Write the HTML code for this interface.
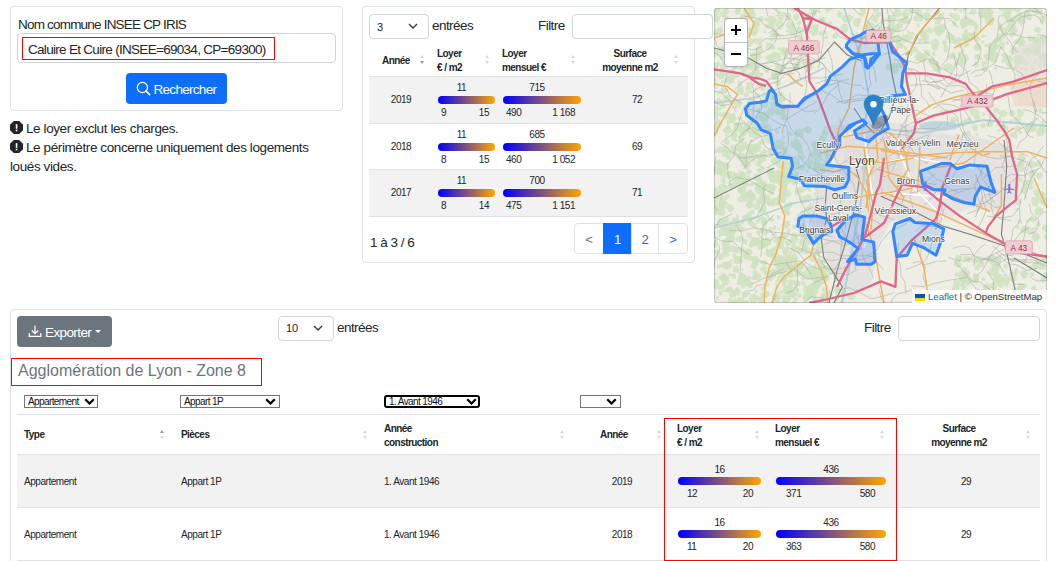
<!DOCTYPE html>
<html><head><meta charset="utf-8">
<style>
*{box-sizing:border-box;margin:0;padding:0}
html,body{width:1057px;height:561px;overflow:hidden;background:#fff}
body{position:relative;font-family:"Liberation Sans",sans-serif;color:#212529}
.a{position:absolute;white-space:nowrap}
.card{position:absolute;border:1px solid #dee2e6;border-radius:4px;background:#fff}
.inp{position:absolute;border:1px solid #ced4da;border-radius:4px;background:#fff}
.red{position:absolute;border:1px solid #ff0000}
.bar{position:absolute;height:8px;border-radius:4px;background:linear-gradient(to right,#0000ff,#ffa500)}
.sm{font-size:10px;color:#212529;letter-spacing:-0.45px}
.th{font-size:10px;font-weight:bold;color:#212529;line-height:13.5px;letter-spacing:-0.55px}
.sort{position:absolute;width:5px;height:12px}
.sort:before{content:"";position:absolute;left:0;top:1px;border-left:2.5px solid transparent;border-right:2.5px solid transparent;border-bottom:3px solid #d8d8d8}
.sort:after{content:"";position:absolute;left:0;top:7px;border-left:2.5px solid transparent;border-right:2.5px solid transparent;border-top:3px solid #d8d8d8}
.sort.up:before{border-bottom-color:#9a9a9a}
.sort.dn:after{border-top-color:#9a9a9a}
.stripe{position:absolute;background:#f2f2f2}
.hl{position:absolute;height:1px;background:#dee2e6}
.chev{position:absolute;width:7px;height:7px;border-right:1.5px solid #343a40;border-bottom:1.5px solid #343a40;transform:rotate(45deg)}
.pg{position:absolute;top:223px;height:31px;border:1px solid #dee2e6;background:#fff;color:#0d6efd;font-size:13px;text-align:center;line-height:31px}
.sel{position:absolute;border:1px solid #767676;background:#fff;font-size:10px;line-height:11px;padding-left:3px;color:#111;letter-spacing:-0.6px}
.bchev{position:absolute;width:6px;height:6px;border-right:2px solid #000;border-bottom:2px solid #000;transform:rotate(45deg)}
</style></head><body>

<!-- Card 1: search -->
<div class="card" style="left:10px;top:6px;width:333px;height:105px"></div>
<div class="a" style="left:18px;top:17px;font-size:13.5px;letter-spacing:-0.8px;line-height:16px">Nom commune INSEE CP IRIS</div>
<div class="inp" style="left:17px;top:33px;width:319px;height:30px"></div>
<div class="red" style="left:22px;top:37px;width:253px;height:23px"></div>
<div class="a" style="left:28px;top:42px;font-size:13.5px;letter-spacing:-0.7px;line-height:16px">Caluire Et Cuire (INSEE=69034, CP=69300)</div>
<div class="a" style="left:126px;top:73px;width:101px;height:31px;background:#0d6efd;border-radius:4px"></div>
<svg class="a" style="left:136px;top:81px" width="16" height="16" viewBox="0 0 16 16"><circle cx="6.4" cy="6.5" r="5.1" fill="none" stroke="#fff" stroke-width="1.25"/><path d="M10 10.1 L13.6 13.6" stroke="#fff" stroke-width="1.6" stroke-linecap="round"/></svg>
<div class="a" style="left:153.5px;top:82px;font-size:13.5px;letter-spacing:-0.7px;line-height:16px;color:#fff">Rechercher</div>

<!-- notes -->
<svg class="a" style="left:10px;top:121.2px" width="13" height="13" viewBox="0 0 13 13"><polygon points="3.8,0 9.2,0 13,3.8 13,9.2 9.2,13 3.8,13 0,9.2 0,3.8" fill="#212529"/><rect x="5.75" y="3.2" width="1.6" height="4.6" fill="#fff"/><rect x="5.75" y="8.7" width="1.6" height="1.6" fill="#fff"/></svg>
<div class="a" style="left:26px;top:121px;font-size:13.5px;letter-spacing:-0.4px;line-height:16px">Le loyer exclut les charges.</div>
<svg class="a" style="left:10px;top:140.1px" width="13" height="13" viewBox="0 0 13 13"><polygon points="3.8,0 9.2,0 13,3.8 13,9.2 9.2,13 3.8,13 0,9.2 0,3.8" fill="#212529"/><rect x="5.75" y="3.2" width="1.6" height="4.6" fill="#fff"/><rect x="5.75" y="8.7" width="1.6" height="1.6" fill="#fff"/></svg>
<div class="a" style="left:26px;top:140px;font-size:13.5px;letter-spacing:-0.4px;line-height:16px">Le périmètre concerne uniquement des logements</div>
<div class="a" style="left:10px;top:159px;font-size:13.5px;letter-spacing:-0.4px;line-height:16px">loués vides.</div>

<!-- Card 2: table -->
<div class="card" style="left:362px;top:6px;width:333px;height:257px"></div>
<div class="inp" style="left:369px;top:14px;width:60px;height:25px"></div>
<div class="a" style="left:377px;top:20px;font-size:11px;line-height:14px">3</div>
<svg class="a" style="left:408px;top:22.5px" width="10" height="6" viewBox="0 0 10 6"><path d="M1 1L5 5L9 1" fill="none" stroke="#343a40" stroke-width="1.4"/></svg>
<div class="a" style="left:432px;top:18px;font-size:13.5px;letter-spacing:-0.55px;line-height:16px">entrées</div>
<div class="a" style="left:538px;top:18px;font-size:13.5px;letter-spacing:-0.55px;line-height:16px">Filtre</div>
<div class="inp" style="left:572px;top:14px;width:141px;height:25px"></div>

<div class="stripe" style="left:369px;top:76px;width:319px;height:47px"></div>
<div class="stripe" style="left:369px;top:169px;width:319px;height:47px"></div>
<div class="hl" style="left:369px;top:76px;width:319px"></div>
<div class="hl" style="left:369px;top:123px;width:319px"></div>
<div class="hl" style="left:369px;top:169px;width:319px"></div>
<div class="hl" style="left:369px;top:216px;width:319px"></div>

<div class="a th" style="left:382px;top:54px">Année</div>
<div class="sort dn" style="left:420px;top:54px"></div>
<div class="a th" style="left:437px;top:47px">Loyer<br>€ / m2</div>
<div class="sort" style="left:485px;top:54px"></div>
<div class="a th" style="left:502px;top:47px">Loyer<br>mensuel €</div>
<div class="sort" style="left:571px;top:54px"></div>
<div class="a th" style="left:600px;top:47px;text-align:center;width:60px">Surface<br>moyenne m2</div>
<div class="sort" style="left:674px;top:54px"></div>

<!-- row template values -->
<div class="a sm" style="left:381px;width:40px;text-align:center;top:94px;line-height:12px">2019</div>
<div class="bar" style="left:438px;top:96px;width:57px"></div>
<div class="a sm" style="left:433px;width:57px;text-align:center;top:82px;line-height:12px">11</div>
<div class="a sm" style="left:441px;top:107px;line-height:12px">9</div>
<div class="a sm" style="left:438px;width:51px;text-align:right;top:107px;line-height:12px">15</div>
<div class="bar" style="left:503px;top:96px;width:78px"></div>
<div class="a sm" style="left:498px;width:78px;text-align:center;top:82px;line-height:12px">715</div>
<div class="a sm" style="left:506px;top:107px;line-height:12px">490</div>
<div class="a sm" style="left:503px;width:72px;text-align:right;top:107px;line-height:12px">1 168</div>
<div class="a sm" style="left:607px;width:60px;text-align:center;top:94px;line-height:12px">72</div>
<div class="a sm" style="left:381px;width:40px;text-align:center;top:141px;line-height:12px">2018</div>
<div class="bar" style="left:438px;top:143px;width:57px"></div>
<div class="a sm" style="left:433px;width:57px;text-align:center;top:129px;line-height:12px">11</div>
<div class="a sm" style="left:441px;top:154px;line-height:12px">8</div>
<div class="a sm" style="left:438px;width:51px;text-align:right;top:154px;line-height:12px">15</div>
<div class="bar" style="left:503px;top:143px;width:78px"></div>
<div class="a sm" style="left:498px;width:78px;text-align:center;top:129px;line-height:12px">685</div>
<div class="a sm" style="left:506px;top:154px;line-height:12px">460</div>
<div class="a sm" style="left:503px;width:72px;text-align:right;top:154px;line-height:12px">1 052</div>
<div class="a sm" style="left:607px;width:60px;text-align:center;top:141px;line-height:12px">69</div>
<div class="a sm" style="left:381px;width:40px;text-align:center;top:187px;line-height:12px">2017</div>
<div class="bar" style="left:438px;top:189px;width:57px"></div>
<div class="a sm" style="left:433px;width:57px;text-align:center;top:175px;line-height:12px">11</div>
<div class="a sm" style="left:441px;top:200px;line-height:12px">8</div>
<div class="a sm" style="left:438px;width:51px;text-align:right;top:200px;line-height:12px">14</div>
<div class="bar" style="left:503px;top:189px;width:78px"></div>
<div class="a sm" style="left:498px;width:78px;text-align:center;top:175px;line-height:12px">700</div>
<div class="a sm" style="left:506px;top:200px;line-height:12px">475</div>
<div class="a sm" style="left:503px;width:72px;text-align:right;top:200px;line-height:12px">1 151</div>
<div class="a sm" style="left:607px;width:60px;text-align:center;top:187px;line-height:12px">71</div>

<div class="a" style="left:370px;top:235px;font-size:13.5px;letter-spacing:-0.5px;line-height:16px">1 à 3 / 6</div>
<div class="pg" style="left:574px;width:30px;color:#6c757d;border-radius:4px 0 0 4px">&lt;</div>
<div class="pg" style="left:603px;width:29px;background:#0d6efd;border-color:#0d6efd;color:#fff">1</div>
<div class="pg" style="left:631px;width:28px">2</div>
<div class="pg" style="left:658px;width:30px;border-radius:0 4px 4px 0">&gt;</div>

<!-- MAP -->
<svg class="a" style="left:714px;top:8px" width="333" height="295" viewBox="0 0 333 295">
<rect width="333" height="295" fill="#eeeee4"/>
<polygon points="30.2,215.2 28.3,216.7 25.7,217.1 25.2,215.2 26.1,212.4 28.7,212.7" fill="#cfe3bf" opacity="0.85"/>
<polygon points="21.7,231.1 19.7,233.6 14.8,235.1 13.6,231.1 14.6,227.4 19.8,226.3" fill="#cfe3bf" opacity="0.85"/>
<polygon points="85.5,281.2 83.9,284.2 81.2,282.9 80.0,281.2 80.8,278.6 83.3,278.8" fill="#cfe3bf" opacity="0.85"/>
<polygon points="48.0,181.4 46.3,185.3 42.2,185.4 40.6,181.4 42.2,177.5 46.6,178.3" fill="#cfe3bf" opacity="0.85"/>
<polygon points="86.5,156.9 83.5,161.5 79.2,159.5 77.0,156.9 80.5,153.9 84.6,152.3" fill="#cfe3bf" opacity="0.85"/>
<polygon points="6.9,227.5 6.1,229.4 4.3,229.4 3.7,227.5 4.2,226.7 5.7,226.3" fill="#cfe3bf" opacity="0.85"/>
<polygon points="72.2,147.3 71.3,149.1 69.5,148.7 68.6,147.3 69.4,145.9 71.1,145.5" fill="#cfe3bf" opacity="0.85"/>
<polygon points="61.4,195.5 60.9,198.8 56.3,197.6 54.7,195.5 57.1,191.9 60.4,193.2" fill="#cfe3bf" opacity="0.85"/>
<polygon points="75.4,201.6 74.3,203.7 70.9,205.2 67.2,201.6 70.4,198.2 73.7,198.7" fill="#cfe3bf" opacity="0.85"/>
<polygon points="38.9,184.6 38.0,186.5 34.2,188.1 33.0,184.6 33.9,182.2 37.3,181.8" fill="#cfe3bf" opacity="0.85"/>
<polygon points="82.5,137.8 81.5,140.5 79.3,139.7 77.5,137.8 79.1,136.1 81.2,135.6" fill="#cfe3bf" opacity="0.85"/>
<polygon points="25.2,261.2 24.5,265.2 19.4,264.4 18.9,261.2 19.4,258.2 23.8,257.8" fill="#cfe3bf" opacity="0.85"/>
<polygon points="51.6,191.7 51.2,196.6 45.2,195.4 42.3,191.7 46.5,187.1 51.1,187.3" fill="#cfe3bf" opacity="0.85"/>
<polygon points="61.7,170.6 61.0,172.5 58.1,172.1 56.4,170.6 58.0,167.7 61.3,168.2" fill="#cfe3bf" opacity="0.85"/>
<polygon points="3.2,250.4 2.5,252.0 0.2,252.3 -0.3,250.4 0.2,248.7 2.7,248.9" fill="#cfe3bf" opacity="0.85"/>
<polygon points="25.8,213.6 25.4,218.0 20.1,215.8 18.2,213.6 21.3,210.6 24.4,209.9" fill="#cfe3bf" opacity="0.85"/>
<polygon points="51.2,202.8 50.1,205.3 47.3,207.4 43.6,202.8 46.6,199.8 50.4,199.7" fill="#cfe3bf" opacity="0.85"/>
<polygon points="76.4,222.7 75.3,225.0 72.9,224.7 72.6,222.7 73.2,220.2 76.0,220.6" fill="#cfe3bf" opacity="0.85"/>
<polygon points="94.7,229.0 93.8,231.3 90.5,231.4 89.8,229.0 90.5,227.3 93.5,226.7" fill="#cfe3bf" opacity="0.85"/>
<polygon points="104.6,283.9 102.3,286.1 100.2,286.7 98.2,283.9 99.5,281.3 102.7,281.5" fill="#cfe3bf" opacity="0.85"/>
<polygon points="12.9,222.9 12.3,223.7 11.4,224.5 10.8,222.9 11.0,222.0 12.8,221.4" fill="#cfe3bf" opacity="0.85"/>
<polygon points="100.2,286.7 98.2,289.6 94.2,288.7 92.2,286.7 95.0,284.1 97.9,283.1" fill="#cfe3bf" opacity="0.85"/>
<polygon points="30.3,151.5 28.9,153.2 26.8,153.2 25.7,151.5 26.7,148.8 28.9,149.2" fill="#cfe3bf" opacity="0.85"/>
<polygon points="22.9,240.9 20.4,244.7 15.9,243.4 15.7,240.9 15.9,237.4 20.4,236.9" fill="#cfe3bf" opacity="0.85"/>
<polygon points="23.6,166.8 22.2,168.8 20.0,168.3 19.0,166.8 20.1,164.9 22.3,165.4" fill="#cfe3bf" opacity="0.85"/>
<polygon points="4.7,203.9 3.8,206.7 1.7,207.1 0.0,203.9 1.3,201.0 4.3,201.5" fill="#cfe3bf" opacity="0.85"/>
<polygon points="59.3,246.1 58.2,249.7 53.6,249.1 50.4,246.1 52.5,241.5 57.1,243.3" fill="#cfe3bf" opacity="0.85"/>
<polygon points="34.5,152.8 31.3,156.9 28.1,155.8 25.3,152.8 28.4,148.7 31.3,149.8" fill="#cfe3bf" opacity="0.85"/>
<polygon points="68.0,238.2 67.5,239.2 66.0,239.9 65.4,238.2 66.2,237.2 67.5,237.3" fill="#cfe3bf" opacity="0.85"/>
<polygon points="104.3,279.0 103.1,280.8 101.3,280.7 100.1,279.0 101.3,277.2 103.2,277.3" fill="#cfe3bf" opacity="0.85"/>
<polygon points="64.4,139.8 63.4,142.6 60.5,142.8 58.3,139.8 59.7,136.9 62.8,136.3" fill="#cfe3bf" opacity="0.85"/>
<polygon points="20.4,178.0 18.4,181.2 14.6,180.5 13.7,178.0 14.0,174.6 18.5,175.1" fill="#cfe3bf" opacity="0.85"/>
<polygon points="33.4,187.1 32.3,191.6 28.6,190.4 26.6,187.1 28.0,183.8 33.3,184.4" fill="#cfe3bf" opacity="0.85"/>
<polygon points="33.3,137.4 31.8,138.6 30.3,139.3 28.9,137.4 30.1,136.3 31.9,136.2" fill="#cfe3bf" opacity="0.85"/>
<polygon points="62.4,219.5 61.4,221.7 59.3,221.9 58.8,219.5 59.6,217.5 62.1,217.4" fill="#cfe3bf" opacity="0.85"/>
<polygon points="37.7,270.5 35.4,273.7 32.7,273.1 31.3,270.5 33.3,267.8 35.4,267.9" fill="#cfe3bf" opacity="0.85"/>
<polygon points="78.7,197.7 75.5,201.2 72.5,199.7 71.3,197.7 73.1,194.8 76.5,195.2" fill="#cfe3bf" opacity="0.85"/>
<polygon points="102.5,241.6 101.3,243.4 99.0,243.0 97.8,241.6 98.9,240.0 101.2,240.0" fill="#cfe3bf" opacity="0.85"/>
<polygon points="13.9,127.5 13.4,129.1 11.7,128.8 10.7,127.5 11.7,125.7 13.3,126.4" fill="#cfe3bf" opacity="0.85"/>
<polygon points="105.8,245.9 104.8,247.8 102.6,247.7 100.2,245.9 102.1,244.2 104.5,244.2" fill="#cfe3bf" opacity="0.85"/>
<polygon points="47.5,149.4 47.2,150.3 45.9,150.7 45.0,149.4 45.9,148.2 47.1,148.6" fill="#cfe3bf" opacity="0.85"/>
<polygon points="112.7,158.3 112.0,159.6 110.4,159.3 109.0,158.3 110.0,156.8 112.2,157.0" fill="#cfe3bf" opacity="0.85"/>
<polygon points="33.3,166.5 30.2,170.6 26.0,170.3 26.1,166.5 27.3,163.8 30.1,164.1" fill="#cfe3bf" opacity="0.85"/>
<polygon points="78.1,277.6 76.5,279.9 73.9,278.7 73.5,277.6 73.9,276.3 76.1,275.3" fill="#cfe3bf" opacity="0.85"/>
<polygon points="16.1,188.2 14.2,190.8 11.7,191.0 10.6,188.2 12.0,186.2 14.2,185.6" fill="#cfe3bf" opacity="0.85"/>
<polygon points="57.6,167.2 56.4,168.7 54.3,168.4 53.0,167.2 54.3,165.1 56.4,165.9" fill="#cfe3bf" opacity="0.85"/>
<polygon points="31.8,267.6 29.0,271.6 25.2,270.3 24.1,267.6 25.6,263.5 28.5,264.4" fill="#cfe3bf" opacity="0.85"/>
<polygon points="15.6,134.2 14.0,137.6 10.8,136.1 9.8,134.2 11.2,130.9 14.4,130.4" fill="#cfe3bf" opacity="0.85"/>
<polygon points="72.0,258.0 70.6,261.5 68.4,259.8 65.2,258.0 67.4,256.1 71.1,255.8" fill="#cfe3bf" opacity="0.85"/>
<polygon points="99.6,227.7 97.0,231.0 93.7,229.9 91.0,227.7 93.2,225.3 97.2,224.7" fill="#cfe3bf" opacity="0.85"/>
<polygon points="86.3,133.5 85.1,136.1 82.5,136.0 80.9,133.5 82.6,130.5 84.9,131.4" fill="#cfe3bf" opacity="0.85"/>
<polygon points="12.3,158.1 10.9,160.5 8.6,160.4 7.7,158.1 8.4,155.9 11.0,156.4" fill="#cfe3bf" opacity="0.85"/>
<polygon points="95.2,191.2 92.1,194.4 87.3,196.0 84.9,191.2 86.3,188.5 91.7,187.8" fill="#cfe3bf" opacity="0.85"/>
<polygon points="54.3,180.3 51.1,183.2 47.9,182.7 46.8,180.3 47.5,175.8 52.4,176.0" fill="#cfe3bf" opacity="0.85"/>
<polygon points="45.2,148.2 44.1,150.1 41.3,150.0 40.5,148.2 41.3,146.4 43.8,145.6" fill="#cfe3bf" opacity="0.85"/>
<polygon points="4.4,143.0 2.2,145.2 -0.8,145.7 -3.2,143.0 -1.0,141.2 2.4,141.2" fill="#cfe3bf" opacity="0.85"/>
<polygon points="51.4,179.2 50.4,180.3 48.7,180.5 48.4,179.2 49.0,177.7 50.6,177.4" fill="#cfe3bf" opacity="0.85"/>
<polygon points="95.2,163.3 93.9,165.3 92.0,164.7 91.6,163.3 91.9,161.2 94.2,161.7" fill="#cfe3bf" opacity="0.85"/>
<polygon points="81.0,282.5 78.6,285.2 74.9,286.6 70.9,282.5 74.6,279.3 78.5,278.1" fill="#cfe3bf" opacity="0.85"/>
<polygon points="53.7,287.9 52.9,290.0 50.8,290.1 49.9,287.9 51.0,286.1 53.0,286.5" fill="#cfe3bf" opacity="0.85"/>
<polygon points="83.6,279.5 82.5,281.5 80.4,281.2 80.2,279.5 80.9,278.1 82.7,278.2" fill="#cfe3bf" opacity="0.85"/>
<polygon points="35.1,286.2 33.1,289.1 29.3,291.6 28.0,286.2 29.4,283.5 33.5,281.6" fill="#cfe3bf" opacity="0.85"/>
<polygon points="99.0,230.4 99.2,232.9 94.7,234.0 93.0,230.4 95.0,227.6 99.2,227.8" fill="#cfe3bf" opacity="0.85"/>
<polygon points="109.5,151.1 105.9,153.9 101.3,154.3 100.5,151.1 101.1,148.4 107.3,146.9" fill="#cfe3bf" opacity="0.85"/>
<polygon points="47.7,138.7 45.0,140.5 43.0,140.8 40.4,138.7 42.9,135.6 45.8,135.5" fill="#cfe3bf" opacity="0.85"/>
<polygon points="32.8,182.0 30.3,184.6 26.3,186.7 22.7,182.0 26.1,177.9 30.5,177.9" fill="#cfe3bf" opacity="0.85"/>
<polygon points="100.3,155.1 97.1,159.0 93.7,157.3 93.0,155.1 94.7,151.1 97.4,151.3" fill="#cfe3bf" opacity="0.85"/>
<polygon points="18.4,122.4 15.6,126.2 10.6,125.1 8.7,122.4 11.6,118.4 15.1,118.7" fill="#cfe3bf" opacity="0.85"/>
<polygon points="45.8,175.7 44.7,178.5 41.3,177.6 39.4,175.7 42.0,173.4 44.5,173.7" fill="#cfe3bf" opacity="0.85"/>
<polygon points="78.7,169.4 76.6,174.5 71.1,173.5 69.8,169.4 72.6,165.6 77.1,164.6" fill="#cfe3bf" opacity="0.85"/>
<polygon points="10.5,269.5 7.9,272.0 5.1,271.8 3.4,269.5 5.6,267.5 8.2,267.4" fill="#cfe3bf" opacity="0.85"/>
<polygon points="47.4,234.1 44.6,237.4 40.5,236.8 39.8,234.1 41.0,231.6 45.1,229.1" fill="#cfe3bf" opacity="0.85"/>
<polygon points="66.7,249.0 63.5,253.2 59.9,253.7 57.6,249.0 58.8,246.0 63.1,244.6" fill="#cfe3bf" opacity="0.85"/>
<polygon points="70.2,134.8 69.8,135.9 68.2,136.1 67.3,134.8 68.0,133.4 69.6,133.9" fill="#cfe3bf" opacity="0.85"/>
<polygon points="114.2,241.0 113.8,242.0 112.1,242.4 111.0,241.0 111.5,239.7 113.4,239.4" fill="#cfe3bf" opacity="0.85"/>
<polygon points="103.6,155.3 102.6,158.5 100.3,157.8 99.8,155.3 100.3,152.4 103.1,153.4" fill="#cfe3bf" opacity="0.85"/>
<polygon points="115.4,235.8 115.0,237.8 111.3,238.8 110.1,235.8 110.9,232.3 114.8,233.6" fill="#cfe3bf" opacity="0.85"/>
<polygon points="8.8,195.7 7.9,198.4 5.3,197.3 3.7,195.7 5.9,194.1 7.7,193.6" fill="#cfe3bf" opacity="0.85"/>
<polygon points="47.0,269.0 46.1,271.8 42.5,272.0 39.4,269.0 42.7,266.1 46.2,265.2" fill="#cfe3bf" opacity="0.85"/>
<polygon points="30.6,242.4 29.0,244.6 27.2,244.3 25.9,242.4 27.2,241.2 29.5,240.1" fill="#cfe3bf" opacity="0.85"/>
<polygon points="59.4,221.3 57.3,223.8 54.8,223.1 53.2,221.3 55.5,219.0 57.4,219.0" fill="#cfe3bf" opacity="0.85"/>
<polygon points="71.1,138.8 68.7,142.3 65.6,141.6 63.7,138.8 65.9,136.9 69.0,136.0" fill="#cfe3bf" opacity="0.85"/>
<polygon points="39.3,276.1 37.5,280.6 33.0,278.5 29.9,276.1 32.9,272.4 37.1,273.0" fill="#cfe3bf" opacity="0.85"/>
<polygon points="82.2,218.4 81.4,221.2 79.2,220.6 78.1,218.4 78.8,216.8 81.1,216.1" fill="#cfe3bf" opacity="0.85"/>
<polygon points="24.6,208.4 24.5,210.6 22.2,210.0 21.8,208.4 22.3,206.1 23.9,206.1" fill="#cfe3bf" opacity="0.85"/>
<polygon points="57.9,196.0 56.0,198.0 53.9,197.5 51.7,196.0 53.5,193.4 55.6,193.7" fill="#cfe3bf" opacity="0.85"/>
<polygon points="90.3,159.4 88.1,161.4 84.7,161.6 83.3,159.4 84.4,156.4 87.8,156.5" fill="#cfe3bf" opacity="0.85"/>
<polygon points="51.5,260.7 50.2,262.1 48.3,262.9 47.4,260.7 48.0,258.1 50.6,258.4" fill="#cfe3bf" opacity="0.85"/>
<polygon points="46.7,127.6 44.1,129.7 40.6,131.0 39.6,127.6 41.6,124.7 44.7,124.6" fill="#cfe3bf" opacity="0.85"/>
<polygon points="23.0,143.9 19.6,146.0 16.4,146.7 15.1,143.9 16.6,141.4 20.5,142.0" fill="#cfe3bf" opacity="0.85"/>
<polygon points="33.7,242.3 33.2,244.6 31.7,244.4 30.5,242.3 31.4,240.3 33.2,240.9" fill="#cfe3bf" opacity="0.85"/>
<polygon points="54.1,260.0 52.9,262.0 50.7,262.3 49.3,260.0 51.2,258.6 53.2,258.3" fill="#cfe3bf" opacity="0.85"/>
<polygon points="69.7,166.4 67.8,169.9 63.6,169.4 62.7,166.4 63.5,164.0 68.0,162.8" fill="#cfe3bf" opacity="0.85"/>
<polygon points="74.2,196.8 72.5,198.9 71.0,198.4 69.9,196.8 70.5,195.3 72.3,195.2" fill="#cfe3bf" opacity="0.85"/>
<polygon points="6.1,244.0 3.0,247.2 -1.6,247.2 -3.2,244.0 -1.8,241.4 3.4,241.5" fill="#cfe3bf" opacity="0.85"/>
<polygon points="112.9,153.5 111.9,155.0 109.9,154.5 108.9,153.5 109.7,152.6 111.4,151.9" fill="#cfe3bf" opacity="0.85"/>
<polygon points="110.5,193.8 108.4,197.3 105.3,196.6 102.1,193.8 104.7,191.1 108.2,190.2" fill="#cfe3bf" opacity="0.85"/>
<polygon points="87.9,287.4 86.5,289.6 83.9,290.3 83.1,287.4 84.5,285.5 87.0,285.3" fill="#cfe3bf" opacity="0.85"/>
<polygon points="104.1,218.8 103.1,221.5 100.5,221.4 99.5,218.8 100.6,217.1 103.0,216.4" fill="#cfe3bf" opacity="0.85"/>
<polygon points="87.6,138.2 85.7,141.4 82.1,141.3 79.3,138.2 81.1,135.5 86.2,134.0" fill="#cfe3bf" opacity="0.85"/>
<polygon points="84.3,291.4 82.7,293.2 80.7,292.8 79.6,291.4 81.1,290.2 82.7,289.4" fill="#cfe3bf" opacity="0.85"/>
<polygon points="52.4,175.2 49.5,178.6 47.3,177.5 44.6,175.2 47.5,172.0 49.7,173.2" fill="#cfe3bf" opacity="0.85"/>
<polygon points="111.7,160.1 109.6,164.1 105.5,163.7 103.4,160.1 105.1,155.1 110.5,155.4" fill="#cfe3bf" opacity="0.85"/>
<polygon points="9.7,163.8 9.5,166.2 7.0,165.1 6.1,163.8 6.8,162.3 9.0,161.4" fill="#cfe3bf" opacity="0.85"/>
<polygon points="25.8,281.5 24.6,283.4 22.0,283.8 20.4,281.5 22.2,279.2 23.9,278.7" fill="#cfe3bf" opacity="0.85"/>
<polygon points="41.3,149.7 40.8,151.7 38.4,151.5 37.0,149.7 38.3,147.1 40.8,148.1" fill="#cfe3bf" opacity="0.85"/>
<polygon points="22.3,268.3 21.5,270.7 18.2,270.7 17.6,268.3 18.1,265.7 21.0,265.8" fill="#cfe3bf" opacity="0.85"/>
<polygon points="85.6,152.6 84.1,157.5 80.3,155.4 77.4,152.6 79.3,147.4 85.5,149.9" fill="#cfe3bf" opacity="0.85"/>
<polygon points="47.4,138.7 46.0,143.4 41.4,143.1 39.5,138.7 41.1,136.3 45.0,134.5" fill="#cfe3bf" opacity="0.85"/>
<polygon points="33.5,235.9 32.8,237.2 31.3,237.0 30.5,235.9 31.4,234.3 33.1,235.1" fill="#cfe3bf" opacity="0.85"/>
<polygon points="25.7,213.9 23.7,218.9 19.8,218.0 16.8,213.9 19.3,209.0 25.0,210.5" fill="#cfe3bf" opacity="0.85"/>
<polygon points="31.2,148.9 29.2,153.3 25.0,152.2 21.7,148.9 25.1,146.2 29.9,144.4" fill="#cfe3bf" opacity="0.85"/>
<polygon points="72.7,190.8 70.0,194.4 65.9,194.4 62.2,190.8 66.1,186.3 70.8,186.5" fill="#cfe3bf" opacity="0.85"/>
<polygon points="60.8,211.5 58.8,213.8 55.0,213.3 53.9,211.5 55.2,209.5 58.2,209.6" fill="#cfe3bf" opacity="0.85"/>
<polygon points="65.7,220.9 65.5,222.1 63.8,221.9 63.0,220.9 63.8,220.1 65.2,219.7" fill="#cfe3bf" opacity="0.85"/>
<polygon points="7.2,258.2 6.4,260.4 3.6,260.4 2.9,258.2 3.8,256.3 6.4,256.3" fill="#cfe3bf" opacity="0.85"/>
<polygon points="2.2,126.6 1.8,128.0 -0.3,128.5 -0.5,126.6 0.0,124.3 1.5,125.2" fill="#cfe3bf" opacity="0.85"/>
<polygon points="33.0,270.9 30.6,275.0 27.3,275.6 23.5,270.9 26.3,267.0 31.4,267.9" fill="#cfe3bf" opacity="0.85"/>
<polygon points="37.6,141.6 36.3,143.2 33.8,143.6 32.8,141.6 34.5,140.1 36.1,139.9" fill="#cfe3bf" opacity="0.85"/>
<polygon points="82.2,273.9 78.8,277.2 74.8,278.0 73.6,273.9 75.0,271.2 79.6,271.7" fill="#cfe3bf" opacity="0.85"/>
<polygon points="76.8,205.0 76.0,207.3 73.5,207.3 71.9,205.0 73.3,202.7 76.0,202.8" fill="#cfe3bf" opacity="0.85"/>
<polygon points="47.9,156.1 47.0,160.0 43.5,158.8 40.4,156.1 43.4,152.9 46.8,152.7" fill="#cfe3bf" opacity="0.85"/>
<polygon points="65.4,170.0 61.4,173.1 56.7,175.0 54.2,170.0 56.7,165.9 61.6,165.7" fill="#cfe3bf" opacity="0.85"/>
<polygon points="56.9,233.5 53.7,238.1 49.4,237.1 46.7,233.5 49.2,229.8 53.7,230.6" fill="#cfe3bf" opacity="0.85"/>
<polygon points="73.8,141.9 73.2,144.6 69.3,144.5 68.0,141.9 69.2,138.7 73.1,140.0" fill="#cfe3bf" opacity="0.85"/>
<polygon points="97.5,122.1 95.8,125.8 92.4,124.6 90.2,122.1 92.1,119.5 95.4,118.3" fill="#cfe3bf" opacity="0.85"/>
<polygon points="11.0,164.3 10.7,168.0 6.4,168.4 3.2,164.3 6.0,161.3 10.0,159.6" fill="#cfe3bf" opacity="0.85"/>
<polygon points="113.4,120.3 112.6,121.7 110.5,121.7 109.0,120.3 110.4,118.1 112.6,118.1" fill="#cfe3bf" opacity="0.85"/>
<polygon points="49.5,158.9 48.4,160.6 47.1,160.2 46.6,158.9 46.7,157.5 48.3,157.8" fill="#cfe3bf" opacity="0.85"/>
<polygon points="77.1,168.6 76.5,173.3 72.1,171.2 70.8,168.6 72.7,165.9 76.7,163.8" fill="#cfe3bf" opacity="0.85"/>
<polygon points="102.6,266.6 100.2,269.2 97.4,268.5 95.8,266.6 97.3,262.7 100.2,263.2" fill="#cfe3bf" opacity="0.85"/>
<polygon points="108.5,159.6 104.2,164.2 99.8,164.2 98.6,159.6 101.1,156.5 104.7,155.1" fill="#cfe3bf" opacity="0.85"/>
<polygon points="12.3,282.5 11.2,284.1 9.2,283.7 8.5,282.5 9.3,281.5 11.2,281.0" fill="#cfe3bf" opacity="0.85"/>
<polygon points="8.8,284.7 7.9,286.5 5.7,287.6 4.4,284.7 5.6,282.2 8.3,283.0" fill="#cfe3bf" opacity="0.85"/>
<polygon points="20.4,215.7 19.1,217.6 16.8,217.1 16.2,215.7 17.1,213.7 19.4,214.0" fill="#cfe3bf" opacity="0.85"/>
<polygon points="115.2,227.5 113.2,230.6 108.3,231.7 106.1,227.5 107.6,222.7 113.4,224.6" fill="#cfe3bf" opacity="0.85"/>
<polygon points="83.7,229.8 83.9,233.4 78.2,234.0 76.7,229.8 78.5,224.4 83.2,225.0" fill="#cfe3bf" opacity="0.85"/>
<polygon points="38.9,244.6 36.1,248.6 33.0,247.0 31.6,244.6 33.5,240.8 36.9,240.8" fill="#cfe3bf" opacity="0.85"/>
<polygon points="21.3,138.9 19.8,141.7 17.2,140.9 15.4,138.9 17.2,137.1 19.6,136.6" fill="#cfe3bf" opacity="0.85"/>
<polygon points="63.3,227.2 60.8,228.7 58.0,229.4 57.9,227.2 58.2,225.4 61.0,224.6" fill="#cfe3bf" opacity="0.85"/>
<polygon points="46.1,234.4 43.0,237.8 38.0,238.8 35.6,234.4 37.8,231.3 43.2,229.0" fill="#cfe3bf" opacity="0.85"/>
<polygon points="7.4,164.1 6.6,166.9 1.6,166.7 -1.8,164.1 1.0,158.8 5.8,160.3" fill="#cfe3bf" opacity="0.85"/>
<polygon points="18.7,252.6 18.6,253.8 16.8,254.1 15.7,252.6 16.4,251.3 18.4,250.7" fill="#cfe3bf" opacity="0.85"/>
<polygon points="31.6,150.4 30.6,153.7 26.2,153.0 22.7,150.4 26.2,147.7 29.7,145.8" fill="#cfe3bf" opacity="0.85"/>
<polygon points="18.6,217.1 16.6,219.4 12.9,221.0 11.4,217.1 12.7,214.7 16.4,213.7" fill="#cfe3bf" opacity="0.85"/>
<polygon points="98.0,220.1 96.4,222.3 94.5,222.0 94.4,220.1 94.8,219.2 96.7,218.1" fill="#cfe3bf" opacity="0.85"/>
<polygon points="9.3,199.5 8.1,203.1 2.4,204.3 -0.1,199.5 3.8,195.1 7.8,195.7" fill="#cfe3bf" opacity="0.85"/>
<polygon points="67.9,173.4 65.9,175.9 64.1,175.5 63.3,173.4 64.2,171.2 66.0,171.1" fill="#cfe3bf" opacity="0.85"/>
<polygon points="36.9,277.0 35.8,278.7 34.1,278.8 33.4,277.0 34.1,274.7 35.7,275.3" fill="#cfe3bf" opacity="0.85"/>
<polygon points="101.4,220.1 99.1,221.4 97.2,222.6 96.3,220.1 96.9,218.8 99.0,217.9" fill="#cfe3bf" opacity="0.85"/>
<polygon points="12.2,212.3 11.1,213.7 9.1,214.2 8.9,212.3 9.3,210.6 10.9,210.4" fill="#cfe3bf" opacity="0.85"/>
<polygon points="31.4,278.3 30.3,280.1 27.7,280.4 26.9,278.3 27.6,275.7 30.4,276.4" fill="#cfe3bf" opacity="0.85"/>
<polygon points="60.1,165.2 59.6,167.6 56.8,167.4 55.3,165.2 57.3,162.4 59.3,163.2" fill="#cfe3bf" opacity="0.85"/>
<polygon points="111.9,252.4 111.5,254.4 109.3,254.8 108.1,252.4 108.9,250.5 111.8,250.3" fill="#cfe3bf" opacity="0.85"/>
<polygon points="11.2,169.0 10.8,170.5 9.1,170.1 8.5,169.0 8.8,168.1 10.5,167.7" fill="#cfe3bf" opacity="0.85"/>
<polygon points="79.0,264.6 77.4,267.3 75.1,267.0 73.3,264.6 74.9,261.7 77.3,262.8" fill="#cfe3bf" opacity="0.85"/>
<polygon points="35.2,211.2 33.8,213.6 31.3,212.9 29.8,211.2 30.9,208.1 33.7,208.5" fill="#cfe3bf" opacity="0.85"/>
<polygon points="45.3,139.5 42.1,144.5 37.4,143.7 34.9,139.5 37.0,136.3 41.4,135.6" fill="#cfe3bf" opacity="0.85"/>
<polygon points="73.2,181.8 70.0,186.1 66.2,186.4 64.7,181.8 65.5,178.7 69.5,177.8" fill="#cfe3bf" opacity="0.85"/>
<polygon points="55.6,241.9 54.2,243.7 52.4,243.4 51.9,241.9 52.8,240.7 54.4,240.8" fill="#cfe3bf" opacity="0.85"/>
<polygon points="12.6,268.4 11.4,270.4 8.3,269.9 6.5,268.4 8.4,266.4 11.5,266.3" fill="#cfe3bf" opacity="0.85"/>
<polygon points="74.3,176.1 71.8,180.9 67.6,178.9 63.7,176.1 67.7,171.8 72.0,173.1" fill="#cfe3bf" opacity="0.85"/>
<polygon points="93.8,172.0 91.2,175.9 87.5,175.0 87.1,172.0 88.1,167.2 92.2,167.5" fill="#cfe3bf" opacity="0.85"/>
<polygon points="89.8,143.4 88.1,146.3 84.7,146.2 82.7,143.4 85.3,141.4 87.1,141.4" fill="#cfe3bf" opacity="0.85"/>
<polygon points="69.4,168.2 69.0,170.2 66.3,169.5 66.0,168.2 66.4,166.0 69.1,165.8" fill="#cfe3bf" opacity="0.85"/>
<polygon points="3.1,278.1 1.8,280.0 -0.8,279.9 -2.7,278.1 -0.7,276.1 1.6,276.1" fill="#cfe3bf" opacity="0.85"/>
<polygon points="72.5,267.5 70.4,271.6 66.3,269.5 65.7,267.5 65.9,263.9 69.9,264.4" fill="#cfe3bf" opacity="0.85"/>
<polygon points="17.0,224.7 16.3,229.3 11.2,228.0 7.7,224.7 10.3,220.9 16.1,219.7" fill="#cfe3bf" opacity="0.85"/>
<polygon points="45.3,252.2 44.7,255.0 42.3,253.8 40.8,252.2 41.6,250.4 44.6,249.8" fill="#cfe3bf" opacity="0.85"/>
<polygon points="43.0,269.6 41.5,271.5 38.2,272.5 37.1,269.6 38.5,267.5 41.1,267.0" fill="#cfe3bf" opacity="0.85"/>
<polygon points="107.7,137.3 106.3,140.7 101.6,142.5 97.2,137.3 101.0,133.1 106.3,132.3" fill="#cfe3bf" opacity="0.85"/>
<polygon points="101.5,170.5 97.3,173.3 93.6,173.9 90.5,170.5 93.6,167.8 98.1,166.3" fill="#cfe3bf" opacity="0.85"/>
<polygon points="107.7,277.8 106.2,279.2 104.5,280.1 103.4,277.8 104.0,275.4 106.2,275.5" fill="#cfe3bf" opacity="0.85"/>
<polygon points="97.1,243.0 94.5,246.8 90.3,246.1 86.1,243.0 89.7,238.2 94.2,238.5" fill="#cfe3bf" opacity="0.85"/>
<polygon points="55.4,208.9 54.9,210.4 53.5,210.5 52.9,208.9 53.5,207.4 54.7,206.9" fill="#cfe3bf" opacity="0.85"/>
<polygon points="44.2,265.1 42.8,267.6 40.0,268.5 38.3,265.1 40.2,261.8 43.5,262.8" fill="#cfe3bf" opacity="0.85"/>
<polygon points="17.8,167.1 16.4,171.0 12.5,169.9 10.8,167.1 13.1,163.6 16.9,162.6" fill="#cfe3bf" opacity="0.85"/>
<polygon points="36.0,150.4 34.7,152.5 31.1,153.1 30.2,150.4 31.2,148.0 34.5,146.8" fill="#cfe3bf" opacity="0.85"/>
<polygon points="115.0,158.2 112.4,159.7 109.7,160.5 108.9,158.2 109.7,155.0 113.0,155.2" fill="#cfe3bf" opacity="0.85"/>
<polygon points="67.0,174.4 66.2,175.6 64.6,176.7 62.8,174.4 64.4,172.7 66.4,172.3" fill="#cfe3bf" opacity="0.85"/>
<polygon points="39.0,209.7 35.9,212.3 32.8,211.8 31.4,209.7 33.6,206.6 36.1,206.9" fill="#cfe3bf" opacity="0.85"/>
<polygon points="72.4,187.9 69.8,192.0 65.4,191.6 63.3,187.9 65.2,185.1 69.7,184.0" fill="#cfe3bf" opacity="0.85"/>
<polygon points="55.7,276.8 54.5,278.4 51.8,278.3 50.6,276.8 51.8,274.1 54.8,275.1" fill="#cfe3bf" opacity="0.85"/>
<polygon points="106.7,202.6 105.9,204.9 103.3,204.8 102.0,202.6 103.1,200.2 106.5,199.1" fill="#cfe3bf" opacity="0.85"/>
<polygon points="111.5,185.7 108.9,188.1 105.0,189.2 103.9,185.7 105.9,181.8 109.6,181.4" fill="#cfe3bf" opacity="0.85"/>
<polygon points="16.1,241.0 14.7,243.7 11.8,243.9 8.1,241.0 10.7,236.3 14.6,236.6" fill="#cfe3bf" opacity="0.85"/>
<polygon points="105.0,233.6 104.2,235.4 101.6,236.0 100.9,233.6 101.8,231.1 104.5,231.2" fill="#cfe3bf" opacity="0.85"/>
<polygon points="106.6,252.6 104.4,254.5 101.8,255.5 99.7,252.6 101.7,250.9 104.7,250.2" fill="#cfe3bf" opacity="0.85"/>
<polygon points="90.4,270.7 89.4,272.5 87.7,271.8 87.1,270.7 87.4,268.8 89.3,269.4" fill="#cfe3bf" opacity="0.85"/>
<polygon points="91.4,182.3 90.1,184.6 87.7,185.0 86.6,182.3 87.7,180.2 90.5,180.8" fill="#cfe3bf" opacity="0.85"/>
<polygon points="24.0,126.7 22.0,129.9 18.7,128.8 18.2,126.7 19.3,124.1 21.4,124.5" fill="#cfe3bf" opacity="0.85"/>
<polygon points="85.3,164.6 84.3,166.4 81.8,166.3 81.1,164.6 82.4,162.4 83.8,163.5" fill="#cfe3bf" opacity="0.85"/>
<polygon points="111.6,214.0 108.6,216.4 105.4,217.3 104.6,214.0 105.5,212.0 109.3,210.7" fill="#cfe3bf" opacity="0.85"/>
<polygon points="19.7,221.4 19.4,224.3 15.4,223.8 12.7,221.4 15.6,219.6 18.9,219.6" fill="#cfe3bf" opacity="0.85"/>
<polygon points="52.4,151.0 51.4,152.9 49.7,153.0 47.5,151.0 49.0,149.6 51.7,149.4" fill="#cfe3bf" opacity="0.85"/>
<polygon points="112.1,206.8 108.9,210.8 105.1,209.9 105.0,206.8 105.2,203.0 109.2,203.0" fill="#cfe3bf" opacity="0.85"/>
<polygon points="98.2,121.3 95.4,124.5 90.8,123.7 88.2,121.3 91.1,119.0 94.4,118.1" fill="#cfe3bf" opacity="0.85"/>
<polygon points="109.2,202.5 107.6,205.7 103.3,205.9 102.2,202.5 103.8,197.8 108.4,197.9" fill="#cfe3bf" opacity="0.85"/>
<polygon points="53.1,189.1 50.7,191.6 48.1,192.3 46.0,189.1 48.0,186.6 50.8,187.0" fill="#cfe3bf" opacity="0.85"/>
<polygon points="32.5,209.5 31.9,212.6 29.1,211.2 28.0,209.5 28.7,207.4 32.6,207.2" fill="#cfe3bf" opacity="0.85"/>
<polygon points="23.8,123.3 22.4,126.1 19.7,126.8 18.2,123.3 19.6,120.5 22.4,121.0" fill="#cfe3bf" opacity="0.85"/>
<polygon points="33.5,121.9 30.9,125.4 27.6,124.1 24.9,121.9 27.6,119.4 31.8,119.1" fill="#cfe3bf" opacity="0.85"/>
<polygon points="76.4,292.0 74.9,294.6 70.5,295.7 69.1,292.0 71.1,288.5 75.7,288.5" fill="#cfe3bf" opacity="0.85"/>
<polygon points="104.8,268.0 101.7,272.7 97.8,272.0 96.3,268.0 97.8,264.7 102.4,265.4" fill="#cfe3bf" opacity="0.85"/>
<polygon points="2.9,194.3 2.5,197.5 -1.1,197.4 -1.2,194.3 -0.6,192.7 2.5,192.2" fill="#cfe3bf" opacity="0.85"/>
<polygon points="91.7,238.2 90.6,239.5 88.6,239.8 87.8,238.2 88.3,236.4 90.4,235.8" fill="#cfe3bf" opacity="0.85"/>
<polygon points="35.4,137.6 32.3,141.9 28.3,140.6 27.3,137.6 27.7,133.4 31.8,133.8" fill="#cfe3bf" opacity="0.85"/>
<polygon points="25.2,250.8 23.0,253.2 20.6,252.3 20.4,250.8 20.6,247.6 23.4,247.8" fill="#cfe3bf" opacity="0.85"/>
<polygon points="85.4,167.8 83.2,170.7 80.6,170.2 78.8,167.8 80.0,165.7 83.1,165.3" fill="#cfe3bf" opacity="0.85"/>
<polygon points="16.7,257.7 14.0,261.6 9.8,261.0 5.7,257.7 10.1,253.2 13.3,254.1" fill="#cfe3bf" opacity="0.85"/>
<polygon points="66.1,263.4 65.3,265.4 63.3,266.2 62.3,263.4 63.5,261.5 65.4,260.6" fill="#cfe3bf" opacity="0.85"/>
<polygon points="61.7,248.5 60.0,251.2 58.0,250.8 55.9,248.5 57.5,246.6 60.2,245.8" fill="#cfe3bf" opacity="0.85"/>
<polygon points="71.2,129.3 69.9,131.4 68.4,131.5 67.5,129.3 68.4,127.2 70.5,127.6" fill="#cfe3bf" opacity="0.85"/>
<polygon points="31.0,212.4 29.7,215.0 27.6,214.0 26.5,212.4 27.5,210.2 30.3,210.5" fill="#cfe3bf" opacity="0.85"/>
<polygon points="51.7,262.8 51.6,264.6 49.1,265.0 48.2,262.8 48.5,261.0 51.2,259.9" fill="#cfe3bf" opacity="0.85"/>
<polygon points="102.0,272.0 100.5,273.8 99.4,273.8 98.9,272.0 99.2,270.6 100.8,270.3" fill="#cfe3bf" opacity="0.85"/>
<polygon points="15.8,247.0 13.9,248.5 10.8,248.8 10.5,247.0 10.9,245.1 13.7,244.6" fill="#cfe3bf" opacity="0.85"/>
<polygon points="31.6,140.7 29.5,143.4 26.7,143.5 26.3,140.7 26.5,138.0 29.6,137.9" fill="#cfe3bf" opacity="0.85"/>
<polygon points="69.7,230.3 67.9,232.2 65.2,233.1 64.5,230.3 65.7,227.6 67.9,228.8" fill="#cfe3bf" opacity="0.85"/>
<polygon points="99.0,196.0 98.0,197.8 96.0,197.8 95.5,196.0 96.2,194.4 97.7,194.4" fill="#cfe3bf" opacity="0.85"/>
<polygon points="10.6,270.6 9.7,272.8 7.5,271.8 5.7,270.6 7.2,269.0 9.4,268.8" fill="#cfe3bf" opacity="0.85"/>
<polygon points="65.3,256.5 63.9,260.2 61.4,259.1 59.1,256.5 60.5,252.9 64.2,253.7" fill="#cfe3bf" opacity="0.85"/>
<polygon points="88.0,209.4 86.8,213.4 83.3,213.1 82.1,209.4 83.5,205.4 86.1,206.8" fill="#cfe3bf" opacity="0.85"/>
<polygon points="56.5,244.3 56.0,246.6 52.6,248.2 51.6,244.3 52.5,240.4 55.5,241.3" fill="#cfe3bf" opacity="0.85"/>
<polygon points="63.4,276.0 63.1,276.9 61.5,277.4 61.1,276.0 61.7,274.2 62.7,274.9" fill="#cfe3bf" opacity="0.85"/>
<polygon points="73.5,160.3 72.3,162.8 69.3,163.1 66.5,160.3 68.6,157.3 72.7,157.6" fill="#cfe3bf" opacity="0.85"/>
<polygon points="66.9,287.2 65.3,290.2 61.0,291.4 59.2,287.2 60.8,284.8 64.6,282.4" fill="#cfe3bf" opacity="0.85"/>
<polygon points="29.8,261.2 29.2,262.8 27.6,262.2 27.5,261.2 27.7,259.9 29.1,260.4" fill="#cfe3bf" opacity="0.85"/>
<polygon points="81.8,239.9 80.5,242.3 77.6,242.3 76.6,239.9 77.5,236.5 80.3,236.8" fill="#cfe3bf" opacity="0.85"/>
<polygon points="76.7,160.5 75.0,161.7 73.2,162.0 73.1,160.5 73.4,159.0 75.0,158.5" fill="#cfe3bf" opacity="0.85"/>
<polygon points="82.1,167.9 81.4,169.7 78.7,170.6 77.9,167.9 78.9,165.8 80.9,165.9" fill="#cfe3bf" opacity="0.85"/>
<polygon points="40.8,139.4 37.4,143.7 34.1,144.1 31.3,139.4 33.5,135.6 37.8,135.0" fill="#cfe3bf" opacity="0.85"/>
<polygon points="39.6,145.1 38.5,146.0 37.0,146.3 35.9,145.1 37.0,144.0 39.0,143.6" fill="#cfe3bf" opacity="0.85"/>
<polygon points="99.6,278.9 98.4,280.4 96.5,281.1 95.2,278.9 96.6,276.9 98.8,276.6" fill="#cfe3bf" opacity="0.85"/>
<polygon points="101.6,233.7 98.1,237.2 93.6,236.7 92.3,233.7 93.8,230.3 97.3,228.7" fill="#cfe3bf" opacity="0.85"/>
<polygon points="40.9,204.0 39.9,206.4 36.5,206.0 35.7,204.0 36.5,202.4 39.2,201.3" fill="#cfe3bf" opacity="0.85"/>
<polygon points="30.0,131.5 28.5,133.5 26.3,133.2 24.7,131.5 26.4,128.4 29.1,129.4" fill="#cfe3bf" opacity="0.85"/>
<polygon points="62.4,137.0 61.4,138.3 60.0,137.8 59.3,137.0 60.0,135.4 61.8,135.5" fill="#cfe3bf" opacity="0.85"/>
<polygon points="12.8,235.0 11.6,237.7 8.5,238.8 7.4,235.0 8.8,231.8 11.6,232.4" fill="#cfe3bf" opacity="0.85"/>
<polygon points="56.9,143.3 56.3,145.4 53.7,145.4 53.3,143.3 54.2,140.9 56.0,140.8" fill="#cfe3bf" opacity="0.85"/>
<polygon points="41.8,187.4 39.0,190.2 35.8,191.4 32.6,187.4 35.9,183.5 39.0,183.7" fill="#cfe3bf" opacity="0.85"/>
<polygon points="50.7,134.1 49.4,137.1 46.7,136.8 43.6,134.1 46.5,131.8 49.2,130.7" fill="#cfe3bf" opacity="0.85"/>
<polygon points="29.6,251.7 28.4,254.5 23.7,255.4 23.1,251.7 24.7,248.1 28.3,248.2" fill="#cfe3bf" opacity="0.85"/>
<polygon points="82.2,235.3 81.4,238.3 78.4,238.6 77.8,235.3 78.4,233.8 81.6,233.6" fill="#cfe3bf" opacity="0.85"/>
<polygon points="12.1,197.5 11.0,200.9 7.8,200.0 6.8,197.5 6.6,195.0 11.4,193.9" fill="#cfe3bf" opacity="0.85"/>
<polygon points="100.3,260.6 99.8,262.4 98.4,262.4 97.4,260.6 98.0,259.4 99.7,259.7" fill="#cfe3bf" opacity="0.85"/>
<polygon points="111.6,272.9 109.3,275.5 105.6,277.1 103.0,272.9 106.2,270.3 109.1,269.7" fill="#cfe3bf" opacity="0.85"/>
<polygon points="106.8,228.6 105.0,232.6 101.4,231.9 99.8,228.6 102.5,226.7 104.7,226.4" fill="#cfe3bf" opacity="0.85"/>
<polygon points="114.3,221.0 113.5,222.4 111.9,222.4 111.1,221.0 112.0,219.6 114.1,219.4" fill="#cfe3bf" opacity="0.85"/>
<polygon points="74.7,169.9 74.7,172.6 70.3,172.4 69.7,169.9 70.5,167.7 74.3,166.8" fill="#cfe3bf" opacity="0.85"/>
<polygon points="45.4,252.7 43.9,257.2 39.1,256.8 37.4,252.7 39.0,247.9 43.2,250.1" fill="#cfe3bf" opacity="0.85"/>
<polygon points="104.4,222.5 101.4,227.0 97.3,225.8 96.5,222.5 97.9,219.5 101.3,218.7" fill="#cfe3bf" opacity="0.85"/>
<polygon points="112.7,218.6 112.3,222.4 108.8,222.1 106.7,218.6 108.7,214.7 112.7,215.4" fill="#cfe3bf" opacity="0.85"/>
<polygon points="61.9,243.5 59.3,246.6 56.6,247.1 54.3,243.5 56.7,240.1 59.6,240.6" fill="#cfe3bf" opacity="0.85"/>
<polygon points="50.5,162.6 47.5,164.6 45.5,165.9 42.7,162.6 45.1,160.3 47.6,160.4" fill="#cfe3bf" opacity="0.85"/>
<polygon points="42.5,188.1 40.7,190.8 38.5,189.9 36.5,188.1 38.7,185.1 40.8,186.0" fill="#cfe3bf" opacity="0.85"/>
<polygon points="92.0,275.9 90.5,278.0 87.6,277.3 87.0,275.9 87.8,273.3 90.6,273.9" fill="#cfe3bf" opacity="0.85"/>
<polygon points="90.8,222.3 88.8,224.5 84.7,225.4 83.9,222.3 84.3,219.0 88.4,219.3" fill="#cfe3bf" opacity="0.85"/>
<polygon points="100.5,230.8 98.9,233.0 96.4,232.4 94.7,230.8 96.8,228.5 98.6,229.5" fill="#cfe3bf" opacity="0.85"/>
<polygon points="103.5,159.5 102.9,162.5 99.6,162.6 98.3,159.5 99.6,157.5 102.7,156.9" fill="#cfe3bf" opacity="0.85"/>
<polygon points="43.8,219.3 43.2,220.6 41.2,220.6 40.9,219.3 41.6,217.4 43.2,218.2" fill="#cfe3bf" opacity="0.85"/>
<polygon points="83.2,294.5 82.2,297.4 79.8,296.5 77.6,294.5 79.4,292.3 81.4,293.1" fill="#cfe3bf" opacity="0.85"/>
<polygon points="106.2,189.3 105.0,191.0 101.6,190.9 100.2,189.3 101.7,187.0 105.0,186.4" fill="#cfe3bf" opacity="0.85"/>
<polygon points="108.0,214.8 106.0,216.3 103.6,217.1 103.6,214.8 103.8,213.3 106.9,213.1" fill="#cfe3bf" opacity="0.85"/>
<polygon points="61.0,244.6 60.0,248.1 56.4,248.1 54.6,244.6 57.0,241.1 60.3,242.3" fill="#cfe3bf" opacity="0.85"/>
<polygon points="91.9,181.0 91.2,182.7 89.4,182.7 89.0,181.0 89.8,179.6 90.9,179.7" fill="#cfe3bf" opacity="0.85"/>
<polygon points="106.8,262.3 103.7,266.3 98.8,265.9 96.0,262.3 99.0,259.1 105.1,259.3" fill="#cfe3bf" opacity="0.85"/>
<polygon points="13.9,220.3 11.6,223.0 7.5,223.2 6.1,220.3 7.7,216.7 11.4,217.2" fill="#cfe3bf" opacity="0.85"/>
<polygon points="72.9,177.9 72.9,181.7 68.0,182.7 67.2,177.9 68.2,173.7 72.4,174.4" fill="#cfe3bf" opacity="0.85"/>
<polygon points="52.7,200.5 51.2,205.3 47.9,205.1 46.0,200.5 47.5,195.5 51.8,196.7" fill="#cfe3bf" opacity="0.85"/>
<polygon points="61.7,163.8 59.5,168.4 54.8,168.0 51.6,163.8 54.8,159.1 59.5,161.0" fill="#cfe3bf" opacity="0.85"/>
<polygon points="52.2,193.2 49.9,195.6 47.5,195.8 45.4,193.2 47.5,190.2 49.7,189.9" fill="#cfe3bf" opacity="0.85"/>
<polygon points="72.5,159.7 71.6,161.0 69.9,160.7 69.0,159.7 69.9,158.0 71.5,158.7" fill="#cfe3bf" opacity="0.85"/>
<polygon points="33.0,191.4 30.1,194.6 25.8,194.5 22.3,191.4 26.1,187.4 29.5,188.8" fill="#cfe3bf" opacity="0.85"/>
<polygon points="53.4,264.7 52.6,266.6 49.8,267.0 49.4,264.7 49.5,262.9 52.7,263.1" fill="#cfe3bf" opacity="0.85"/>
<polygon points="58.5,193.9 57.8,198.0 54.4,197.9 52.5,193.9 54.9,190.0 57.7,191.5" fill="#cfe3bf" opacity="0.85"/>
<polygon points="66.8,193.2 62.5,196.5 58.3,196.7 56.8,193.2 58.6,189.7 62.2,189.6" fill="#cfe3bf" opacity="0.85"/>
<polygon points="114.1,266.5 110.7,268.5 107.9,269.6 104.7,266.5 107.5,262.8 110.9,262.9" fill="#cfe3bf" opacity="0.85"/>
<polygon points="103.3,136.3 101.1,139.8 98.6,138.4 96.4,136.3 98.1,133.8 102.2,133.4" fill="#cfe3bf" opacity="0.85"/>
<polygon points="60.5,182.7 58.9,187.5 55.2,186.7 53.7,182.7 55.5,178.1 59.7,177.8" fill="#cfe3bf" opacity="0.85"/>
<polygon points="116.2,260.3 115.0,262.6 113.0,261.4 111.3,260.3 112.6,258.2 115.0,258.5" fill="#cfe3bf" opacity="0.85"/>
<polygon points="100.5,279.5 98.7,283.9 95.0,282.9 94.2,279.5 94.2,276.1 99.2,276.1" fill="#cfe3bf" opacity="0.85"/>
<polygon points="85.1,211.6 84.2,213.8 82.8,213.3 81.0,211.6 82.8,210.4 84.6,210.1" fill="#cfe3bf" opacity="0.85"/>
<polygon points="13.6,142.0 13.7,144.5 9.0,144.0 8.4,142.0 9.1,138.7 13.4,138.1" fill="#cfe3bf" opacity="0.85"/>
<polygon points="85.0,138.9 84.4,141.3 81.2,142.3 79.9,138.9 81.2,135.7 84.2,136.4" fill="#cfe3bf" opacity="0.85"/>
<polygon points="113.4,292.2 111.9,295.3 106.6,295.8 103.4,292.2 107.0,287.4 111.6,287.0" fill="#cfe3bf" opacity="0.85"/>
<polygon points="17.4,143.0 15.5,145.1 11.9,145.6 9.2,143.0 11.4,140.7 15.7,140.5" fill="#cfe3bf" opacity="0.85"/>
<polygon points="116.6,146.2 114.4,148.4 111.3,148.8 110.0,146.2 110.4,142.1 114.0,143.1" fill="#cfe3bf" opacity="0.85"/>
<polygon points="81.5,175.2 80.4,177.7 78.4,177.0 77.2,175.2 78.4,173.2 80.8,172.8" fill="#cfe3bf" opacity="0.85"/>
<polygon points="116.1,175.3 115.0,177.9 113.0,176.7 111.7,175.3 113.2,173.5 115.5,172.4" fill="#cfe3bf" opacity="0.85"/>
<polygon points="70.8,165.0 70.2,166.3 68.8,166.0 67.4,165.0 68.6,163.3 70.3,163.4" fill="#cfe3bf" opacity="0.85"/>
<polygon points="55.6,236.0 53.0,239.2 48.1,240.7 47.3,236.0 49.4,233.0 52.4,233.1" fill="#cfe3bf" opacity="0.85"/>
<polygon points="21.8,175.5 19.7,177.7 18.2,177.5 17.4,175.5 18.4,173.2 19.8,173.8" fill="#cfe3bf" opacity="0.85"/>
<polygon points="33.5,232.7 31.6,235.9 28.8,235.8 28.4,232.7 29.0,229.6 31.7,230.8" fill="#cfe3bf" opacity="0.85"/>
<polygon points="92.2,149.3 89.5,152.7 87.2,152.6 85.3,149.3 86.4,146.8 89.7,145.7" fill="#cfe3bf" opacity="0.85"/>
<polygon points="117.0,178.0 116.2,181.2 111.6,181.5 108.5,178.0 111.5,173.4 115.8,175.2" fill="#cfe3bf" opacity="0.85"/>
<polygon points="58.6,271.5 57.6,274.1 55.8,273.0 54.1,271.5 55.6,269.9 57.5,270.3" fill="#cfe3bf" opacity="0.85"/>
<polygon points="83.4,249.6 82.4,252.0 79.4,251.3 77.7,249.6 79.9,247.2 82.1,247.6" fill="#cfe3bf" opacity="0.85"/>
<polygon points="98.8,261.2 96.2,263.2 92.4,263.2 91.4,261.2 92.9,257.6 95.8,258.2" fill="#cfe3bf" opacity="0.85"/>
<polygon points="51.3,237.1 48.3,240.9 44.7,242.0 42.4,237.1 44.6,233.2 49.1,234.4" fill="#cfe3bf" opacity="0.85"/>
<polygon points="58.9,172.0 58.3,173.9 56.5,173.8 55.5,172.0 56.4,170.2 58.4,170.7" fill="#cfe3bf" opacity="0.85"/>
<polygon points="33.8,271.4 33.1,272.7 31.8,272.9 30.6,271.4 31.7,269.8 33.2,269.7" fill="#cfe3bf" opacity="0.85"/>
<polygon points="33.7,208.3 32.4,210.3 30.4,210.5 29.8,208.3 30.0,206.9 32.3,206.7" fill="#cfe3bf" opacity="0.85"/>
<polygon points="57.0,285.9 54.8,288.4 52.5,289.3 50.8,285.9 52.3,282.6 55.1,284.3" fill="#cfe3bf" opacity="0.85"/>
<polygon points="88.1,234.6 87.8,236.7 85.5,236.5 84.6,234.6 85.7,232.6 87.1,232.8" fill="#cfe3bf" opacity="0.85"/>
<polygon points="15.2,144.9 12.8,148.9 8.1,148.6 7.6,144.9 7.8,141.8 12.8,142.1" fill="#cfe3bf" opacity="0.85"/>
<polygon points="37.2,157.1 34.1,161.2 31.1,162.0 29.1,157.1 29.7,153.8 34.9,152.6" fill="#cfe3bf" opacity="0.85"/>
<polygon points="56.0,192.1 53.9,196.1 49.5,195.6 47.3,192.1 50.5,188.6 55.3,188.8" fill="#cfe3bf" opacity="0.85"/>
<polygon points="8.8,215.7 6.6,219.0 3.8,218.1 2.6,215.7 3.9,212.4 6.7,212.8" fill="#cfe3bf" opacity="0.85"/>
<polygon points="31.5,165.1 28.7,169.4 24.6,169.3 23.7,165.1 25.2,162.6 27.9,163.1" fill="#cfe3bf" opacity="0.85"/>
<polygon points="90.3,181.2 88.9,182.9 85.4,184.1 84.6,181.2 85.6,178.1 88.3,179.0" fill="#cfe3bf" opacity="0.85"/>
<polygon points="38.9,197.8 36.5,200.2 33.2,199.7 31.4,197.8 33.0,194.2 36.4,195.5" fill="#cfe3bf" opacity="0.85"/>
<polygon points="111.3,190.5 110.1,191.9 108.5,192.3 107.4,190.5 108.5,188.5 110.0,189.1" fill="#cfe3bf" opacity="0.85"/>
<polygon points="16.7,232.9 15.4,237.2 10.9,236.1 9.4,232.9 11.4,230.2 15.7,228.5" fill="#cfe3bf" opacity="0.85"/>
<polygon points="77.2,265.7 75.9,266.8 74.3,267.5 73.3,265.7 74.4,264.4 75.9,264.7" fill="#cfe3bf" opacity="0.85"/>
<polygon points="69.1,167.0 67.6,169.4 65.2,169.6 63.4,167.0 65.0,165.5 67.8,164.5" fill="#cfe3bf" opacity="0.85"/>
<polygon points="107.6,180.8 105.6,184.8 102.1,183.5 99.9,180.8 101.0,178.3 105.1,178.5" fill="#cfe3bf" opacity="0.85"/>
<polygon points="12.0,157.5 8.6,161.8 3.9,162.4 2.9,157.5 4.5,152.3 8.9,153.7" fill="#cfe3bf" opacity="0.85"/>
<polygon points="15.3,269.3 12.4,272.7 7.7,271.8 5.2,269.3 8.3,264.8 11.5,266.2" fill="#cfe3bf" opacity="0.85"/>
<polygon points="98.7,190.3 95.8,193.8 91.1,194.8 89.2,190.3 90.8,187.4 96.0,185.6" fill="#cfe3bf" opacity="0.85"/>
<polygon points="55.0,128.8 54.0,130.9 51.0,132.1 49.6,128.8 51.6,126.3 54.1,125.9" fill="#cfe3bf" opacity="0.85"/>
<polygon points="79.6,168.3 77.9,171.2 76.0,170.6 74.7,168.3 75.3,165.3 78.8,165.6" fill="#cfe3bf" opacity="0.85"/>
<polygon points="35.1,121.7 33.5,123.2 31.8,123.0 31.0,121.7 31.7,120.6 33.3,120.6" fill="#cfe3bf" opacity="0.85"/>
<polygon points="57.9,233.1 56.5,237.0 51.6,235.9 48.9,233.1 52.0,228.9 55.6,230.5" fill="#cfe3bf" opacity="0.85"/>
<polygon points="40.2,215.7 39.6,217.7 37.1,218.4 34.5,215.7 36.5,212.6 39.6,214.0" fill="#cfe3bf" opacity="0.85"/>
<polygon points="56.7,189.2 56.1,191.6 52.4,191.8 50.4,189.2 52.0,186.4 55.3,187.2" fill="#cfe3bf" opacity="0.85"/>
<polygon points="83.3,136.4 81.2,140.7 77.3,139.6 75.5,136.4 77.4,132.4 81.2,133.5" fill="#cfe3bf" opacity="0.85"/>
<polygon points="15.4,199.5 14.7,201.8 12.8,201.0 11.8,199.5 13.1,197.4 14.8,197.1" fill="#cfe3bf" opacity="0.85"/>
<polygon points="76.2,162.7 74.5,165.7 71.1,168.0 69.4,162.7 71.1,159.2 74.5,159.0" fill="#cfe3bf" opacity="0.85"/>
<polygon points="36.1,247.1 35.0,252.6 30.8,251.6 28.1,247.1 29.7,242.4 34.6,242.0" fill="#cfe3bf" opacity="0.85"/>
<polygon points="68.4,160.5 68.1,161.8 65.7,161.7 65.4,160.5 65.7,158.8 67.8,158.7" fill="#cfe3bf" opacity="0.85"/>
<polygon points="46.5,169.8 45.1,173.4 41.9,172.7 38.5,169.8 41.2,165.6 45.7,167.0" fill="#cfe3bf" opacity="0.85"/>
<polygon points="53.7,177.1 51.0,180.4 45.7,181.2 43.2,177.1 46.1,173.1 50.8,172.5" fill="#cfe3bf" opacity="0.85"/>
<polygon points="28.8,140.9 28.4,143.7 24.2,144.0 21.9,140.9 24.9,137.0 27.6,138.8" fill="#cfe3bf" opacity="0.85"/>
<polygon points="93.0,234.1 92.3,238.3 88.2,238.6 85.7,234.1 87.7,229.2 91.5,230.5" fill="#cfe3bf" opacity="0.85"/>
<polygon points="106.0,244.5 105.1,247.2 102.2,246.3 100.3,244.5 102.4,242.8 105.0,241.6" fill="#cfe3bf" opacity="0.85"/>
<polygon points="35.6,176.0 32.9,179.8 29.7,178.2 26.9,176.0 28.8,173.2 32.8,172.0" fill="#cfe3bf" opacity="0.85"/>
<polygon points="4.9,289.8 4.1,291.5 1.9,292.0 1.3,289.8 2.3,288.2 4.2,288.4" fill="#cfe3bf" opacity="0.85"/>
<polygon points="102.5,147.2 101.5,148.5 100.4,148.1 99.4,147.2 100.3,146.0 101.9,145.8" fill="#cfe3bf" opacity="0.85"/>
<polygon points="67.8,172.9 67.3,176.1 64.0,175.9 62.9,172.9 63.4,170.9 66.4,169.4" fill="#cfe3bf" opacity="0.85"/>
<polygon points="71.0,257.4 67.5,260.7 63.1,261.7 62.4,257.4 63.2,252.7 67.2,254.2" fill="#cfe3bf" opacity="0.85"/>
<polygon points="14.2,195.3 13.3,197.0 12.3,197.0 11.1,195.3 12.2,194.1 13.5,193.9" fill="#cfe3bf" opacity="0.85"/>
<polygon points="17.7,223.2 16.7,226.1 13.6,226.4 12.1,223.2 13.9,220.1 16.4,220.5" fill="#cfe3bf" opacity="0.85"/>
<polygon points="99.9,199.2 97.8,202.1 94.6,202.1 94.1,199.2 95.1,196.3 97.5,196.3" fill="#cfe3bf" opacity="0.85"/>
<polygon points="65.2,278.7 64.8,280.9 62.8,281.0 61.0,278.7 62.3,277.5 64.7,277.4" fill="#cfe3bf" opacity="0.85"/>
<polygon points="94.5,286.7 93.4,288.4 90.9,289.3 89.1,286.7 90.8,285.3 93.1,284.2" fill="#cfe3bf" opacity="0.85"/>
<polygon points="6.7,154.6 6.5,156.8 2.9,158.4 1.2,154.6 3.4,151.7 6.2,151.8" fill="#cfe3bf" opacity="0.85"/>
<polygon points="58.2,131.6 56.6,135.6 53.5,135.4 51.6,131.6 53.5,129.1 56.9,128.9" fill="#cfe3bf" opacity="0.85"/>
<polygon points="35.4,294.7 33.6,299.1 28.6,298.7 25.1,294.7 28.6,291.9 33.2,292.1" fill="#cfe3bf" opacity="0.85"/>
<polygon points="54.0,143.2 51.7,145.9 49.5,144.9 48.1,143.2 49.5,141.3 51.4,141.3" fill="#cfe3bf" opacity="0.85"/>
<polygon points="47.3,223.9 45.9,226.3 43.5,226.7 42.1,223.9 43.6,222.0 46.4,222.3" fill="#cfe3bf" opacity="0.85"/>
<polygon points="45.6,142.0 42.6,145.5 40.5,144.1 38.5,142.0 39.7,139.0 43.7,139.0" fill="#cfe3bf" opacity="0.85"/>
<polygon points="52.1,160.3 50.3,162.5 48.0,162.1 46.5,160.3 48.3,158.7 51.0,158.9" fill="#cfe3bf" opacity="0.85"/>
<polygon points="37.8,227.2 36.9,230.0 33.9,229.2 31.8,227.2 33.5,224.8 37.3,225.0" fill="#cfe3bf" opacity="0.85"/>
<polygon points="77.4,290.0 75.2,292.3 73.3,291.5 71.4,290.0 72.8,288.5 75.5,287.8" fill="#cfe3bf" opacity="0.85"/>
<polygon points="42.2,142.0 41.0,144.1 38.4,144.6 37.5,142.0 38.0,139.2 41.3,138.9" fill="#cfe3bf" opacity="0.85"/>
<polygon points="59.7,266.6 58.1,270.2 54.5,270.7 52.5,266.6 54.0,262.4 58.8,262.1" fill="#cfe3bf" opacity="0.85"/>
<polygon points="80.2,171.1 78.7,173.5 75.0,174.9 74.1,171.1 74.5,167.4 78.2,167.9" fill="#cfe3bf" opacity="0.85"/>
<polygon points="71.3,135.2 67.4,139.2 62.9,140.1 60.0,135.2 63.1,131.8 67.3,131.3" fill="#cfe3bf" opacity="0.85"/>
<polygon points="11.8,173.1 10.6,175.6 8.1,175.1 6.7,173.1 7.7,169.9 10.3,169.9" fill="#cfe3bf" opacity="0.85"/>
<polygon points="46.3,198.8 45.1,201.2 40.5,201.8 38.4,198.8 40.1,195.8 45.1,194.1" fill="#cfe3bf" opacity="0.85"/>
<polygon points="92.2,226.2 91.4,229.2 87.1,229.4 84.2,226.2 87.8,222.7 90.9,223.6" fill="#cfe3bf" opacity="0.85"/>
<polygon points="80.0,165.9 78.8,167.7 77.0,168.0 75.6,165.9 76.9,164.6 78.7,164.4" fill="#cfe3bf" opacity="0.85"/>
<polygon points="73.9,144.7 72.5,146.6 70.7,146.9 68.8,144.7 70.5,143.0 72.8,143.0" fill="#cfe3bf" opacity="0.85"/>
<polygon points="102.2,209.2 100.9,211.8 98.8,211.1 98.3,209.2 99.2,206.9 101.4,207.3" fill="#cfe3bf" opacity="0.85"/>
<polygon points="45.5,193.6 44.4,195.7 43.1,195.1 42.1,193.6 43.0,191.8 44.4,191.4" fill="#cfe3bf" opacity="0.85"/>
<polygon points="108.6,272.4 107.9,276.4 104.1,276.4 102.7,272.4 104.5,268.0 107.5,270.1" fill="#cfe3bf" opacity="0.85"/>
<polygon points="22.9,286.8 21.5,289.1 16.6,290.2 15.3,286.8 16.7,282.3 21.0,282.3" fill="#cfe3bf" opacity="0.85"/>
<polygon points="23.5,176.9 22.7,178.5 19.7,178.8 18.8,176.9 20.0,174.9 23.1,174.9" fill="#cfe3bf" opacity="0.85"/>
<polygon points="111.4,125.9 110.0,127.6 108.5,127.7 107.8,125.9 108.3,124.0 110.3,124.1" fill="#cfe3bf" opacity="0.85"/>
<polygon points="20.8,200.5 18.7,203.3 15.0,204.6 13.7,200.5 14.6,195.8 18.6,196.8" fill="#cfe3bf" opacity="0.85"/>
<polygon points="75.6,149.4 75.1,152.9 71.2,152.6 71.3,149.4 71.9,147.0 74.7,146.4" fill="#cfe3bf" opacity="0.85"/>
<polygon points="2.5,223.5 1.5,225.2 -0.5,225.3 -0.7,223.5 -0.2,222.1 1.4,222.6" fill="#cfe3bf" opacity="0.85"/>
<polygon points="43.4,125.0 40.5,129.8 35.7,129.2 33.8,125.0 36.2,122.4 40.0,122.0" fill="#cfe3bf" opacity="0.85"/>
<polygon points="52.6,185.3 50.4,187.9 48.1,186.7 46.7,185.3 47.8,183.5 50.3,183.2" fill="#cfe3bf" opacity="0.85"/>
<polygon points="74.1,142.4 73.2,144.1 71.3,143.4 70.8,142.4 71.2,140.9 73.1,141.1" fill="#cfe3bf" opacity="0.85"/>
<polygon points="107.8,273.1 105.9,275.2 101.7,275.4 100.7,273.1 101.7,269.7 106.0,268.7" fill="#cfe3bf" opacity="0.85"/>
<polygon points="104.3,232.7 103.7,235.9 100.7,236.0 100.1,232.7 100.2,229.7 103.1,230.5" fill="#cfe3bf" opacity="0.85"/>
<polygon points="29.4,230.5 26.7,233.4 22.9,234.3 21.4,230.5 23.7,228.4 26.8,227.8" fill="#cfe3bf" opacity="0.85"/>
<polygon points="3.9,181.9 3.1,184.0 0.0,184.1 -0.5,181.9 0.2,180.3 3.1,179.0" fill="#cfe3bf" opacity="0.85"/>
<polygon points="86.5,240.4 85.7,243.2 81.9,242.8 79.0,240.4 81.9,237.9 86.7,237.5" fill="#cfe3bf" opacity="0.85"/>
<polygon points="65.1,123.5 64.4,125.8 62.1,125.5 61.1,123.5 61.4,121.9 64.3,121.5" fill="#cfe3bf" opacity="0.85"/>
<polygon points="74.1,291.1 72.8,292.5 70.6,292.7 70.5,291.1 71.1,289.0 72.6,289.4" fill="#cfe3bf" opacity="0.85"/>
<polygon points="64.4,167.6 61.7,171.4 58.7,171.3 55.5,167.6 58.8,165.2 61.2,164.7" fill="#cfe3bf" opacity="0.85"/>
<polygon points="26.7,283.6 25.7,287.7 21.2,287.2 18.8,283.6 21.5,280.4 25.6,280.5" fill="#cfe3bf" opacity="0.85"/>
<polygon points="76.7,216.4 74.0,219.5 71.1,220.5 67.4,216.4 70.5,213.5 74.4,212.3" fill="#cfe3bf" opacity="0.85"/>
<polygon points="58.6,222.8 58.3,224.0 56.4,224.0 56.1,222.8 56.3,221.4 58.1,221.3" fill="#cfe3bf" opacity="0.85"/>
<polygon points="73.8,228.0 71.0,232.2 67.3,231.3 66.5,228.0 67.1,223.8 70.3,225.4" fill="#cfe3bf" opacity="0.85"/>
<polygon points="90.2,257.5 89.2,261.4 85.0,261.0 83.6,257.5 86.0,253.7 89.7,254.0" fill="#cfe3bf" opacity="0.85"/>
<polygon points="77.0,250.1 76.5,252.6 72.4,252.3 71.3,250.1 72.5,246.3 76.7,246.4" fill="#cfe3bf" opacity="0.85"/>
<polygon points="38.3,176.6 37.4,178.0 35.5,178.4 34.9,176.6 35.5,175.4 37.5,175.5" fill="#cfe3bf" opacity="0.85"/>
<polygon points="37.9,197.4 36.4,200.7 33.3,199.5 32.5,197.4 33.5,194.6 37.1,195.5" fill="#cfe3bf" opacity="0.85"/>
<polygon points="23.5,293.3 21.7,295.9 19.3,295.1 19.1,293.3 19.8,290.8 21.8,290.4" fill="#cfe3bf" opacity="0.85"/>
<polygon points="18.2,178.5 16.6,180.4 14.4,180.2 13.3,178.5 14.9,176.1 17.1,176.6" fill="#cfe3bf" opacity="0.85"/>
<polygon points="28.4,140.3 25.9,142.7 22.3,142.9 18.4,140.3 21.9,136.3 26.2,135.3" fill="#cfe3bf" opacity="0.85"/>
<polygon points="117.5,143.3 115.3,145.9 109.8,148.3 109.4,143.3 109.5,138.1 115.0,138.0" fill="#cfe3bf" opacity="0.85"/>
<polygon points="12.4,192.1 11.1,196.0 6.7,195.8 4.3,192.1 7.5,187.2 12.4,189.1" fill="#cfe3bf" opacity="0.85"/>
<polygon points="21.8,166.9 20.5,170.7 15.8,170.9 13.0,166.9 15.8,163.4 21.0,163.4" fill="#cfe3bf" opacity="0.85"/>
<polygon points="51.3,151.4 49.8,154.1 44.7,156.1 42.9,151.4 44.8,148.3 50.2,146.7" fill="#cfe3bf" opacity="0.85"/>
<polygon points="14.4,179.8 10.8,185.1 7.1,182.8 3.2,179.8 6.0,176.0 11.0,175.3" fill="#cfe3bf" opacity="0.85"/>
<polygon points="89.1,139.9 85.7,142.9 83.2,143.9 81.7,139.9 82.9,136.1 85.7,137.0" fill="#cfe3bf" opacity="0.85"/>
<polygon points="71.7,192.3 70.2,195.0 67.2,194.6 66.5,192.3 67.7,190.6 69.9,190.9" fill="#cfe3bf" opacity="0.85"/>
<polygon points="5.4,237.0 1.7,239.7 -2.4,241.8 -4.4,237.0 -3.0,232.2 1.8,232.0" fill="#cfe3bf" opacity="0.85"/>
<polygon points="108.3,172.3 107.5,176.1 104.3,174.6 102.4,172.3 105.1,169.6 108.3,168.6" fill="#cfe3bf" opacity="0.85"/>
<polygon points="37.2,169.7 36.0,171.7 33.3,172.3 32.6,169.7 33.4,167.7 35.5,167.1" fill="#cfe3bf" opacity="0.85"/>
<polygon points="76.1,171.4 74.8,175.7 69.2,174.0 69.1,171.4 70.6,167.8 74.6,166.7" fill="#cfe3bf" opacity="0.85"/>
<polygon points="101.8,223.8 100.0,226.3 97.6,226.8 96.1,223.8 97.3,220.5 100.0,221.6" fill="#cfe3bf" opacity="0.85"/>
<polygon points="53.9,213.8 52.0,218.9 48.8,219.1 46.8,213.8 48.3,208.6 52.6,210.2" fill="#cfe3bf" opacity="0.85"/>
<polygon points="5.1,189.8 3.0,192.3 -0.4,192.6 -0.9,189.8 -0.5,187.5 2.3,187.9" fill="#cfe3bf" opacity="0.85"/>
<polygon points="50.7,287.1 50.0,290.4 47.2,289.6 46.3,287.1 46.8,285.2 49.3,284.0" fill="#cfe3bf" opacity="0.85"/>
<polygon points="26.1,252.6 25.8,253.7 23.9,254.4 22.8,252.6 23.8,251.5 25.7,251.1" fill="#cfe3bf" opacity="0.85"/>
<polygon points="66.0,153.3 62.6,156.1 57.5,156.1 56.3,153.3 58.3,149.0 62.4,149.1" fill="#cfe3bf" opacity="0.85"/>
<polygon points="81.2,160.7 80.1,164.2 75.5,164.0 73.6,160.7 73.9,156.2 78.7,157.0" fill="#cfe3bf" opacity="0.85"/>
<polygon points="44.3,140.2 43.9,142.3 41.4,142.3 40.6,140.2 41.7,138.5 44.2,138.8" fill="#cfe3bf" opacity="0.85"/>
<polygon points="69.1,148.3 68.1,151.4 65.4,150.2 63.3,148.3 64.9,145.3 67.7,145.4" fill="#cfe3bf" opacity="0.85"/>
<polygon points="5.7,279.0 3.3,281.4 0.8,281.2 -2.3,279.0 0.5,276.6 4.3,276.9" fill="#cfe3bf" opacity="0.85"/>
<polygon points="114.1,149.0 112.7,151.4 111.2,150.6 110.5,149.0 110.9,146.9 112.6,147.1" fill="#cfe3bf" opacity="0.85"/>
<polygon points="45.1,290.8 41.6,295.0 37.1,296.0 34.7,290.8 37.0,286.5 41.8,286.2" fill="#cfe3bf" opacity="0.85"/>
<polygon points="30.5,275.7 29.0,277.1 26.8,277.6 24.9,275.7 26.6,273.2 28.8,273.7" fill="#cfe3bf" opacity="0.85"/>
<polygon points="65.9,195.5 65.3,197.3 62.1,197.5 61.5,195.5 62.4,193.8 64.8,193.0" fill="#cfe3bf" opacity="0.85"/>
<polygon points="112.8,130.6 110.2,134.6 106.0,132.8 104.9,130.6 106.1,127.4 110.0,127.5" fill="#cfe3bf" opacity="0.85"/>
<polygon points="34.7,170.2 32.9,173.7 28.3,174.1 25.8,170.2 28.6,166.5 33.0,167.0" fill="#cfe3bf" opacity="0.85"/>
<polygon points="53.6,254.7 51.8,258.3 48.5,257.0 45.1,254.7 47.6,252.5 52.1,251.3" fill="#cfe3bf" opacity="0.85"/>
<polygon points="28.5,241.1 27.0,243.5 24.0,244.6 23.6,241.1 24.9,238.6 27.9,239.0" fill="#cfe3bf" opacity="0.85"/>
<polygon points="42.7,190.7 41.4,193.3 38.2,192.6 37.9,190.7 38.2,187.6 41.6,188.9" fill="#cfe3bf" opacity="0.85"/>
<polygon points="18.8,280.8 17.3,284.4 14.2,282.9 12.3,280.8 14.7,278.8 17.2,278.0" fill="#cfe3bf" opacity="0.85"/>
<polygon points="52.1,280.3 51.0,282.8 47.8,282.8 46.3,280.3 48.4,277.9 50.9,277.8" fill="#cfe3bf" opacity="0.85"/>
<polygon points="53.3,124.5 51.0,127.4 47.8,126.8 45.0,124.5 47.6,122.0 50.7,120.5" fill="#cfe3bf" opacity="0.85"/>
<polygon points="10.3,248.6 9.3,251.1 5.9,252.7 2.5,248.6 5.8,245.1 9.3,245.2" fill="#cfe3bf" opacity="0.85"/>
<polygon points="38.0,206.9 36.5,209.3 33.7,209.2 32.1,206.9 33.4,204.2 36.1,203.7" fill="#cfe3bf" opacity="0.85"/>
<polygon points="80.7,267.5 78.3,270.0 75.6,269.9 73.1,267.5 75.2,265.6 78.3,264.6" fill="#cfe3bf" opacity="0.85"/>
<polygon points="62.0,265.1 61.8,269.2 57.3,267.5 56.3,265.1 57.3,261.0 61.1,261.2" fill="#cfe3bf" opacity="0.85"/>
<polygon points="77.3,185.1 75.6,189.5 71.9,188.3 68.6,185.1 71.4,181.4 75.4,181.9" fill="#cfe3bf" opacity="0.85"/>
<polygon points="27.0,143.3 26.3,144.5 25.0,144.9 23.7,143.3 24.8,142.3 26.4,142.4" fill="#cfe3bf" opacity="0.85"/>
<polygon points="66.2,140.6 64.2,142.0 61.8,143.3 60.0,140.6 62.0,138.5 63.8,138.7" fill="#cfe3bf" opacity="0.85"/>
<polygon points="70.4,166.1 67.1,170.1 63.6,169.6 60.9,166.1 63.0,161.7 67.4,163.6" fill="#cfe3bf" opacity="0.85"/>
<polygon points="90.5,206.4 88.7,209.1 85.1,208.6 84.3,206.4 86.2,204.4 88.8,202.5" fill="#cfe3bf" opacity="0.85"/>
<polygon points="66.1,163.2 65.4,164.9 63.9,164.1 62.7,163.2 64.2,161.5 65.6,162.2" fill="#cfe3bf" opacity="0.85"/>
<polygon points="48.8,194.7 47.7,196.1 45.0,196.7 44.8,194.7 45.0,192.3 47.9,192.7" fill="#cfe3bf" opacity="0.85"/>
<polygon points="11.6,279.2 8.7,281.5 4.3,281.4 3.2,279.2 5.2,276.5 8.8,276.9" fill="#cfe3bf" opacity="0.85"/>
<polygon points="80.3,154.9 78.4,156.6 76.8,156.6 75.2,154.9 76.8,152.8 78.5,153.1" fill="#cfe3bf" opacity="0.85"/>
<polygon points="36.3,285.8 35.7,287.4 34.4,287.3 33.4,285.8 34.1,284.8 35.7,284.7" fill="#cfe3bf" opacity="0.85"/>
<polygon points="9.2,185.4 7.0,190.1 3.3,189.5 -0.7,185.4 2.9,182.1 8.6,179.9" fill="#cfe3bf" opacity="0.85"/>
<polygon points="43.5,283.7 43.1,285.0 41.3,285.1 40.4,283.7 41.4,281.8 43.5,281.9" fill="#cfe3bf" opacity="0.85"/>
<polygon points="12.8,163.3 12.3,164.8 10.6,164.9 8.8,163.3 10.3,161.6 12.1,161.1" fill="#cfe3bf" opacity="0.85"/>
<polygon points="11.2,194.2 10.4,198.0 5.0,199.5 4.7,194.2 6.5,190.7 10.3,190.7" fill="#cfe3bf" opacity="0.85"/>
<polygon points="76.2,124.6 75.5,126.1 74.0,125.5 73.7,124.6 73.9,122.9 75.7,123.4" fill="#cfe3bf" opacity="0.85"/>
<polygon points="89.7,221.2 89.4,222.8 87.8,222.4 87.2,221.2 87.7,219.7 89.3,219.5" fill="#cfe3bf" opacity="0.85"/>
<polygon points="11.7,276.7 10.4,277.9 9.1,278.5 8.3,276.7 8.7,274.4 10.6,275.2" fill="#cfe3bf" opacity="0.85"/>
<polygon points="86.4,258.3 82.3,262.0 78.6,263.1 76.8,258.3 79.5,255.5 82.4,254.8" fill="#cfe3bf" opacity="0.85"/>
<polygon points="18.1,266.6 16.9,267.9 15.2,268.6 14.1,266.6 15.3,265.2 17.3,265.5" fill="#cfe3bf" opacity="0.85"/>
<polygon points="77.4,259.1 76.4,262.2 73.4,261.6 70.6,259.1 72.5,256.1 75.8,255.5" fill="#cfe3bf" opacity="0.85"/>
<polygon points="41.2,232.0 40.1,235.0 37.0,233.7 36.7,232.0 37.4,229.5 40.7,228.4" fill="#cfe3bf" opacity="0.85"/>
<polygon points="17.8,148.4 16.0,151.8 12.4,151.8 11.7,148.4 12.9,145.2 16.4,146.7" fill="#cfe3bf" opacity="0.85"/>
<polygon points="118.9,260.4 116.7,263.2 113.3,263.3 111.4,260.4 113.1,258.1 116.9,256.8" fill="#cfe3bf" opacity="0.85"/>
<polygon points="106.2,236.1 105.9,237.3 104.2,237.0 103.4,236.1 104.7,234.6 106.0,235.3" fill="#cfe3bf" opacity="0.85"/>
<polygon points="82.8,286.6 80.9,290.4 75.5,289.5 74.9,286.6 75.5,283.9 80.1,282.9" fill="#cfe3bf" opacity="0.85"/>
<polygon points="115.8,210.2 114.2,213.3 109.5,213.8 108.0,210.2 111.0,204.7 115.1,204.8" fill="#cfe3bf" opacity="0.85"/>
<polygon points="20.0,227.9 17.8,232.5 13.0,232.1 12.2,227.9 13.0,225.2 17.6,225.4" fill="#cfe3bf" opacity="0.85"/>
<polygon points="88.0,188.2 87.4,189.5 86.0,189.0 85.3,188.2 85.8,187.1 87.2,186.6" fill="#cfe3bf" opacity="0.85"/>
<polygon points="85.1,123.6 83.5,125.5 81.3,125.6 81.3,123.6 81.2,121.6 83.7,121.6" fill="#cfe3bf" opacity="0.85"/>
<polygon points="87.4,126.4 85.9,128.9 82.5,130.1 79.2,126.4 82.1,121.8 86.5,122.3" fill="#cfe3bf" opacity="0.85"/>
<polygon points="73.0,166.9 72.0,170.8 66.3,170.9 65.4,166.9 67.0,163.2 71.2,164.4" fill="#cfe3bf" opacity="0.85"/>
<polygon points="25.3,241.7 24.0,245.2 20.7,244.5 19.9,241.7 21.1,239.9 24.4,238.4" fill="#cfe3bf" opacity="0.85"/>
<polygon points="89.6,258.0 87.7,260.5 85.5,259.6 84.1,258.0 85.2,255.5 88.2,255.6" fill="#cfe3bf" opacity="0.85"/>
<polygon points="111.2,195.2 110.2,197.2 108.2,197.4 106.5,195.2 108.0,192.3 110.5,192.6" fill="#cfe3bf" opacity="0.85"/>
<polygon points="83.9,133.1 82.0,135.3 79.7,135.7 79.4,133.1 79.8,130.3 81.9,130.7" fill="#cfe3bf" opacity="0.85"/>
<polygon points="111.0,263.6 110.1,265.4 107.9,265.5 107.4,263.6 107.5,261.1 109.7,261.4" fill="#cfe3bf" opacity="0.85"/>
<polygon points="106.4,154.5 105.2,157.1 102.7,157.2 100.4,154.5 102.4,152.9 105.2,153.0" fill="#cfe3bf" opacity="0.85"/>
<polygon points="45.9,251.2 44.8,254.5 41.2,255.1 38.4,251.2 40.9,247.6 43.9,248.7" fill="#cfe3bf" opacity="0.85"/>
<polygon points="78.6,196.2 78.5,197.6 75.8,198.1 74.9,196.2 75.5,193.4 78.3,193.6" fill="#cfe3bf" opacity="0.85"/>
<polygon points="63.2,264.4 61.2,269.0 57.3,269.4 53.1,264.4 56.6,261.7 60.7,261.6" fill="#cfe3bf" opacity="0.85"/>
<polygon points="57.8,268.5 56.2,270.1 54.5,269.9 53.9,268.5 54.5,267.4 56.5,266.5" fill="#cfe3bf" opacity="0.85"/>
<polygon points="107.7,143.1 104.7,148.6 99.8,146.3 97.8,143.1 99.9,138.9 104.5,138.9" fill="#cfe3bf" opacity="0.85"/>
<polygon points="106.0,160.8 104.6,164.2 101.9,164.3 101.1,160.8 102.3,157.9 104.5,159.1" fill="#cfe3bf" opacity="0.85"/>
<polygon points="101.7,261.2 98.7,265.8 95.3,264.2 91.7,261.2 95.2,258.3 99.9,258.2" fill="#cfe3bf" opacity="0.85"/>
<polygon points="77.9,283.9 77.3,285.9 75.8,285.9 74.7,283.9 76.0,282.4 77.5,282.0" fill="#cfe3bf" opacity="0.85"/>
<polygon points="33.3,174.2 31.6,175.8 28.9,176.4 27.2,174.2 29.2,171.5 31.1,171.3" fill="#cfe3bf" opacity="0.85"/>
<polygon points="91.1,256.3 90.2,258.2 86.8,259.6 86.0,256.3 86.8,253.1 90.6,254.8" fill="#cfe3bf" opacity="0.85"/>
<polygon points="101.0,268.1 98.2,272.3 93.9,271.0 90.2,268.1 94.1,264.4 97.8,262.7" fill="#cfe3bf" opacity="0.85"/>
<polygon points="78.5,167.1 76.7,169.2 74.5,168.4 73.1,167.1 73.9,165.1 76.5,164.5" fill="#cfe3bf" opacity="0.85"/>
<polygon points="80.1,260.5 77.3,264.0 73.9,264.8 71.8,260.5 73.3,258.2 76.8,256.2" fill="#cfe3bf" opacity="0.85"/>
<polygon points="22.0,224.8 20.8,226.4 18.2,227.7 16.1,224.8 18.1,223.3 20.3,221.6" fill="#cfe3bf" opacity="0.85"/>
<polygon points="115.0,183.3 113.2,187.3 110.3,187.1 108.2,183.3 110.1,181.0 113.4,180.2" fill="#cfe3bf" opacity="0.85"/>
<polygon points="24.1,146.5 22.3,148.4 19.3,148.0 19.0,146.5 19.8,143.5 22.6,144.1" fill="#cfe3bf" opacity="0.85"/>
<polygon points="40.1,187.5 38.0,191.1 33.1,190.2 31.0,187.5 33.2,183.2 38.4,184.9" fill="#cfe3bf" opacity="0.85"/>
<polygon points="85.0,174.2 83.6,175.9 80.3,176.0 77.8,174.2 80.1,171.7 82.9,172.6" fill="#cfe3bf" opacity="0.85"/>
<polygon points="50.2,184.7 48.1,186.5 45.2,188.1 44.7,184.7 45.8,182.4 48.4,181.5" fill="#cfe3bf" opacity="0.85"/>
<polygon points="24.9,169.4 24.7,174.0 20.0,173.3 16.4,169.4 19.9,165.2 24.3,165.1" fill="#cfe3bf" opacity="0.85"/>
<polygon points="24.1,132.2 22.9,134.0 19.7,133.6 19.3,132.2 19.9,129.4 22.4,130.4" fill="#cfe3bf" opacity="0.85"/>
<polygon points="14.8,158.7 14.1,160.3 11.5,160.9 10.6,158.7 11.8,156.0 13.9,155.8" fill="#cfe3bf" opacity="0.85"/>
<polygon points="15.4,272.3 13.8,277.5 9.2,277.0 6.7,272.3 8.5,267.0 13.5,268.5" fill="#cfe3bf" opacity="0.85"/>
<polygon points="67.0,290.3 63.8,293.7 60.3,293.7 59.9,290.3 60.3,287.4 64.2,286.2" fill="#cfe3bf" opacity="0.85"/>
<polygon points="85.7,182.3 85.6,185.2 82.3,185.6 81.4,182.3 82.2,180.8 85.2,179.4" fill="#cfe3bf" opacity="0.85"/>
<polygon points="65.3,171.3 63.2,174.7 58.8,175.8 57.8,171.3 59.1,167.8 63.1,168.5" fill="#cfe3bf" opacity="0.85"/>
<polygon points="104.7,135.0 103.4,136.6 102.1,136.2 101.0,135.0 101.9,133.2 103.6,134.0" fill="#cfe3bf" opacity="0.85"/>
<polygon points="74.2,260.2 71.9,265.1 66.6,265.1 63.4,260.2 66.5,255.9 72.4,255.8" fill="#cfe3bf" opacity="0.85"/>
<polygon points="79.2,250.4 76.9,253.2 74.1,253.3 72.1,250.4 74.8,248.1 77.8,247.3" fill="#cfe3bf" opacity="0.85"/>
<polygon points="114.1,222.4 112.7,225.9 108.3,225.3 105.3,222.4 107.9,217.4 112.7,219.8" fill="#cfe3bf" opacity="0.85"/>
<polygon points="66.4,208.8 65.9,211.3 63.5,211.3 62.6,208.8 63.2,207.0 65.6,207.0" fill="#cfe3bf" opacity="0.85"/>
<polygon points="114.3,149.6 113.1,151.1 111.4,151.1 111.2,149.6 111.5,148.2 113.4,148.4" fill="#cfe3bf" opacity="0.85"/>
<polygon points="106.5,216.5 104.5,220.1 101.3,219.3 100.3,216.5 101.0,212.3 105.5,212.0" fill="#cfe3bf" opacity="0.85"/>
<polygon points="46.4,121.2 45.3,124.8 41.5,124.4 40.9,121.2 42.4,119.1 45.2,118.1" fill="#cfe3bf" opacity="0.85"/>
<polygon points="54.9,206.2 53.8,207.6 51.2,208.5 50.9,206.2 51.1,204.3 53.7,203.7" fill="#cfe3bf" opacity="0.85"/>
<polygon points="71.8,277.4 71.2,279.2 68.2,279.5 68.0,277.4 68.7,276.1 71.2,275.7" fill="#cfe3bf" opacity="0.85"/>
<polygon points="10.1,142.5 7.6,145.1 3.5,144.7 3.3,142.5 3.5,138.8 8.3,138.4" fill="#cfe3bf" opacity="0.85"/>
<polygon points="41.4,144.0 40.3,147.6 38.0,147.6 34.6,144.0 37.4,141.9 40.5,141.9" fill="#cfe3bf" opacity="0.85"/>
<polygon points="52.8,146.6 51.1,149.9 47.1,148.9 45.5,146.6 47.0,143.2 50.5,143.0" fill="#cfe3bf" opacity="0.85"/>
<polygon points="60.5,269.2 59.8,270.8 58.0,270.6 57.0,269.2 58.1,267.3 59.4,267.6" fill="#cfe3bf" opacity="0.85"/>
<polygon points="8.0,160.9 6.9,162.9 5.6,162.1 5.1,160.9 5.6,159.5 7.0,159.3" fill="#cfe3bf" opacity="0.85"/>
<polygon points="17.6,242.1 16.1,244.5 14.1,243.7 13.3,242.1 13.8,239.8 16.0,239.7" fill="#cfe3bf" opacity="0.85"/>
<polygon points="63.5,262.6 63.1,264.4 60.9,264.0 60.1,262.6 60.9,261.0 62.9,260.4" fill="#cfe3bf" opacity="0.85"/>
<polygon points="81.6,260.8 80.3,262.2 78.4,263.0 77.8,260.8 78.7,259.6 80.5,259.6" fill="#cfe3bf" opacity="0.85"/>
<polygon points="70.6,170.5 70.1,173.2 67.7,172.0 66.2,170.5 67.8,168.0 70.0,168.6" fill="#cfe3bf" opacity="0.85"/>
<polygon points="108.9,211.0 107.6,213.3 103.6,214.4 101.0,211.0 104.2,208.8 107.4,208.4" fill="#cfe3bf" opacity="0.85"/>
<polygon points="107.0,211.0 105.7,214.0 103.0,213.2 100.9,211.0 102.5,209.0 106.1,208.4" fill="#cfe3bf" opacity="0.85"/>
<polygon points="114.9,146.9 113.6,148.2 112.1,148.4 111.1,146.9 111.8,146.0 113.5,145.5" fill="#cfe3bf" opacity="0.85"/>
<polygon points="41.8,150.8 41.1,154.4 37.5,154.2 35.8,150.8 37.1,147.4 40.2,147.7" fill="#cfe3bf" opacity="0.85"/>
<polygon points="92.1,160.1 89.9,162.3 87.7,162.9 85.6,160.1 87.5,158.0 90.0,157.3" fill="#cfe3bf" opacity="0.85"/>
<polygon points="16.4,158.3 14.1,161.1 10.7,162.5 7.8,158.3 10.7,154.6 14.6,153.9" fill="#cfe3bf" opacity="0.85"/>
<polygon points="94.9,266.1 92.7,270.6 88.3,268.7 85.5,266.1 88.9,263.8 92.0,262.8" fill="#cfe3bf" opacity="0.85"/>
<polygon points="96.8,156.3 95.7,158.4 93.6,157.6 92.7,156.3 93.2,154.7 95.7,154.2" fill="#cfe3bf" opacity="0.85"/>
<polygon points="40.9,250.3 38.9,252.7 36.3,252.8 34.0,250.3 35.9,247.7 38.8,248.2" fill="#cfe3bf" opacity="0.85"/>
<polygon points="47.8,170.8 47.1,175.7 43.0,174.2 38.7,170.8 42.0,167.0 46.7,166.0" fill="#cfe3bf" opacity="0.85"/>
<polygon points="116.5,213.4 113.7,215.6 109.5,216.5 107.7,213.4 110.6,211.3 113.8,209.2" fill="#cfe3bf" opacity="0.85"/>
<polygon points="68.1,265.2 66.5,267.2 63.8,267.0 63.6,265.2 64.4,262.7 66.6,262.8" fill="#cfe3bf" opacity="0.85"/>
<polygon points="26.9,253.0 26.1,255.6 21.6,256.3 18.9,253.0 21.7,249.7 24.6,249.5" fill="#cfe3bf" opacity="0.85"/>
<polygon points="38.6,192.5 38.3,194.5 34.8,196.4 31.9,192.5 35.1,188.8 38.2,189.1" fill="#cfe3bf" opacity="0.85"/>
<polygon points="78.4,256.0 77.1,258.2 74.3,258.2 73.2,256.0 74.3,253.2 77.9,253.8" fill="#cfe3bf" opacity="0.85"/>
<polygon points="74.3,268.9 73.2,271.2 71.2,270.1 70.6,268.9 71.8,266.9 73.4,267.6" fill="#cfe3bf" opacity="0.85"/>
<polygon points="40.2,146.4 36.7,150.2 33.5,149.3 31.7,146.4 33.5,142.4 36.9,143.7" fill="#cfe3bf" opacity="0.85"/>
<polygon points="39.2,141.6 38.6,142.8 36.8,143.6 35.5,141.6 37.1,140.0 38.2,140.1" fill="#cfe3bf" opacity="0.85"/>
<polygon points="15.3,224.3 13.7,226.6 11.0,226.1 10.0,224.3 10.9,222.6 14.2,221.1" fill="#cfe3bf" opacity="0.85"/>
<polygon points="113.7,269.5 112.9,271.1 111.0,270.9 110.6,269.5 111.1,268.1 112.8,268.7" fill="#cfe3bf" opacity="0.85"/>
<polygon points="43.3,257.6 41.3,261.2 37.7,260.2 36.8,257.6 37.7,255.5 42.3,253.3" fill="#cfe3bf" opacity="0.85"/>
<polygon points="96.4,230.5 93.9,233.1 91.8,232.4 91.0,230.5 91.2,228.0 93.8,227.7" fill="#cfe3bf" opacity="0.85"/>
<polygon points="85.6,181.5 84.6,183.8 82.6,183.2 82.1,181.5 82.8,179.9 85.0,180.2" fill="#cfe3bf" opacity="0.85"/>
<polygon points="53.3,212.8 52.4,216.1 48.6,215.8 47.6,212.8 49.2,209.8 51.5,210.8" fill="#cfe3bf" opacity="0.85"/>
<polygon points="92.1,218.7 90.0,221.7 87.2,221.0 85.7,218.7 87.6,217.1 90.5,216.3" fill="#cfe3bf" opacity="0.85"/>
<polygon points="102.3,235.5 101.9,237.3 99.5,237.3 98.0,235.5 100.1,233.8 101.7,233.0" fill="#cfe3bf" opacity="0.85"/>
<polygon points="76.5,288.6 75.0,291.1 72.6,291.3 71.8,288.6 72.6,287.1 75.1,286.3" fill="#cfe3bf" opacity="0.85"/>
<polygon points="105.8,185.3 104.1,188.3 100.8,188.1 99.0,185.3 101.6,183.5 103.7,183.4" fill="#cfe3bf" opacity="0.85"/>
<polygon points="113.4,271.9 111.8,274.1 109.4,275.5 108.0,271.9 109.0,268.2 112.6,269.6" fill="#cfe3bf" opacity="0.85"/>
<polygon points="56.5,178.2 54.8,180.3 53.1,180.3 51.2,178.2 52.7,176.7 55.1,175.7" fill="#cfe3bf" opacity="0.85"/>
<polygon points="40.0,176.7 39.2,178.0 37.4,178.0 36.0,176.7 37.4,175.1 39.4,174.4" fill="#cfe3bf" opacity="0.85"/>
<polygon points="49.2,261.2 48.6,263.2 46.3,262.6 46.0,261.2 46.7,259.3 48.9,258.9" fill="#cfe3bf" opacity="0.85"/>
<polygon points="91.4,216.9 90.0,219.0 87.6,218.4 85.6,216.9 87.4,215.0 89.5,214.3" fill="#cfe3bf" opacity="0.85"/>
<polygon points="108.3,141.0 106.4,144.7 101.2,144.3 98.8,141.0 100.3,138.1 105.6,137.2" fill="#cfe3bf" opacity="0.85"/>
<polygon points="98.0,207.2 97.0,211.4 92.6,210.2 91.0,207.2 92.6,204.8 96.9,203.1" fill="#cfe3bf" opacity="0.85"/>
<polygon points="21.0,293.4 18.8,296.3 15.8,297.4 13.6,293.4 15.1,289.5 18.6,291.4" fill="#cfe3bf" opacity="0.85"/>
<polygon points="38.9,163.7 36.4,165.4 33.8,166.7 32.1,163.7 33.9,161.0 36.1,161.2" fill="#cfe3bf" opacity="0.85"/>
<polygon points="14.8,244.0 13.1,245.8 10.1,247.3 8.2,244.0 9.6,241.1 12.8,241.0" fill="#cfe3bf" opacity="0.85"/>
<polygon points="97.0,159.5 96.2,161.8 94.5,160.8 92.7,159.5 94.2,157.4 96.2,157.4" fill="#cfe3bf" opacity="0.85"/>
<polygon points="13.3,139.4 12.3,140.7 10.4,140.6 9.5,139.4 10.5,137.6 12.3,137.9" fill="#cfe3bf" opacity="0.85"/>
<polygon points="108.7,144.8 106.7,148.5 103.0,148.6 100.8,144.8 102.8,141.7 106.2,141.7" fill="#cfe3bf" opacity="0.85"/>
<polygon points="74.7,166.9 72.0,170.4 67.9,171.0 65.4,166.9 67.6,164.3 71.8,164.4" fill="#cfe3bf" opacity="0.85"/>
<polygon points="90.1,124.0 88.6,129.2 83.5,127.6 82.0,124.0 84.2,120.7 88.6,121.2" fill="#cfe3bf" opacity="0.85"/>
<polygon points="76.1,255.1 74.1,259.2 70.1,258.6 66.8,255.1 69.2,251.3 73.8,251.8" fill="#cfe3bf" opacity="0.85"/>
<polygon points="22.1,247.8 21.9,249.8 19.5,249.9 17.7,247.8 19.3,245.9 21.6,245.2" fill="#cfe3bf" opacity="0.85"/>
<polygon points="115.8,208.0 114.9,209.8 113.2,209.4 111.9,208.0 113.1,206.5 115.1,206.2" fill="#cfe3bf" opacity="0.85"/>
<polygon points="4.6,191.0 3.0,194.8 -0.2,194.6 -1.4,191.0 -0.5,188.3 3.6,188.4" fill="#cfe3bf" opacity="0.85"/>
<polygon points="96.9,280.5 96.3,282.5 94.5,282.0 94.1,280.5 94.9,278.7 96.0,278.9" fill="#cfe3bf" opacity="0.85"/>
<polygon points="15.4,213.9 12.6,218.7 8.2,218.8 7.4,213.9 8.2,209.9 13.4,211.5" fill="#cfe3bf" opacity="0.85"/>
<polygon points="31.9,156.8 30.7,159.5 28.3,158.2 26.8,156.8 28.4,154.2 30.9,154.9" fill="#cfe3bf" opacity="0.85"/>
<polygon points="39.5,214.2 38.6,217.5 34.2,216.6 33.2,214.2 34.5,209.9 37.8,212.0" fill="#cfe3bf" opacity="0.85"/>
<polygon points="31.3,220.6 27.7,224.5 24.0,222.9 22.7,220.6 23.6,216.5 28.3,218.2" fill="#cfe3bf" opacity="0.85"/>
<polygon points="29.5,146.7 27.5,148.5 24.6,149.6 23.7,146.7 24.6,144.6 27.3,144.1" fill="#cfe3bf" opacity="0.85"/>
<polygon points="108.2,266.6 105.9,269.5 102.2,269.3 101.4,266.6 102.7,264.2 106.1,263.5" fill="#cfe3bf" opacity="0.85"/>
<polygon points="10.0,213.0 8.1,215.8 4.9,215.8 3.7,213.0 5.1,209.7 9.0,210.7" fill="#cfe3bf" opacity="0.85"/>
<polygon points="79.0,126.0 77.9,127.4 75.6,127.3 75.2,126.0 75.9,124.9 77.8,124.5" fill="#cfe3bf" opacity="0.85"/>
<polygon points="53.9,180.6 53.0,181.9 50.5,182.3 48.9,180.6 49.9,179.2 52.5,177.9" fill="#cfe3bf" opacity="0.85"/>
<polygon points="91.9,268.2 91.1,269.9 89.3,269.8 88.2,268.2 89.2,265.6 91.5,266.3" fill="#cfe3bf" opacity="0.85"/>
<polygon points="54.0,222.4 53.0,227.7 47.4,225.2 46.0,222.4 48.5,219.3 52.2,219.7" fill="#cfe3bf" opacity="0.85"/>
<polygon points="30.0,293.3 27.4,297.3 23.3,296.4 23.2,293.3 23.7,289.5 28.0,289.0" fill="#cfe3bf" opacity="0.85"/>
<polygon points="16.7,282.1 15.2,284.5 11.7,284.4 11.1,282.1 12.3,279.8 15.6,279.5" fill="#cfe3bf" opacity="0.85"/>
<polygon points="39.7,195.0 38.6,198.4 34.7,198.5 33.6,195.0 34.9,192.9 38.7,191.3" fill="#cfe3bf" opacity="0.85"/>
<polygon points="87.5,138.3 86.7,141.3 82.9,141.4 80.0,138.3 82.8,134.2 85.5,135.9" fill="#cfe3bf" opacity="0.85"/>
<polygon points="17.3,240.5 14.8,243.9 10.8,243.8 7.5,240.5 11.0,238.0 14.7,238.3" fill="#cfe3bf" opacity="0.85"/>
<polygon points="64.1,240.3 63.8,243.2 60.4,242.6 58.2,240.3 60.6,238.1 63.2,237.8" fill="#cfe3bf" opacity="0.85"/>
<polygon points="77.9,154.0 75.2,158.0 70.7,156.4 69.8,154.0 70.5,150.1 75.3,150.1" fill="#cfe3bf" opacity="0.85"/>
<polygon points="46.2,162.1 45.5,164.0 43.6,163.4 43.1,162.1 43.6,160.8 45.9,159.7" fill="#cfe3bf" opacity="0.85"/>
<polygon points="5.3,274.7 4.1,277.5 0.7,279.1 -1.2,274.7 1.0,270.4 4.1,271.9" fill="#cfe3bf" opacity="0.85"/>
<polygon points="31.8,268.7 30.8,270.6 28.8,270.0 27.6,268.7 28.8,267.5 30.7,266.6" fill="#cfe3bf" opacity="0.85"/>
<polygon points="27.0,275.2 25.2,277.5 23.3,277.4 22.7,275.2 23.4,273.8 25.3,272.8" fill="#cfe3bf" opacity="0.85"/>
<polygon points="32.6,286.6 31.7,288.8 29.0,289.3 28.1,286.6 28.3,284.5 31.6,283.3" fill="#cfe3bf" opacity="0.85"/>
<polygon points="30.3,129.9 28.8,133.1 24.4,133.5 24.1,129.9 25.1,127.5 27.7,126.1" fill="#cfe3bf" opacity="0.85"/>
<polygon points="109.7,218.5 109.2,219.6 107.4,219.9 107.3,218.5 107.8,217.5 109.1,217.2" fill="#cfe3bf" opacity="0.85"/>
<polygon points="76.5,255.8 74.3,258.6 70.7,258.0 68.3,255.8 70.6,253.2 73.6,252.7" fill="#cfe3bf" opacity="0.85"/>
<polygon points="46.3,138.5 45.4,140.3 43.3,140.0 42.5,138.5 43.4,136.1 45.8,136.0" fill="#cfe3bf" opacity="0.85"/>
<polygon points="23.0,218.7 21.4,220.6 19.9,219.7 19.5,218.7 19.9,217.5 21.7,216.7" fill="#cfe3bf" opacity="0.85"/>
<polygon points="99.5,173.1 97.6,177.1 93.3,176.4 92.3,173.1 93.5,170.4 97.6,169.3" fill="#cfe3bf" opacity="0.85"/>
<polygon points="68.7,183.2 67.3,184.4 65.5,185.2 65.2,183.2 65.8,181.6 67.2,182.1" fill="#cfe3bf" opacity="0.85"/>
<polygon points="85.1,282.7 84.3,284.4 83.1,284.2 82.3,282.7 82.7,280.9 84.5,281.6" fill="#cfe3bf" opacity="0.85"/>
<polygon points="18.6,257.2 16.5,260.4 11.5,261.6 10.9,257.2 12.6,253.5 16.6,252.8" fill="#cfe3bf" opacity="0.85"/>
<polygon points="74.8,204.4 72.7,207.3 70.7,206.1 69.9,204.4 70.5,201.6 72.8,202.3" fill="#cfe3bf" opacity="0.85"/>
<polygon points="94.0,172.3 91.2,176.4 87.3,175.9 86.2,172.3 87.6,170.3 91.5,168.7" fill="#cfe3bf" opacity="0.85"/>
<polygon points="117.9,148.2 115.4,151.4 111.6,152.0 111.4,148.2 111.9,145.0 115.5,144.7" fill="#cfe3bf" opacity="0.85"/>
<polygon points="87.0,243.7 85.8,246.3 83.7,246.0 82.4,243.7 83.1,242.2 86.1,240.9" fill="#cfe3bf" opacity="0.85"/>
<polygon points="118.0,199.8 116.4,204.1 112.7,202.4 111.2,199.8 113.5,196.3 116.9,195.7" fill="#cfe3bf" opacity="0.85"/>
<polygon points="5.0,122.5 3.3,126.3 -1.1,124.5 -1.2,122.5 -0.1,119.4 3.6,118.6" fill="#cfe3bf" opacity="0.85"/>
<polygon points="110.3,132.0 109.6,133.9 107.6,133.5 106.3,132.0 107.6,130.4 109.4,131.0" fill="#cfe3bf" opacity="0.85"/>
<polygon points="114.3,231.9 113.1,234.5 111.2,233.7 110.3,231.9 111.3,229.8 113.3,230.1" fill="#cfe3bf" opacity="0.85"/>
<polygon points="86.5,274.4 85.6,276.3 83.4,275.6 82.4,274.4 83.8,272.7 85.3,272.5" fill="#cfe3bf" opacity="0.85"/>
<polygon points="73.2,263.5 71.7,264.7 70.5,264.5 70.1,263.5 70.4,262.7 71.6,261.9" fill="#cfe3bf" opacity="0.85"/>
<polygon points="98.3,200.5 97.8,203.5 92.6,204.5 90.1,200.5 93.3,198.2 96.8,196.4" fill="#cfe3bf" opacity="0.85"/>
<polygon points="48.7,210.1 48.2,211.7 44.5,212.7 43.4,210.1 45.1,207.8 47.7,207.8" fill="#cfe3bf" opacity="0.85"/>
<polygon points="87.1,261.5 85.8,265.9 81.5,265.5 77.6,261.5 81.8,257.0 85.6,256.3" fill="#cfe3bf" opacity="0.85"/>
<polygon points="71.7,156.0 68.0,160.9 63.9,159.2 60.9,156.0 62.8,152.2 67.8,150.8" fill="#cfe3bf" opacity="0.85"/>
<polygon points="53.4,190.7 51.4,193.9 48.7,194.3 47.8,190.7 48.1,187.6 51.5,186.7" fill="#cfe3bf" opacity="0.85"/>
<polygon points="114.3,125.2 112.9,129.0 109.5,127.4 107.0,125.2 109.6,121.6 113.6,123.3" fill="#cfe3bf" opacity="0.85"/>
<polygon points="46.5,213.2 44.3,214.9 42.5,215.3 42.0,213.2 42.6,211.4 44.9,211.7" fill="#cfe3bf" opacity="0.85"/>
<polygon points="62.4,145.1 61.7,148.6 56.1,148.0 54.2,145.1 57.5,141.4 60.6,140.0" fill="#cfe3bf" opacity="0.85"/>
<polygon points="69.1,146.5 66.9,148.9 63.9,149.6 63.2,146.5 64.7,143.5 66.9,144.5" fill="#cfe3bf" opacity="0.85"/>
<polygon points="5.5,187.5 2.2,192.8 -1.4,191.5 -3.0,187.5 -2.3,183.4 2.8,182.3" fill="#cfe3bf" opacity="0.85"/>
<polygon points="11.7,203.8 10.4,208.0 5.0,207.4 4.0,203.8 4.7,200.3 9.6,198.9" fill="#cfe3bf" opacity="0.85"/>
<polygon points="31.8,149.1 29.3,151.2 26.7,152.4 25.9,149.1 26.2,146.0 29.6,145.7" fill="#cfe3bf" opacity="0.85"/>
<polygon points="40.5,133.0 39.2,134.6 37.1,135.1 34.9,133.0 37.1,131.2 39.2,131.6" fill="#cfe3bf" opacity="0.85"/>
<polygon points="78.1,170.8 76.2,172.4 73.6,173.3 72.8,170.8 73.9,169.3 76.8,167.8" fill="#cfe3bf" opacity="0.85"/>
<polygon points="46.3,180.1 44.7,181.3 42.9,182.4 41.8,180.1 43.0,178.9 44.7,178.1" fill="#cfe3bf" opacity="0.85"/>
<polygon points="29.6,134.0 27.8,135.4 25.8,135.2 24.8,134.0 25.5,131.9 27.6,132.4" fill="#cfe3bf" opacity="0.85"/>
<polygon points="27.7,173.3 27.5,178.1 21.6,176.0 19.9,173.3 22.1,168.0 26.8,168.0" fill="#cfe3bf" opacity="0.85"/>
<polygon points="49.7,221.3 48.8,222.9 46.6,223.4 45.7,221.3 47.2,219.1 49.4,220.1" fill="#cfe3bf" opacity="0.85"/>
<polygon points="113.7,225.8 111.9,228.0 109.5,228.4 107.7,225.8 109.4,223.6 111.9,223.2" fill="#cfe3bf" opacity="0.85"/>
<polygon points="108.5,173.5 108.1,174.7 106.2,174.8 105.5,173.5 106.3,172.5 108.1,171.5" fill="#cfe3bf" opacity="0.85"/>
<polygon points="29.1,182.1 27.6,185.7 24.4,184.5 23.8,182.1 24.3,180.0 27.6,179.5" fill="#cfe3bf" opacity="0.85"/>
<polygon points="71.1,250.2 69.4,252.2 65.4,252.1 63.8,250.2 66.0,248.0 68.7,248.1" fill="#cfe3bf" opacity="0.85"/>
<polygon points="45.4,168.1 44.8,169.9 43.2,170.6 41.4,168.1 42.9,166.7 45.3,165.8" fill="#cfe3bf" opacity="0.85"/>
<polygon points="100.5,147.2 99.5,150.2 97.0,150.0 95.0,147.2 97.3,144.7 99.1,144.0" fill="#cfe3bf" opacity="0.85"/>
<polygon points="2.8,126.4 1.0,128.3 -1.0,128.1 -2.9,126.4 -0.8,123.9 1.8,123.9" fill="#cfe3bf" opacity="0.85"/>
<polygon points="27.9,272.6 27.4,275.1 24.3,274.8 23.3,272.6 24.9,270.7 27.3,269.7" fill="#cfe3bf" opacity="0.85"/>
<polygon points="76.8,225.8 75.5,227.8 73.4,227.6 73.0,225.8 74.1,223.6 75.8,224.7" fill="#cfe3bf" opacity="0.85"/>
<polygon points="61.3,165.0 61.1,167.2 57.3,167.3 55.1,165.0 57.0,161.3 60.2,161.9" fill="#cfe3bf" opacity="0.85"/>
<polygon points="97.4,180.9 96.7,183.9 93.5,182.8 91.9,180.9 94.1,178.4 96.3,178.0" fill="#cfe3bf" opacity="0.85"/>
<polygon points="110.3,241.6 108.0,244.5 105.4,245.0 103.1,241.6 104.8,239.4 108.8,239.6" fill="#cfe3bf" opacity="0.85"/>
<polygon points="16.0,210.3 14.7,211.4 12.2,211.4 11.2,210.3 12.2,208.2 14.3,208.5" fill="#cfe3bf" opacity="0.85"/>
<polygon points="45.3,122.6 44.6,124.3 42.1,124.8 41.0,122.6 41.9,121.1 44.6,120.0" fill="#cfe3bf" opacity="0.85"/>
<polygon points="36.9,285.5 36.0,287.1 34.3,286.9 33.6,285.5 34.1,284.1 35.9,283.7" fill="#cfe3bf" opacity="0.85"/>
<polygon points="82.4,246.7 81.3,248.7 79.3,248.7 78.3,246.7 79.8,245.6 81.8,245.1" fill="#cfe3bf" opacity="0.85"/>
<polygon points="49.6,291.4 48.1,294.5 45.4,295.1 42.1,291.4 44.8,288.2 48.1,288.7" fill="#cfe3bf" opacity="0.85"/>
<polygon points="85.4,151.0 84.7,152.6 83.0,151.9 82.6,151.0 83.2,149.4 84.6,149.5" fill="#cfe3bf" opacity="0.85"/>
<polygon points="71.5,231.8 69.3,235.4 66.0,236.8 62.8,231.8 65.3,227.8 69.8,227.9" fill="#cfe3bf" opacity="0.85"/>
<polygon points="22.8,221.5 21.2,224.5 17.3,225.1 13.9,221.5 17.4,217.3 21.0,219.2" fill="#cfe3bf" opacity="0.85"/>
<polygon points="13.3,223.5 10.6,227.9 6.0,227.9 3.6,223.5 6.8,220.2 10.8,219.4" fill="#cfe3bf" opacity="0.85"/>
<polygon points="70.5,237.2 68.8,241.0 65.7,241.2 61.8,237.2 64.8,233.1 69.0,234.9" fill="#cfe3bf" opacity="0.85"/>
<polygon points="39.5,237.0 38.2,240.0 35.2,238.7 34.4,237.0 36.0,234.2 38.3,234.9" fill="#cfe3bf" opacity="0.85"/>
<polygon points="42.4,216.7 41.7,220.0 38.4,219.4 36.5,216.7 37.7,213.6 41.1,214.4" fill="#cfe3bf" opacity="0.85"/>
<polygon points="17.1,120.3 14.9,122.6 11.8,123.7 10.5,120.3 11.9,118.1 14.8,116.1" fill="#cfe3bf" opacity="0.85"/>
<polygon points="105.8,200.6 104.6,201.7 103.0,201.7 102.1,200.6 103.4,199.1 104.5,199.0" fill="#cfe3bf" opacity="0.85"/>
<polygon points="108.0,137.6 107.9,140.7 104.5,139.1 103.1,137.6 104.8,135.7 107.4,134.8" fill="#cfe3bf" opacity="0.85"/>
<polygon points="23.8,127.6 21.2,131.3 17.7,132.6 16.4,127.6 18.0,123.0 21.7,125.0" fill="#cfe3bf" opacity="0.85"/>
<polygon points="94.6,171.6 91.7,175.7 87.4,174.3 85.8,171.6 86.1,167.0 91.1,168.0" fill="#cfe3bf" opacity="0.85"/>
<polygon points="88.5,183.4 86.5,186.0 81.5,187.3 80.7,183.4 81.2,179.4 85.4,180.3" fill="#cfe3bf" opacity="0.85"/>
<polygon points="39.6,258.2 38.7,259.8 37.4,259.5 36.0,258.2 36.9,257.0 38.4,257.3" fill="#cfe3bf" opacity="0.85"/>
<polygon points="63.2,179.1 60.3,182.8 56.2,182.2 51.8,179.1 55.1,175.8 60.2,176.4" fill="#cfe3bf" opacity="0.85"/>
<polygon points="40.6,3.3 37.1,8.1 32.4,6.6 28.7,3.3 32.4,-0.3 37.0,-0.9" fill="#cfe3bf" opacity="0.85"/>
<polygon points="46.7,15.5 44.4,19.2 40.6,18.9 38.5,15.5 40.7,13.6 44.0,13.4" fill="#cfe3bf" opacity="0.85"/>
<polygon points="61.7,49.4 61.4,54.0 57.2,53.4 53.4,49.4 57.6,46.0 61.6,46.1" fill="#cfe3bf" opacity="0.85"/>
<polygon points="40.6,47.3 39.5,49.6 36.2,49.3 35.4,47.3 36.4,45.3 39.3,44.2" fill="#cfe3bf" opacity="0.85"/>
<polygon points="77.6,8.2 76.1,11.0 73.3,11.7 70.6,8.2 72.3,4.6 76.8,6.0" fill="#cfe3bf" opacity="0.85"/>
<polygon points="9.4,22.3 6.8,25.2 3.2,26.4 0.7,22.3 3.9,19.8 6.8,18.5" fill="#cfe3bf" opacity="0.85"/>
<polygon points="43.2,54.3 40.7,58.0 36.5,57.5 33.9,54.3 36.6,50.5 40.5,50.0" fill="#cfe3bf" opacity="0.85"/>
<polygon points="27.4,0.4 25.4,2.4 22.9,2.3 21.3,0.4 23.3,-1.6 25.8,-1.3" fill="#cfe3bf" opacity="0.85"/>
<polygon points="33.9,37.6 30.9,42.1 27.5,41.8 25.0,37.6 27.6,35.2 30.3,34.6" fill="#cfe3bf" opacity="0.85"/>
<polygon points="62.0,38.8 60.2,42.0 57.0,41.2 55.7,38.8 57.3,36.6 59.7,36.8" fill="#cfe3bf" opacity="0.85"/>
<polygon points="25.4,15.7 24.9,16.9 23.9,17.3 22.5,15.7 23.9,14.8 25.2,14.7" fill="#cfe3bf" opacity="0.85"/>
<polygon points="29.1,42.4 26.0,46.3 20.8,46.8 17.9,42.4 20.8,37.6 25.3,39.2" fill="#cfe3bf" opacity="0.85"/>
<polygon points="79.8,36.8 78.7,38.8 76.9,38.7 76.2,36.8 76.9,35.4 78.3,34.8" fill="#cfe3bf" opacity="0.85"/>
<polygon points="44.7,20.8 44.4,25.3 39.5,25.8 38.6,20.8 39.2,15.5 43.4,15.9" fill="#cfe3bf" opacity="0.85"/>
<polygon points="85.4,9.5 83.8,13.0 80.7,12.0 79.0,9.5 79.9,5.8 83.7,5.8" fill="#cfe3bf" opacity="0.85"/>
<polygon points="48.5,48.8 44.6,53.6 41.3,51.5 37.9,48.8 40.4,44.1 44.6,44.4" fill="#cfe3bf" opacity="0.85"/>
<polygon points="24.5,37.6 22.3,42.1 18.2,42.1 17.9,37.6 18.1,34.9 21.9,33.8" fill="#cfe3bf" opacity="0.85"/>
<polygon points="45.6,17.0 45.2,18.4 44.0,17.9 42.9,17.0 44.0,16.2 45.3,16.2" fill="#cfe3bf" opacity="0.85"/>
<polygon points="42.9,7.6 39.9,10.6 37.1,10.3 34.8,7.6 37.2,5.5 40.5,3.9" fill="#cfe3bf" opacity="0.85"/>
<polygon points="40.0,1.1 38.4,2.6 36.3,3.5 35.8,1.1 35.9,-1.5 38.9,-0.9" fill="#cfe3bf" opacity="0.85"/>
<polygon points="49.5,10.9 48.5,13.4 44.7,13.9 41.8,10.9 45.2,8.9 48.6,7.7" fill="#cfe3bf" opacity="0.85"/>
<polygon points="4.2,24.9 2.6,28.2 -0.9,27.6 -2.8,24.9 -1.0,21.6 1.7,21.1" fill="#cfe3bf" opacity="0.85"/>
<polygon points="32.5,42.0 31.6,43.7 29.8,43.4 29.5,42.0 29.8,40.6 31.2,40.8" fill="#cfe3bf" opacity="0.85"/>
<polygon points="71.1,7.6 68.3,13.0 64.8,12.3 62.3,7.6 64.7,2.6 68.2,4.6" fill="#cfe3bf" opacity="0.85"/>
<polygon points="13.9,45.9 12.3,47.6 10.4,47.9 10.1,45.9 10.5,44.5 12.4,44.1" fill="#cfe3bf" opacity="0.85"/>
<polygon points="63.6,12.0 60.8,15.4 55.2,15.7 51.7,12.0 55.6,7.5 59.5,8.2" fill="#cfe3bf" opacity="0.85"/>
<polygon points="30.5,33.0 29.2,36.4 25.5,35.8 24.6,33.0 25.6,29.8 29.3,30.4" fill="#cfe3bf" opacity="0.85"/>
<polygon points="76.5,32.2 75.7,33.3 73.4,33.4 72.8,32.2 73.6,31.0 75.6,30.3" fill="#cfe3bf" opacity="0.85"/>
<polygon points="17.7,16.9 17.3,21.2 12.3,21.6 9.8,16.9 11.5,13.4 17.2,12.3" fill="#cfe3bf" opacity="0.85"/>
<polygon points="90.7,31.5 89.2,35.2 86.2,33.7 85.1,31.5 86.3,28.4 89.0,29.0" fill="#cfe3bf" opacity="0.85"/>
<polygon points="51.9,24.1 51.8,25.4 49.8,25.3 49.0,24.1 50.0,22.1 52.0,23.0" fill="#cfe3bf" opacity="0.85"/>
<polygon points="70.5,17.1 66.8,22.2 63.2,19.9 61.4,17.1 62.8,13.5 67.1,12.1" fill="#cfe3bf" opacity="0.85"/>
<polygon points="90.6,23.2 87.3,27.1 84.1,25.6 80.8,23.2 84.4,18.3 87.9,19.6" fill="#cfe3bf" opacity="0.85"/>
<polygon points="64.2,1.8 63.4,3.0 62.1,3.7 61.2,1.8 62.0,-0.1 63.7,0.4" fill="#cfe3bf" opacity="0.85"/>
<polygon points="6.1,44.9 5.0,47.2 0.4,49.3 -0.8,44.9 -0.2,40.5 4.5,42.3" fill="#cfe3bf" opacity="0.85"/>
<polygon points="35.3,52.8 33.9,55.2 31.6,54.2 29.3,52.8 31.4,51.0 34.0,50.0" fill="#cfe3bf" opacity="0.85"/>
<polygon points="45.7,15.3 45.0,17.6 40.5,17.8 38.7,15.3 41.1,11.8 44.0,12.2" fill="#cfe3bf" opacity="0.85"/>
<polygon points="7.2,42.1 5.9,44.8 4.0,44.4 1.8,42.1 3.8,40.7 5.5,40.3" fill="#cfe3bf" opacity="0.85"/>
<polygon points="49.5,42.3 47.7,46.4 43.1,44.8 41.1,42.3 43.9,37.3 47.2,38.6" fill="#cfe3bf" opacity="0.85"/>
<polygon points="42.1,47.6 41.4,50.2 37.9,51.3 36.6,47.6 37.9,44.8 41.4,44.2" fill="#cfe3bf" opacity="0.85"/>
<polygon points="80.7,17.7 79.9,20.0 77.5,19.8 76.2,17.7 78.2,15.7 79.7,16.2" fill="#cfe3bf" opacity="0.85"/>
<polygon points="91.7,53.1 90.3,55.8 87.8,56.1 87.0,53.1 88.6,51.2 90.7,51.4" fill="#cfe3bf" opacity="0.85"/>
<polygon points="27.0,3.5 25.3,6.3 22.2,6.6 20.1,3.5 22.3,1.5 25.8,0.8" fill="#cfe3bf" opacity="0.85"/>
<polygon points="80.2,42.8 80.3,46.6 76.7,46.4 73.7,42.8 76.0,40.5 79.6,40.9" fill="#cfe3bf" opacity="0.85"/>
<polygon points="59.3,28.0 58.2,29.8 56.0,29.5 55.3,28.0 55.7,26.7 58.3,25.7" fill="#cfe3bf" opacity="0.85"/>
<polygon points="81.2,0.7 80.6,3.0 77.1,2.7 75.4,0.7 77.2,-2.9 80.5,-2.1" fill="#cfe3bf" opacity="0.85"/>
<polygon points="20.6,39.8 19.9,40.9 18.2,41.0 17.4,39.8 18.0,38.0 19.7,38.3" fill="#cfe3bf" opacity="0.85"/>
<polygon points="85.5,58.8 84.1,62.6 80.0,61.9 78.9,58.8 80.0,56.4 83.8,54.9" fill="#cfe3bf" opacity="0.85"/>
<polygon points="96.2,19.1 94.5,21.2 92.6,20.6 91.7,19.1 93.1,17.7 94.8,18.0" fill="#cfe3bf" opacity="0.85"/>
<polygon points="96.1,45.3 94.4,48.2 91.5,47.8 90.5,45.3 91.4,42.7 94.8,43.3" fill="#cfe3bf" opacity="0.85"/>
<polygon points="14.7,44.6 11.8,48.1 8.0,49.2 4.9,44.6 7.3,40.3 11.8,41.4" fill="#cfe3bf" opacity="0.85"/>
<polygon points="39.0,34.9 36.8,39.0 33.1,38.5 32.0,34.9 33.2,31.8 35.9,32.8" fill="#cfe3bf" opacity="0.85"/>
<polygon points="61.4,15.7 60.1,20.0 56.7,20.0 54.1,15.7 56.1,11.7 61.1,12.5" fill="#cfe3bf" opacity="0.85"/>
<polygon points="15.6,41.7 15.1,42.6 13.4,43.5 12.4,41.7 13.2,40.2 15.1,40.4" fill="#cfe3bf" opacity="0.85"/>
<polygon points="12.6,41.4 11.8,43.8 9.2,43.8 6.9,41.4 8.9,38.8 11.1,39.2" fill="#cfe3bf" opacity="0.85"/>
<polygon points="60.4,32.5 59.3,33.6 56.9,33.9 56.7,32.5 57.1,30.7 59.0,30.5" fill="#cfe3bf" opacity="0.85"/>
<polygon points="23.8,35.7 22.5,39.1 18.6,39.3 17.8,35.7 18.8,31.3 22.1,31.6" fill="#cfe3bf" opacity="0.85"/>
<polygon points="48.5,37.4 47.9,39.6 45.0,38.8 44.5,37.4 45.2,35.1 47.7,34.9" fill="#cfe3bf" opacity="0.85"/>
<polygon points="93.3,40.3 91.9,42.4 90.4,41.5 89.5,40.3 90.1,38.8 92.4,38.1" fill="#cfe3bf" opacity="0.85"/>
<polygon points="87.0,15.5 86.4,17.0 84.0,18.1 82.5,15.5 83.7,13.7 86.6,13.0" fill="#cfe3bf" opacity="0.85"/>
<polygon points="81.2,51.1 81.2,52.3 79.2,53.0 78.7,51.1 78.8,49.5 81.1,49.5" fill="#cfe3bf" opacity="0.85"/>
<polygon points="99.2,56.1 95.1,61.4 90.0,60.1 88.9,56.1 90.6,51.4 95.8,52.8" fill="#cfe3bf" opacity="0.85"/>
<polygon points="33.6,8.9 33.2,14.4 28.9,14.3 25.6,8.9 28.5,5.6 33.4,4.6" fill="#cfe3bf" opacity="0.85"/>
<polygon points="99.4,59.1 96.0,63.7 91.6,64.3 89.3,59.1 93.0,54.6 97.4,56.2" fill="#cfe3bf" opacity="0.85"/>
<polygon points="98.5,55.4 95.0,57.7 91.7,57.6 90.2,55.4 90.7,52.6 94.6,51.1" fill="#cfe3bf" opacity="0.85"/>
<polygon points="15.4,2.9 13.7,6.3 10.9,6.5 10.0,2.9 10.3,0.1 14.2,0.7" fill="#cfe3bf" opacity="0.85"/>
<polygon points="36.0,25.2 34.5,27.2 32.7,26.5 31.7,25.2 32.3,23.4 34.5,23.4" fill="#cfe3bf" opacity="0.85"/>
<polygon points="6.6,2.0 4.3,6.0 0.5,6.9 -1.9,2.0 0.2,-1.0 3.9,-1.4" fill="#cfe3bf" opacity="0.85"/>
<polygon points="81.0,23.5 80.9,27.8 75.5,27.1 75.1,23.5 76.7,20.5 80.7,20.3" fill="#cfe3bf" opacity="0.85"/>
<polygon points="72.2,58.4 71.4,62.0 67.8,60.8 66.5,58.4 67.9,55.2 70.5,56.4" fill="#cfe3bf" opacity="0.85"/>
<polygon points="6.5,9.7 3.9,14.3 0.0,13.9 -2.9,9.7 -0.5,7.0 3.3,5.2" fill="#cfe3bf" opacity="0.85"/>
<polygon points="59.9,37.7 57.3,41.5 52.3,42.1 51.8,37.7 52.6,33.8 57.2,34.9" fill="#cfe3bf" opacity="0.85"/>
<polygon points="75.9,44.1 73.0,46.8 69.0,48.7 66.7,44.1 68.7,39.1 73.9,39.9" fill="#cfe3bf" opacity="0.85"/>
<polygon points="74.8,42.2 72.5,45.2 68.1,45.3 65.4,42.2 69.3,39.9 72.5,39.2" fill="#cfe3bf" opacity="0.85"/>
<polygon points="25.0,32.3 23.1,34.1 19.8,34.2 19.8,32.3 20.7,29.8 22.9,30.2" fill="#cfe3bf" opacity="0.85"/>
<polygon points="64.2,47.4 61.9,50.5 57.6,51.4 55.4,47.4 58.4,44.2 62.1,43.3" fill="#cfe3bf" opacity="0.85"/>
<polygon points="11.4,49.7 10.2,51.3 7.8,52.2 5.2,49.7 6.8,47.6 10.5,47.8" fill="#cfe3bf" opacity="0.85"/>
<polygon points="5.0,58.5 2.6,60.9 -1.6,60.6 -2.8,58.5 -1.4,54.8 3.4,55.2" fill="#cfe3bf" opacity="0.85"/>
<polygon points="81.7,2.3 80.1,4.1 78.3,3.6 77.8,2.3 78.1,0.7 80.2,0.9" fill="#cfe3bf" opacity="0.85"/>
<polygon points="85.8,19.7 85.3,20.6 83.8,20.7 82.4,19.7 83.9,18.8 85.1,18.5" fill="#cfe3bf" opacity="0.85"/>
<polygon points="86.5,57.3 85.8,60.5 81.9,61.4 79.0,57.3 82.1,53.7 85.1,54.3" fill="#cfe3bf" opacity="0.85"/>
<polygon points="45.8,33.1 43.8,36.6 39.8,35.1 37.6,33.1 40.5,30.1 43.8,30.4" fill="#cfe3bf" opacity="0.85"/>
<polygon points="19.9,23.9 18.4,29.3 13.8,28.0 11.6,23.9 13.6,18.7 18.6,20.3" fill="#cfe3bf" opacity="0.85"/>
<polygon points="87.6,29.3 86.8,31.3 83.8,31.8 83.5,29.3 84.0,26.5 86.0,27.3" fill="#cfe3bf" opacity="0.85"/>
<polygon points="57.6,31.6 57.4,33.2 55.7,32.7 54.6,31.6 55.8,30.6 57.5,30.7" fill="#cfe3bf" opacity="0.85"/>
<polygon points="60.0,21.2 59.4,22.7 57.7,22.8 57.1,21.2 57.6,19.3 59.2,19.3" fill="#cfe3bf" opacity="0.85"/>
<polygon points="31.2,55.2 31.0,57.5 27.7,57.5 24.5,55.2 27.2,51.7 30.2,52.3" fill="#cfe3bf" opacity="0.85"/>
<polygon points="38.9,23.9 37.5,27.1 33.8,26.7 29.7,23.9 32.6,18.6 37.9,20.6" fill="#cfe3bf" opacity="0.85"/>
<polygon points="12.8,5.5 11.9,9.2 7.5,9.1 5.7,5.5 7.3,2.7 11.4,1.7" fill="#cfe3bf" opacity="0.85"/>
<polygon points="67.1,57.3 65.1,61.3 62.4,60.6 60.6,57.3 62.4,54.3 65.5,55.3" fill="#cfe3bf" opacity="0.85"/>
<polygon points="20.7,20.9 19.7,22.9 18.0,22.9 17.2,20.9 17.9,19.6 19.8,19.6" fill="#cfe3bf" opacity="0.85"/>
<polygon points="81.2,17.2 79.2,21.1 74.4,22.0 71.4,17.2 74.6,13.3 77.8,13.5" fill="#cfe3bf" opacity="0.85"/>
<polygon points="15.4,10.1 13.5,11.8 11.5,11.8 9.3,10.1 11.0,8.2 14.0,7.9" fill="#cfe3bf" opacity="0.85"/>
<polygon points="32.6,15.9 31.7,17.4 30.4,17.6 29.3,15.9 30.4,14.5 31.8,14.0" fill="#cfe3bf" opacity="0.85"/>
<polygon points="16.5,44.6 15.4,46.9 13.2,46.2 12.5,44.6 13.5,42.7 15.6,42.9" fill="#cfe3bf" opacity="0.85"/>
<polygon points="65.4,27.0 62.9,30.1 59.4,29.9 58.4,27.0 59.7,23.9 63.9,22.4" fill="#cfe3bf" opacity="0.85"/>
<polygon points="53.7,11.3 52.4,12.9 50.9,13.5 50.4,11.3 50.9,9.4 52.6,9.8" fill="#cfe3bf" opacity="0.85"/>
<polygon points="15.2,58.6 14.6,60.3 12.3,60.9 11.1,58.6 12.9,56.0 15.1,57.0" fill="#cfe3bf" opacity="0.85"/>
<polygon points="11.5,43.0 11.3,45.3 8.5,46.0 7.5,43.0 8.4,40.0 10.6,40.5" fill="#cfe3bf" opacity="0.85"/>
<polygon points="41.2,48.6 40.8,49.4 39.6,49.6 38.9,48.6 39.3,47.4 40.9,47.0" fill="#cfe3bf" opacity="0.85"/>
<polygon points="63.8,25.5 63.6,28.2 59.6,28.8 56.8,25.5 60.0,23.0 62.8,22.3" fill="#cfe3bf" opacity="0.85"/>
<polygon points="25.8,49.8 24.3,53.6 20.8,53.2 20.5,49.8 21.4,46.3 24.3,46.2" fill="#cfe3bf" opacity="0.85"/>
<polygon points="59.9,49.8 58.1,54.1 53.8,52.2 50.8,49.8 54.2,46.2 57.9,46.7" fill="#cfe3bf" opacity="0.85"/>
<polygon points="66.8,48.5 66.2,51.9 61.8,51.6 60.5,48.5 60.7,45.5 65.9,44.0" fill="#cfe3bf" opacity="0.85"/>
<polygon points="91.7,44.4 89.6,46.4 85.8,47.9 82.5,44.4 85.8,40.8 88.5,40.5" fill="#cfe3bf" opacity="0.85"/>
<polygon points="75.8,11.7 74.8,12.8 73.0,13.1 72.7,11.7 72.8,10.0 74.9,10.1" fill="#cfe3bf" opacity="0.85"/>
<polygon points="35.6,44.2 34.0,46.9 31.3,45.8 30.0,44.2 32.0,41.3 34.4,41.9" fill="#cfe3bf" opacity="0.85"/>
<polygon points="48.8,31.2 47.7,33.1 45.9,33.2 44.3,31.2 45.9,29.4 47.3,29.7" fill="#cfe3bf" opacity="0.85"/>
<polygon points="40.5,2.7 39.6,4.2 37.7,3.8 37.2,2.7 37.8,1.2 39.1,1.8" fill="#cfe3bf" opacity="0.85"/>
<polygon points="18.2,46.5 16.9,48.6 14.6,48.0 12.6,46.5 14.5,44.5 16.4,45.1" fill="#cfe3bf" opacity="0.85"/>
<polygon points="36.9,9.0 35.8,10.7 33.0,12.1 32.2,9.0 32.8,6.8 35.3,5.5" fill="#cfe3bf" opacity="0.85"/>
<polygon points="91.8,55.5 91.2,56.5 89.7,57.1 88.6,55.5 89.5,54.0 90.9,54.3" fill="#cfe3bf" opacity="0.85"/>
<polygon points="43.1,24.5 42.3,27.6 38.9,28.3 36.0,24.5 38.8,21.3 42.4,20.9" fill="#cfe3bf" opacity="0.85"/>
<polygon points="75.5,23.3 74.1,24.5 73.0,24.2 71.7,23.3 73.1,22.3 74.2,22.0" fill="#cfe3bf" opacity="0.85"/>
<polygon points="11.4,40.0 10.4,42.0 7.4,42.5 6.9,40.0 7.7,36.8 10.6,37.6" fill="#cfe3bf" opacity="0.85"/>
<polygon points="76.8,44.4 73.0,47.9 70.3,47.1 69.1,44.4 70.2,40.4 72.8,41.9" fill="#cfe3bf" opacity="0.85"/>
<polygon points="97.6,8.4 95.3,13.9 91.5,11.7 87.3,8.4 91.9,5.8 95.9,4.3" fill="#cfe3bf" opacity="0.85"/>
<polygon points="39.0,4.9 37.0,7.7 33.6,7.9 32.2,4.9 33.6,2.2 37.0,2.9" fill="#cfe3bf" opacity="0.85"/>
<polygon points="25.7,18.7 24.6,20.2 22.9,20.2 22.4,18.7 23.0,17.3 24.9,17.7" fill="#cfe3bf" opacity="0.85"/>
<polygon points="74.0,48.6 72.7,50.3 70.6,50.0 70.3,48.6 70.6,47.0 73.3,46.4" fill="#cfe3bf" opacity="0.85"/>
<polygon points="67.6,40.7 66.8,42.8 63.9,41.9 62.7,40.7 64.2,39.4 66.8,39.2" fill="#cfe3bf" opacity="0.85"/>
<polygon points="85.9,52.5 85.4,54.3 83.5,54.3 82.7,52.5 83.8,50.5 85.8,51.2" fill="#cfe3bf" opacity="0.85"/>
<polygon points="39.1,54.6 38.3,56.8 36.2,55.9 34.8,54.6 36.2,52.3 37.9,52.6" fill="#cfe3bf" opacity="0.85"/>
<polygon points="29.9,27.3 27.5,30.9 23.5,31.6 22.2,27.3 22.6,24.0 27.8,24.3" fill="#cfe3bf" opacity="0.85"/>
<polygon points="35.0,59.1 32.2,63.8 27.8,63.9 25.0,59.1 27.2,55.9 31.2,54.2" fill="#cfe3bf" opacity="0.85"/>
<polygon points="56.9,18.1 55.3,20.7 52.7,20.9 51.1,18.1 52.1,15.6 54.6,16.5" fill="#cfe3bf" opacity="0.85"/>
<polygon points="93.3,43.4 91.0,47.2 85.1,47.0 84.6,43.4 85.2,39.7 91.0,40.3" fill="#cfe3bf" opacity="0.85"/>
<polygon points="40.4,32.7 38.8,35.8 35.5,36.2 34.0,32.7 36.0,30.1 38.2,30.8" fill="#cfe3bf" opacity="0.85"/>
<polygon points="265.7,56.9 263.3,58.9 261.1,60.4 259.4,56.9 261.0,53.6 263.7,53.6" fill="#cfe3bf" opacity="0.85"/>
<polygon points="283.5,60.1 282.6,61.4 280.8,61.5 279.6,60.1 280.8,59.0 282.4,58.8" fill="#cfe3bf" opacity="0.85"/>
<polygon points="294.6,35.1 294.1,36.5 292.3,37.0 291.2,35.1 292.4,32.9 294.3,33.3" fill="#cfe3bf" opacity="0.85"/>
<polygon points="313.9,61.5 312.5,63.2 310.4,62.6 309.7,61.5 310.1,59.3 312.5,59.8" fill="#cfe3bf" opacity="0.85"/>
<polygon points="305.5,42.9 301.4,46.3 298.0,47.2 295.1,42.9 298.3,39.4 302.1,39.2" fill="#cfe3bf" opacity="0.85"/>
<polygon points="193.6,41.1 192.9,42.6 190.5,42.6 189.9,41.1 190.8,39.0 193.4,38.9" fill="#cfe3bf" opacity="0.85"/>
<polygon points="212.2,25.8 209.6,28.8 206.7,29.2 206.0,25.8 207.2,24.0 210.0,23.3" fill="#cfe3bf" opacity="0.85"/>
<polygon points="273.9,5.0 274.0,6.7 271.3,7.6 269.0,5.0 270.5,2.7 273.3,3.6" fill="#cfe3bf" opacity="0.85"/>
<polygon points="184.2,31.5 182.8,35.6 179.2,35.2 177.5,31.5 179.7,27.7 183.2,28.4" fill="#cfe3bf" opacity="0.85"/>
<polygon points="262.8,15.7 259.8,18.1 256.8,18.1 254.1,15.7 256.0,11.3 260.1,11.9" fill="#cfe3bf" opacity="0.85"/>
<polygon points="229.8,5.8 229.3,7.5 227.1,7.5 226.1,5.8 227.5,4.4 229.4,4.4" fill="#cfe3bf" opacity="0.85"/>
<polygon points="256.0,31.9 254.6,34.5 251.3,34.7 250.4,31.9 252.0,29.7 254.4,28.6" fill="#cfe3bf" opacity="0.85"/>
<polygon points="272.8,55.6 270.9,57.5 268.4,58.7 267.2,55.6 268.6,53.3 271.4,53.0" fill="#cfe3bf" opacity="0.85"/>
<polygon points="233.1,34.1 232.0,37.0 228.9,36.7 227.9,34.1 229.7,31.6 232.2,31.6" fill="#cfe3bf" opacity="0.85"/>
<polygon points="303.5,23.6 302.4,26.2 298.4,25.7 296.0,23.6 298.2,20.6 302.3,20.6" fill="#cfe3bf" opacity="0.85"/>
<polygon points="207.4,46.1 206.2,50.0 202.6,48.5 201.4,46.1 203.6,42.6 207.0,43.7" fill="#cfe3bf" opacity="0.85"/>
<polygon points="208.3,32.3 206.8,33.9 204.5,34.8 204.4,32.3 204.6,30.2 206.9,30.7" fill="#cfe3bf" opacity="0.85"/>
<polygon points="298.7,57.4 297.3,59.5 294.2,59.7 292.2,57.4 294.6,55.3 297.0,54.9" fill="#cfe3bf" opacity="0.85"/>
<polygon points="265.8,48.5 264.8,51.4 262.5,51.1 260.6,48.5 262.5,46.0 265.1,46.5" fill="#cfe3bf" opacity="0.85"/>
<polygon points="196.9,6.4 195.5,7.5 193.7,7.5 193.1,6.4 193.7,5.1 195.4,4.7" fill="#cfe3bf" opacity="0.85"/>
<polygon points="324.4,4.0 323.7,6.4 320.9,6.6 320.0,4.0 321.5,1.5 324.3,1.2" fill="#cfe3bf" opacity="0.85"/>
<polygon points="250.4,42.4 250.2,43.6 248.3,44.2 247.2,42.4 248.0,40.5 249.8,41.3" fill="#cfe3bf" opacity="0.85"/>
<polygon points="205.6,17.3 205.1,19.5 202.7,18.7 202.4,17.3 202.9,15.2 205.0,15.6" fill="#cfe3bf" opacity="0.85"/>
<polygon points="289.9,20.0 287.2,23.0 284.8,22.5 283.6,20.0 284.5,18.0 287.5,16.9" fill="#cfe3bf" opacity="0.85"/>
<polygon points="287.9,31.3 287.0,33.2 284.8,33.4 284.2,31.3 285.1,29.5 287.0,30.2" fill="#cfe3bf" opacity="0.85"/>
<polygon points="240.4,28.6 238.0,31.3 233.1,31.4 231.7,28.6 233.4,24.7 237.6,25.8" fill="#cfe3bf" opacity="0.85"/>
<polygon points="274.7,6.4 272.6,11.0 269.3,9.6 265.4,6.4 269.8,1.5 273.0,2.7" fill="#cfe3bf" opacity="0.85"/>
<polygon points="225.2,35.5 223.3,40.3 219.1,40.2 216.6,35.5 218.7,31.1 223.1,30.8" fill="#cfe3bf" opacity="0.85"/>
<polygon points="207.6,48.7 206.5,52.3 202.2,52.3 200.1,48.7 202.7,46.5 206.0,44.6" fill="#cfe3bf" opacity="0.85"/>
<polygon points="296.8,6.4 294.7,10.4 290.5,11.0 289.3,6.4 290.4,3.7 295.1,3.0" fill="#cfe3bf" opacity="0.85"/>
<polygon points="184.9,19.6 184.5,23.9 180.7,22.6 177.3,19.6 180.1,17.0 183.8,16.4" fill="#cfe3bf" opacity="0.85"/>
<polygon points="236.3,25.0 234.7,26.2 233.5,26.6 232.1,25.0 233.5,23.4 234.9,24.0" fill="#cfe3bf" opacity="0.85"/>
<polygon points="229.4,25.1 226.6,28.1 223.3,27.7 222.3,25.1 224.2,22.2 227.0,21.6" fill="#cfe3bf" opacity="0.85"/>
<polygon points="241.7,14.0 240.3,15.8 238.6,16.1 238.1,14.0 238.9,12.6 240.5,12.9" fill="#cfe3bf" opacity="0.85"/>
<polygon points="248.3,52.5 247.0,55.7 244.2,56.5 240.4,52.5 243.4,48.9 247.9,50.4" fill="#cfe3bf" opacity="0.85"/>
<polygon points="253.2,1.4 251.8,3.7 249.9,3.8 248.0,1.4 250.0,-0.7 251.6,-0.5" fill="#cfe3bf" opacity="0.85"/>
<polygon points="240.1,58.9 237.5,63.8 231.5,63.2 228.4,58.9 232.3,55.3 237.2,55.8" fill="#cfe3bf" opacity="0.85"/>
<polygon points="254.6,15.8 252.6,18.9 248.0,21.0 245.6,15.8 247.0,10.6 252.8,11.6" fill="#cfe3bf" opacity="0.85"/>
<polygon points="320.3,31.3 318.2,34.2 314.6,34.1 313.6,31.3 314.1,27.6 318.2,28.2" fill="#cfe3bf" opacity="0.85"/>
<polygon points="317.6,41.4 316.2,44.0 313.9,44.0 312.4,41.4 314.3,38.7 316.7,40.0" fill="#cfe3bf" opacity="0.85"/>
<polygon points="311.7,13.9 310.1,16.0 306.9,17.2 303.5,13.9 307.0,10.1 309.9,10.8" fill="#cfe3bf" opacity="0.85"/>
<polygon points="291.5,29.5 287.9,32.5 283.7,34.0 282.1,29.5 284.5,25.9 288.1,25.7" fill="#cfe3bf" opacity="0.85"/>
<polygon points="283.0,53.0 281.3,55.1 278.3,54.7 276.5,53.0 278.4,50.4 281.1,50.3" fill="#cfe3bf" opacity="0.85"/>
<polygon points="226.9,23.1 225.6,26.0 221.7,26.5 220.5,23.1 222.6,19.3 225.9,19.3" fill="#cfe3bf" opacity="0.85"/>
<polygon points="189.0,17.2 187.8,19.8 184.0,20.9 182.9,17.2 183.7,12.7 187.3,12.5" fill="#cfe3bf" opacity="0.85"/>
<polygon points="277.3,3.2 275.1,5.2 272.8,6.0 271.0,3.2 272.8,0.3 276.0,-0.3" fill="#cfe3bf" opacity="0.85"/>
<polygon points="255.3,49.8 253.4,52.6 248.1,54.1 245.7,49.8 247.9,44.7 252.8,46.4" fill="#cfe3bf" opacity="0.85"/>
<polygon points="203.9,11.0 203.2,13.7 200.8,13.2 198.9,11.0 200.4,8.2 203.2,9.2" fill="#cfe3bf" opacity="0.85"/>
<polygon points="244.0,0.5 242.6,3.0 239.8,2.9 239.3,0.5 239.9,-1.1 242.7,-0.8" fill="#cfe3bf" opacity="0.85"/>
<polygon points="323.2,45.6 322.3,47.0 320.6,46.5 319.9,45.6 320.6,44.0 322.3,44.0" fill="#cfe3bf" opacity="0.85"/>
<polygon points="316.6,42.7 313.9,46.5 310.6,45.5 308.9,42.7 311.5,40.5 314.2,38.8" fill="#cfe3bf" opacity="0.85"/>
<polygon points="249.0,37.5 247.0,39.9 244.2,39.2 243.4,37.5 244.6,34.6 246.6,34.9" fill="#cfe3bf" opacity="0.85"/>
<polygon points="241.6,30.7 240.5,32.7 237.9,32.4 235.0,30.7 237.1,29.1 240.5,28.8" fill="#cfe3bf" opacity="0.85"/>
<polygon points="262.2,27.7 259.4,32.3 255.8,31.4 254.3,27.7 255.1,24.3 260.1,25.4" fill="#cfe3bf" opacity="0.85"/>
<polygon points="301.5,26.3 299.9,28.8 296.4,29.8 295.2,26.3 296.5,23.0 300.5,21.8" fill="#cfe3bf" opacity="0.85"/>
<polygon points="327.1,21.9 325.5,25.2 321.5,24.2 319.5,21.9 321.8,19.0 325.6,19.6" fill="#cfe3bf" opacity="0.85"/>
<polygon points="279.8,4.7 277.2,8.4 274.2,6.9 273.2,4.7 274.1,2.0 277.8,0.8" fill="#cfe3bf" opacity="0.85"/>
<polygon points="301.3,39.2 300.7,40.5 299.6,40.9 298.5,39.2 299.3,38.2 300.8,38.2" fill="#cfe3bf" opacity="0.85"/>
<polygon points="241.6,31.4 240.5,34.1 236.1,34.9 234.1,31.4 236.1,27.0 240.4,28.5" fill="#cfe3bf" opacity="0.85"/>
<polygon points="307.6,6.9 306.9,9.0 304.1,8.1 302.9,6.9 304.5,4.6 306.7,5.6" fill="#cfe3bf" opacity="0.85"/>
<polygon points="242.9,16.7 242.2,19.1 239.3,18.5 237.9,16.7 239.6,13.6 243.0,13.7" fill="#cfe3bf" opacity="0.85"/>
<polygon points="198.3,46.3 197.8,48.1 195.9,47.8 195.3,46.3 196.2,45.1 198.1,45.2" fill="#cfe3bf" opacity="0.85"/>
<polygon points="253.4,31.0 251.9,34.1 249.1,34.4 248.1,31.0 248.9,29.1 251.8,28.3" fill="#cfe3bf" opacity="0.85"/>
<polygon points="307.3,9.2 305.5,12.8 301.5,13.0 298.6,9.2 301.8,6.5 304.8,6.8" fill="#cfe3bf" opacity="0.85"/>
<polygon points="214.9,30.2 214.6,34.8 210.3,35.0 206.8,30.2 210.0,26.0 214.9,26.8" fill="#cfe3bf" opacity="0.85"/>
<polygon points="185.3,61.7 183.0,66.3 178.1,66.1 174.8,61.7 178.9,58.4 183.3,56.8" fill="#cfe3bf" opacity="0.85"/>
<polygon points="179.2,36.8 177.3,38.8 174.0,39.4 173.9,36.8 174.2,34.1 177.0,34.8" fill="#cfe3bf" opacity="0.85"/>
<polygon points="263.1,27.1 262.5,30.6 259.9,30.4 257.5,27.1 259.7,23.8 262.6,23.5" fill="#cfe3bf" opacity="0.85"/>
<polygon points="196.2,24.1 195.7,25.8 193.8,25.6 193.2,24.1 193.8,22.1 195.5,23.0" fill="#cfe3bf" opacity="0.85"/>
<polygon points="210.9,8.5 207.8,10.6 205.5,10.6 203.6,8.5 205.6,6.1 208.3,6.1" fill="#cfe3bf" opacity="0.85"/>
<polygon points="274.0,60.8 273.0,64.0 268.8,62.9 266.5,60.8 269.5,57.9 272.4,58.9" fill="#cfe3bf" opacity="0.85"/>
<polygon points="195.0,52.9 194.3,54.1 192.8,54.5 191.7,52.9 192.9,51.8 194.5,51.8" fill="#cfe3bf" opacity="0.85"/>
<polygon points="216.8,44.2 214.5,46.1 212.1,47.6 211.1,44.2 212.3,41.1 214.6,42.3" fill="#cfe3bf" opacity="0.85"/>
<polygon points="213.3,25.6 211.9,29.9 207.6,28.5 206.3,25.6 207.7,21.9 211.9,21.8" fill="#cfe3bf" opacity="0.85"/>
<polygon points="325.6,32.2 325.1,37.5 319.6,35.3 318.0,32.2 320.3,28.4 325.2,28.6" fill="#cfe3bf" opacity="0.85"/>
<polygon points="178.3,21.4 178.3,22.6 176.6,22.7 175.9,21.4 176.3,19.7 178.1,20.4" fill="#cfe3bf" opacity="0.85"/>
<polygon points="328.0,57.3 327.5,59.8 324.7,59.4 322.8,57.3 324.8,54.1 327.5,55.1" fill="#cfe3bf" opacity="0.85"/>
<polygon points="186.3,0.1 184.6,1.9 181.0,2.9 179.7,0.1 181.7,-1.8 184.2,-2.2" fill="#cfe3bf" opacity="0.85"/>
<polygon points="331.9,11.9 330.0,15.3 326.2,14.4 325.5,11.9 327.1,8.0 331.0,8.1" fill="#cfe3bf" opacity="0.85"/>
<polygon points="328.7,4.0 327.5,6.2 322.7,6.9 322.6,4.0 322.7,0.8 327.4,1.9" fill="#cfe3bf" opacity="0.85"/>
<polygon points="275.1,51.7 274.2,53.2 272.5,53.1 272.3,51.7 272.6,50.0 274.8,50.2" fill="#cfe3bf" opacity="0.85"/>
<polygon points="316.4,46.4 315.0,47.6 313.1,48.2 312.4,46.4 313.1,44.0 314.9,44.2" fill="#cfe3bf" opacity="0.85"/>
<polygon points="224.4,39.6 222.8,42.9 219.6,42.5 217.2,39.6 218.7,37.3 222.2,37.0" fill="#cfe3bf" opacity="0.85"/>
<polygon points="310.5,11.7 308.7,13.5 305.6,13.6 304.9,11.7 305.5,10.2 308.5,9.1" fill="#cfe3bf" opacity="0.85"/>
<polygon points="193.7,6.7 191.9,10.4 188.9,9.4 187.6,6.7 189.3,3.9 192.1,4.7" fill="#cfe3bf" opacity="0.85"/>
<polygon points="253.3,38.1 252.6,40.0 251.0,39.7 249.5,38.1 250.6,35.9 253.1,36.2" fill="#cfe3bf" opacity="0.85"/>
<polygon points="207.9,2.5 205.1,4.8 202.6,6.2 199.0,2.5 202.5,-1.8 205.3,-0.1" fill="#cfe3bf" opacity="0.85"/>
<polygon points="335.7,47.6 334.1,52.9 329.2,51.8 326.1,47.6 328.4,44.6 332.6,45.1" fill="#cfe3bf" opacity="0.85"/>
<polygon points="250.0,46.0 248.7,48.9 244.7,49.3 244.0,46.0 244.6,43.8 248.5,42.8" fill="#cfe3bf" opacity="0.85"/>
<polygon points="192.5,39.6 192.2,41.2 190.5,41.3 190.0,39.6 190.4,37.8 191.9,37.9" fill="#cfe3bf" opacity="0.85"/>
<polygon points="300.8,11.9 298.3,14.6 293.8,15.7 291.5,11.9 293.8,8.0 298.4,9.0" fill="#cfe3bf" opacity="0.85"/>
<polygon points="263.2,56.4 262.0,57.6 260.6,57.3 260.0,56.4 260.2,54.9 261.9,55.1" fill="#cfe3bf" opacity="0.85"/>
<polygon points="215.5,2.4 214.8,3.8 213.0,3.5 211.8,2.4 212.8,1.4 214.6,0.6" fill="#cfe3bf" opacity="0.85"/>
<polygon points="196.1,46.0 195.3,46.9 193.5,47.0 192.9,46.0 193.8,44.8 195.2,44.7" fill="#cfe3bf" opacity="0.85"/>
<polygon points="324.8,41.1 324.8,42.5 322.8,43.2 322.2,41.1 322.5,39.1 324.2,39.0" fill="#cfe3bf" opacity="0.85"/>
<polygon points="292.9,22.6 291.8,25.9 287.4,27.2 286.9,22.6 287.3,20.0 292.3,19.6" fill="#cfe3bf" opacity="0.85"/>
<polygon points="332.9,33.0 330.4,37.0 326.2,36.6 322.9,33.0 326.0,28.2 330.5,28.2" fill="#cfe3bf" opacity="0.85"/>
<polygon points="321.3,60.3 319.6,62.2 318.0,61.7 316.6,60.3 318.0,59.0 319.6,59.1" fill="#cfe3bf" opacity="0.85"/>
<polygon points="209.5,8.7 208.6,13.6 202.6,13.7 200.5,8.7 203.2,3.5 207.6,4.3" fill="#cfe3bf" opacity="0.85"/>
<polygon points="253.9,23.4 253.3,25.5 251.3,24.9 249.4,23.4 250.9,20.7 253.7,21.6" fill="#cfe3bf" opacity="0.85"/>
<polygon points="280.9,12.4 277.2,14.9 272.8,16.5 270.1,12.4 273.3,8.4 277.4,8.3" fill="#cfe3bf" opacity="0.85"/>
<polygon points="297.2,4.6 293.6,6.6 290.0,8.7 289.2,4.6 290.1,0.5 293.8,1.5" fill="#cfe3bf" opacity="0.85"/>
<polygon points="323.7,53.4 322.4,55.7 319.6,54.9 319.7,53.4 319.7,51.4 322.5,50.8" fill="#cfe3bf" opacity="0.85"/>
<polygon points="180.0,59.1 179.6,60.6 177.6,60.8 175.8,59.1 177.7,57.0 179.1,57.1" fill="#cfe3bf" opacity="0.85"/>
<polygon points="253.9,10.5 253.2,12.1 249.9,12.6 248.4,10.5 250.1,7.7 252.8,8.3" fill="#cfe3bf" opacity="0.85"/>
<polygon points="248.8,2.9 247.4,4.8 245.4,4.1 244.7,2.9 245.7,1.6 247.2,1.7" fill="#cfe3bf" opacity="0.85"/>
<polygon points="198.7,44.0 198.5,45.7 196.1,45.3 195.1,44.0 196.1,42.4 198.2,42.4" fill="#cfe3bf" opacity="0.85"/>
<polygon points="181.7,11.4 180.1,16.7 175.9,14.7 171.6,11.4 175.6,6.5 180.7,6.7" fill="#cfe3bf" opacity="0.85"/>
<polygon points="241.7,47.6 239.9,49.5 237.2,49.4 235.5,47.6 237.3,45.5 240.4,44.8" fill="#cfe3bf" opacity="0.85"/>
<polygon points="335.2,47.7 333.4,50.9 330.6,49.4 328.4,47.7 329.8,44.6 332.8,45.0" fill="#cfe3bf" opacity="0.85"/>
<polygon points="195.6,13.9 195.5,15.8 193.2,16.4 191.5,13.9 192.8,11.7 195.0,12.5" fill="#cfe3bf" opacity="0.85"/>
<polygon points="188.3,57.8 186.3,59.1 183.8,59.5 183.7,57.8 184.4,56.2 186.2,55.2" fill="#cfe3bf" opacity="0.85"/>
<polygon points="316.3,4.8 314.4,6.4 311.6,6.4 309.7,4.8 311.6,2.2 314.6,2.5" fill="#cfe3bf" opacity="0.85"/>
<polygon points="241.7,34.6 241.1,36.2 239.3,35.8 238.7,34.6 239.3,32.7 241.5,32.3" fill="#cfe3bf" opacity="0.85"/>
<polygon points="184.9,40.9 184.5,42.5 182.8,42.9 181.1,40.9 182.7,39.0 184.8,39.2" fill="#cfe3bf" opacity="0.85"/>
<polygon points="273.7,8.5 272.2,11.2 269.6,10.2 267.8,8.5 269.2,7.2 272.2,6.9" fill="#cfe3bf" opacity="0.85"/>
<polygon points="290.2,0.5 289.2,4.1 285.8,3.6 284.0,0.5 286.0,-1.9 288.6,-2.4" fill="#cfe3bf" opacity="0.85"/>
<polygon points="323.7,2.1 322.3,5.0 318.2,5.0 315.8,2.1 319.0,0.2 322.3,-1.7" fill="#cfe3bf" opacity="0.85"/>
<polygon points="239.2,48.7 237.5,50.8 234.0,50.5 232.8,48.7 234.3,46.3 237.7,47.0" fill="#cfe3bf" opacity="0.85"/>
<polygon points="229.3,22.9 226.3,26.9 223.1,25.6 219.8,22.9 223.1,20.8 226.7,19.3" fill="#cfe3bf" opacity="0.85"/>
<polygon points="327.1,39.9 326.8,42.2 324.1,42.7 321.5,39.9 323.6,37.7 326.5,38.0" fill="#cfe3bf" opacity="0.85"/>
<polygon points="284.9,46.5 282.8,50.6 277.6,49.9 274.9,46.5 277.4,41.5 281.8,43.0" fill="#cfe3bf" opacity="0.85"/>
<polygon points="272.0,5.9 269.7,9.4 266.3,10.4 263.3,5.9 265.6,1.5 269.9,1.9" fill="#cfe3bf" opacity="0.85"/>
<polygon points="308.1,47.9 307.7,50.4 304.8,50.7 303.0,47.9 304.6,45.6 306.9,45.4" fill="#cfe3bf" opacity="0.85"/>
<polygon points="180.9,19.3 180.4,20.8 179.1,21.1 178.7,19.3 178.9,17.7 180.5,17.7" fill="#cfe3bf" opacity="0.85"/>
<polygon points="183.6,57.8 183.4,59.7 179.0,60.5 177.8,57.8 179.9,54.7 182.6,54.8" fill="#cfe3bf" opacity="0.85"/>
<polygon points="252.7,53.4 252.1,55.0 250.1,54.6 248.7,53.4 249.9,51.7 252.0,51.7" fill="#cfe3bf" opacity="0.85"/>
<polygon points="227.1,61.9 225.7,64.2 222.6,64.7 220.1,61.9 222.4,59.9 226.0,57.5" fill="#cfe3bf" opacity="0.85"/>
<polygon points="212.9,51.1 210.9,54.8 206.4,54.0 202.3,51.1 206.7,46.3 211.6,46.7" fill="#cfe3bf" opacity="0.85"/>
<polygon points="334.6,56.2 332.3,60.2 329.8,60.0 327.0,56.2 329.7,54.0 332.7,52.3" fill="#cfe3bf" opacity="0.85"/>
<polygon points="275.9,4.0 274.6,7.2 272.2,6.9 269.3,4.0 271.4,1.2 274.4,2.2" fill="#cfe3bf" opacity="0.85"/>
<polygon points="229.8,20.6 226.5,22.7 223.4,23.5 222.0,20.6 222.6,18.2 226.4,16.5" fill="#cfe3bf" opacity="0.85"/>
<polygon points="290.8,37.7 289.5,41.2 286.5,40.7 284.2,37.7 286.1,33.7 290.6,33.7" fill="#cfe3bf" opacity="0.85"/>
<polygon points="326.4,43.9 325.4,46.4 322.2,46.8 320.5,43.9 322.4,41.1 326.0,41.1" fill="#cfe3bf" opacity="0.85"/>
<polygon points="266.7,31.1 263.9,34.3 260.8,33.4 260.5,31.1 260.9,29.4 263.8,27.6" fill="#cfe3bf" opacity="0.85"/>
<polygon points="253.9,30.9 252.3,34.6 248.3,33.3 245.5,30.9 249.0,28.2 252.4,27.4" fill="#cfe3bf" opacity="0.85"/>
<polygon points="180.6,31.4 179.0,36.0 174.4,36.4 173.0,31.4 173.2,28.3 178.3,26.9" fill="#cfe3bf" opacity="0.85"/>
<polygon points="295.9,55.2 294.5,57.7 292.6,57.0 291.0,55.2 292.0,53.3 294.4,53.8" fill="#cfe3bf" opacity="0.85"/>
<polygon points="280.5,48.1 277.7,51.6 272.2,52.9 269.2,48.1 272.4,45.7 276.5,43.1" fill="#cfe3bf" opacity="0.85"/>
<polygon points="251.0,17.9 249.9,20.4 247.4,19.8 246.8,17.9 248.1,16.1 250.2,15.3" fill="#cfe3bf" opacity="0.85"/>
<polygon points="297.3,5.6 296.7,7.6 295.1,7.7 294.2,5.6 294.5,4.1 296.6,3.7" fill="#cfe3bf" opacity="0.85"/>
<polygon points="221.3,45.2 221.3,48.2 218.2,47.6 217.8,45.2 218.5,43.0 220.9,43.5" fill="#cfe3bf" opacity="0.85"/>
<polygon points="291.0,53.4 289.6,55.0 287.9,55.1 287.5,53.4 287.8,51.8 289.7,51.4" fill="#cfe3bf" opacity="0.85"/>
<polygon points="210.5,50.0 210.3,53.6 205.5,54.2 201.4,50.0 204.7,45.7 209.1,44.7" fill="#cfe3bf" opacity="0.85"/>
<polygon points="217.6,7.9 215.2,10.3 211.4,11.0 209.5,7.9 210.9,4.2 215.4,4.8" fill="#cfe3bf" opacity="0.85"/>
<polygon points="188.0,5.5 186.0,8.5 181.0,10.1 179.5,5.5 180.8,1.5 186.1,2.1" fill="#cfe3bf" opacity="0.85"/>
<polygon points="308.4,11.8 307.9,13.7 305.6,13.7 305.0,11.8 306.0,9.9 307.4,10.0" fill="#cfe3bf" opacity="0.85"/>
<polygon points="224.5,21.5 224.0,24.0 220.6,23.9 218.8,21.5 220.0,18.1 223.9,19.0" fill="#cfe3bf" opacity="0.85"/>
<polygon points="274.6,37.4 273.3,38.7 271.7,39.4 270.5,37.4 271.6,35.4 273.7,36.4" fill="#cfe3bf" opacity="0.85"/>
<polygon points="326.6,34.3 326.8,38.6 322.6,38.2 319.1,34.3 321.3,31.3 326.3,30.6" fill="#cfe3bf" opacity="0.85"/>
<polygon points="263.4,4.3 260.3,7.4 257.6,6.4 256.0,4.3 257.7,1.1 261.2,1.8" fill="#cfe3bf" opacity="0.85"/>
<polygon points="215.5,46.2 214.4,49.2 211.1,49.7 208.8,46.2 210.6,43.9 214.0,44.5" fill="#cfe3bf" opacity="0.85"/>
<polygon points="190.3,38.2 188.4,41.1 185.5,40.1 182.9,38.2 184.8,36.2 188.3,34.8" fill="#cfe3bf" opacity="0.85"/>
<polygon points="293.9,48.6 291.8,51.0 289.1,51.0 287.9,48.6 288.0,44.9 291.7,45.1" fill="#cfe3bf" opacity="0.85"/>
<polygon points="246.1,9.5 245.1,13.2 240.6,12.6 238.2,9.5 241.1,5.6 245.2,6.9" fill="#cfe3bf" opacity="0.85"/>
<polygon points="258.2,13.6 254.4,17.6 249.8,18.2 249.7,13.6 250.9,10.3 255.0,9.4" fill="#cfe3bf" opacity="0.85"/>
<polygon points="227.7,12.1 225.7,16.3 221.0,16.5 220.2,12.1 221.5,9.5 225.2,8.3" fill="#cfe3bf" opacity="0.85"/>
<polygon points="226.0,58.0 225.0,61.0 219.6,63.0 217.1,58.0 219.0,53.1 224.6,53.2" fill="#cfe3bf" opacity="0.85"/>
<polygon points="187.5,55.8 186.9,57.4 183.5,58.7 182.4,55.8 183.9,53.5 186.8,52.8" fill="#cfe3bf" opacity="0.85"/>
<polygon points="289.4,7.3 289.0,8.2 287.1,8.8 286.6,7.3 287.1,6.2 288.6,6.3" fill="#cfe3bf" opacity="0.85"/>
<polygon points="197.1,11.9 194.5,14.9 189.9,16.0 188.3,11.9 190.4,8.0 195.2,9.3" fill="#cfe3bf" opacity="0.85"/>
<polygon points="311.9,52.6 308.1,55.9 302.9,57.2 300.1,52.6 303.8,47.0 307.5,47.2" fill="#cfe3bf" opacity="0.85"/>
<polygon points="334.9,30.0 331.7,33.8 326.9,34.1 326.0,30.0 327.1,27.6 331.0,27.7" fill="#cfe3bf" opacity="0.85"/>
<polygon points="302.6,19.6 299.3,22.7 294.0,24.0 291.1,19.6 294.1,16.0 298.8,14.7" fill="#cfe3bf" opacity="0.85"/>
<polygon points="245.1,56.3 242.5,58.4 240.5,57.8 239.3,56.3 240.4,54.8 243.3,54.3" fill="#cfe3bf" opacity="0.85"/>
<polygon points="230.2,9.2 229.3,11.6 224.6,12.1 222.6,9.2 224.2,5.2 228.2,5.9" fill="#cfe3bf" opacity="0.85"/>
<polygon points="308.3,26.5 306.9,27.9 305.2,28.2 304.9,26.5 305.4,25.6 307.2,25.6" fill="#cfe3bf" opacity="0.85"/>
<polygon points="181.1,20.2 177.5,22.9 174.8,24.6 173.6,20.2 173.8,17.3 178.5,17.9" fill="#cfe3bf" opacity="0.85"/>
<polygon points="311.7,33.7 308.8,38.5 304.8,38.5 302.9,33.7 304.7,29.8 308.8,30.0" fill="#cfe3bf" opacity="0.85"/>
<polygon points="200.0,2.2 199.1,4.9 196.0,5.2 194.3,2.2 195.4,0.1 199.1,0.1" fill="#cfe3bf" opacity="0.85"/>
<polygon points="195.0,31.1 193.4,34.1 189.3,34.5 187.5,31.1 189.0,26.5 193.7,27.7" fill="#cfe3bf" opacity="0.85"/>
<polygon points="301.0,1.1 298.6,3.6 294.1,5.1 291.0,1.1 293.9,-2.6 299.1,-3.2" fill="#cfe3bf" opacity="0.85"/>
<polygon points="326.5,34.4 325.3,36.4 321.5,37.4 321.4,34.4 321.6,32.5 324.6,31.9" fill="#cfe3bf" opacity="0.85"/>
<polygon points="182.9,23.5 179.9,25.5 177.1,25.3 175.9,23.5 177.0,20.1 180.2,20.4" fill="#cfe3bf" opacity="0.85"/>
<polygon points="279.7,13.9 278.7,17.0 275.1,18.0 272.6,13.9 275.4,9.7 279.0,10.3" fill="#cfe3bf" opacity="0.85"/>
<polygon points="270.9,28.2 269.1,30.1 267.5,30.2 266.6,28.2 267.7,26.6 269.1,26.4" fill="#cfe3bf" opacity="0.85"/>
<polygon points="234.8,40.6 234.4,43.2 230.1,44.6 229.4,40.6 230.6,36.6 233.7,37.5" fill="#cfe3bf" opacity="0.85"/>
<polygon points="284.6,33.7 282.7,36.3 279.2,37.2 279.0,33.7 279.7,31.4 282.8,31.2" fill="#cfe3bf" opacity="0.85"/>
<polygon points="261.6,27.2 260.2,29.2 258.6,29.0 257.0,27.2 258.6,25.5 260.7,25.5" fill="#cfe3bf" opacity="0.85"/>
<polygon points="259.0,13.6 258.1,15.6 254.3,15.4 253.8,13.6 254.7,11.6 257.4,10.8" fill="#cfe3bf" opacity="0.85"/>
<polygon points="257.6,31.5 256.4,34.5 253.7,33.7 251.5,31.5 253.2,29.6 256.4,28.6" fill="#cfe3bf" opacity="0.85"/>
<polygon points="286.9,37.7 283.9,41.1 279.9,41.5 277.4,37.7 279.7,33.7 283.3,35.6" fill="#cfe3bf" opacity="0.85"/>
<polygon points="267.1,49.3 264.3,52.4 261.5,51.0 260.3,49.3 261.4,46.2 264.0,47.4" fill="#cfe3bf" opacity="0.85"/>
<polygon points="240.7,6.8 238.9,9.8 236.1,9.3 235.6,6.8 236.2,4.4 239.4,5.2" fill="#cfe3bf" opacity="0.85"/>
<polygon points="322.9,41.5 322.0,45.3 316.6,46.1 314.6,41.5 316.5,37.6 321.4,38.0" fill="#cfe3bf" opacity="0.85"/>
<polygon points="324.4,45.4 323.0,47.7 319.9,47.4 318.2,45.4 319.8,43.5 322.9,43.3" fill="#cfe3bf" opacity="0.85"/>
<polygon points="334.7,51.5 332.1,55.2 327.9,53.7 326.8,51.5 328.9,47.6 331.8,48.6" fill="#cfe3bf" opacity="0.85"/>
<polygon points="263.9,16.4 262.0,18.8 260.0,17.9 259.1,16.4 260.0,13.8 262.3,14.9" fill="#cfe3bf" opacity="0.85"/>
<polygon points="257.6,5.5 256.7,6.7 255.3,6.4 254.2,5.5 255.3,3.8 257.0,3.8" fill="#cfe3bf" opacity="0.85"/>
<polygon points="307.3,0.8 304.6,4.6 301.0,3.9 299.9,0.8 300.9,-3.1 305.2,-3.1" fill="#cfe3bf" opacity="0.85"/>
<polygon points="314.8,55.0 313.2,57.4 310.5,57.0 309.2,55.0 310.5,52.9 312.4,52.3" fill="#cfe3bf" opacity="0.85"/>
<polygon points="311.0,34.3 309.3,36.2 305.8,37.0 304.1,34.3 306.2,31.6 309.0,31.2" fill="#cfe3bf" opacity="0.85"/>
<polygon points="270.6,34.1 270.0,35.2 268.3,35.9 267.1,34.1 268.4,32.3 270.1,32.5" fill="#cfe3bf" opacity="0.85"/>
<polygon points="283.2,39.6 279.1,45.1 275.4,43.2 274.1,39.6 274.7,34.1 280.1,36.3" fill="#cfe3bf" opacity="0.85"/>
<polygon points="306.9,51.0 305.6,54.0 300.5,55.2 299.5,51.0 300.5,47.5 306.1,47.1" fill="#cfe3bf" opacity="0.85"/>
<polygon points="255.8,36.4 254.6,37.8 252.9,37.7 251.4,36.4 252.8,34.7 254.3,34.4" fill="#cfe3bf" opacity="0.85"/>
<polygon points="282.8,50.0 279.9,52.6 277.1,53.5 274.5,50.0 276.5,47.6 280.8,46.9" fill="#cfe3bf" opacity="0.85"/>
<polygon points="309.8,7.2 307.8,10.2 305.0,9.8 304.6,7.2 305.4,3.7 308.1,5.2" fill="#cfe3bf" opacity="0.85"/>
<polygon points="221.6,53.4 220.7,55.8 216.8,57.7 213.4,53.4 216.5,49.4 219.9,49.3" fill="#cfe3bf" opacity="0.85"/>
<polygon points="313.6,7.7 313.4,10.2 309.0,10.5 308.9,7.7 309.1,5.6 313.3,5.3" fill="#cfe3bf" opacity="0.85"/>
<polygon points="271.1,0.0 270.5,2.2 267.6,2.9 265.8,0.0 267.5,-1.8 270.7,-2.4" fill="#cfe3bf" opacity="0.85"/>
<polygon points="295.8,52.8 294.7,55.3 292.1,55.1 291.4,52.8 292.1,51.5 294.4,51.0" fill="#cfe3bf" opacity="0.85"/>
<polygon points="294.2,7.0 293.5,8.5 291.6,8.2 290.2,7.0 291.5,5.3 293.6,5.2" fill="#cfe3bf" opacity="0.85"/>
<polygon points="186.2,22.0 185.2,24.0 183.0,24.1 182.0,22.0 182.9,20.7 184.6,20.4" fill="#cfe3bf" opacity="0.85"/>
<polygon points="279.4,7.7 277.0,9.3 274.7,9.8 274.1,7.7 274.5,6.0 277.1,5.1" fill="#cfe3bf" opacity="0.85"/>
<polygon points="204.7,42.0 201.6,44.4 198.2,44.6 196.3,42.0 198.0,38.4 201.4,38.2" fill="#cfe3bf" opacity="0.85"/>
<polygon points="194.0,3.9 192.9,6.8 190.0,7.6 188.3,3.9 190.5,1.7 193.4,0.1" fill="#cfe3bf" opacity="0.85"/>
<polygon points="187.8,36.7 185.8,39.5 182.5,40.4 181.7,36.7 182.6,33.5 186.4,32.8" fill="#cfe3bf" opacity="0.85"/>
<polygon points="242.0,48.3 241.6,51.7 237.4,50.3 235.1,48.3 238.0,44.3 241.6,45.8" fill="#cfe3bf" opacity="0.85"/>
<polygon points="251.7,55.2 249.7,57.9 246.5,57.6 246.1,55.2 247.4,53.0 249.4,52.0" fill="#cfe3bf" opacity="0.85"/>
<polygon points="273.0,27.4 272.2,28.9 270.8,28.6 270.7,27.4 271.1,26.2 272.4,26.4" fill="#cfe3bf" opacity="0.85"/>
<polygon points="273.8,37.1 272.2,38.7 270.7,38.7 270.4,37.1 270.5,35.7 272.7,35.4" fill="#cfe3bf" opacity="0.85"/>
<polygon points="318.2,8.6 316.9,12.7 312.7,11.4 312.3,8.6 313.7,5.1 316.2,5.1" fill="#cfe3bf" opacity="0.85"/>
<polygon points="297.9,15.8 297.5,17.7 295.0,17.6 293.6,15.8 295.6,13.5 297.6,14.2" fill="#cfe3bf" opacity="0.85"/>
<polygon points="243.6,0.5 242.0,2.7 239.6,2.7 239.1,0.5 239.8,-1.2 241.9,-1.9" fill="#cfe3bf" opacity="0.85"/>
<polygon points="268.8,50.7 267.4,52.1 265.7,52.4 265.1,50.7 266.0,48.4 267.8,48.4" fill="#cfe3bf" opacity="0.85"/>
<polygon points="199.8,29.6 195.9,33.6 191.3,32.7 190.5,29.6 192.2,25.6 196.2,27.1" fill="#cfe3bf" opacity="0.85"/>
<polygon points="267.4,38.4 265.7,41.2 263.4,41.1 260.5,38.4 262.3,36.3 266.0,36.3" fill="#cfe3bf" opacity="0.85"/>
<polygon points="247.5,32.3 246.4,35.8 242.2,36.8 240.3,32.3 241.9,30.1 245.3,28.8" fill="#cfe3bf" opacity="0.85"/>
<polygon points="177.9,59.4 177.4,62.8 172.8,62.8 171.1,59.4 173.0,55.6 177.8,55.8" fill="#cfe3bf" opacity="0.85"/>
<polygon points="306.2,33.7 304.6,36.1 300.7,36.7 299.2,33.7 301.2,31.6 305.2,30.9" fill="#cfe3bf" opacity="0.85"/>
<polygon points="232.7,20.0 230.0,24.5 226.0,23.6 225.2,20.0 226.3,16.3 230.5,15.7" fill="#cfe3bf" opacity="0.85"/>
<polygon points="267.6,39.7 265.8,42.8 262.0,43.3 259.2,39.7 262.1,35.0 266.5,35.2" fill="#cfe3bf" opacity="0.85"/>
<polygon points="287.5,16.7 287.1,19.7 284.4,19.3 283.7,16.7 284.5,14.5 286.6,15.1" fill="#cfe3bf" opacity="0.85"/>
<polygon points="185.8,2.4 185.2,5.0 183.1,3.9 181.6,2.4 182.8,0.5 185.3,0.6" fill="#cfe3bf" opacity="0.85"/>
<polygon points="186.3,18.9 185.7,21.1 183.7,21.1 183.1,18.9 183.6,16.1 186.3,17.4" fill="#cfe3bf" opacity="0.85"/>
<polygon points="305.7,59.0 304.1,61.3 300.9,62.3 300.1,59.0 300.6,56.4 303.8,55.2" fill="#cfe3bf" opacity="0.85"/>
<polygon points="302.2,15.0 300.3,18.8 296.3,17.3 295.6,15.0 297.0,12.0 300.3,11.5" fill="#cfe3bf" opacity="0.85"/>
<polygon points="299.5,51.7 296.7,55.6 292.1,54.3 288.1,51.7 291.8,46.6 296.6,47.3" fill="#cfe3bf" opacity="0.85"/>
<polygon points="330.2,49.5 328.4,54.0 324.1,52.2 323.4,49.5 324.3,45.8 328.6,45.7" fill="#cfe3bf" opacity="0.85"/>
<polygon points="192.4,12.7 191.6,15.6 187.3,16.2 185.6,12.7 187.7,9.4 191.7,10.2" fill="#cfe3bf" opacity="0.85"/>
<polygon points="265.2,19.5 263.6,23.1 260.6,23.0 260.5,19.5 261.0,16.4 264.0,16.5" fill="#cfe3bf" opacity="0.85"/>
<polygon points="334.7,31.0 334.0,34.1 329.7,33.2 328.7,31.0 330.2,27.0 334.1,27.7" fill="#cfe3bf" opacity="0.85"/>
<polygon points="301.3,60.0 300.6,61.9 298.9,61.7 297.9,60.0 299.0,58.2 300.6,58.3" fill="#cfe3bf" opacity="0.85"/>
<polygon points="309.7,60.6 309.5,62.1 307.1,62.2 305.0,60.6 306.9,59.0 309.5,58.6" fill="#cfe3bf" opacity="0.85"/>
<polygon points="298.8,57.3 298.0,58.9 296.3,58.8 294.6,57.3 296.1,56.1 298.3,55.3" fill="#cfe3bf" opacity="0.85"/>
<polygon points="293.6,25.8 291.8,28.2 289.8,27.4 289.6,25.8 290.0,23.7 292.4,23.7" fill="#cfe3bf" opacity="0.85"/>
<polygon points="255.1,27.0 253.1,31.7 249.3,29.5 247.5,27.0 250.2,23.9 254.2,24.3" fill="#cfe3bf" opacity="0.85"/>
<polygon points="188.8,30.0 187.0,34.2 182.1,35.5 178.9,30.0 181.6,26.6 185.9,26.8" fill="#cfe3bf" opacity="0.85"/>
<polygon points="313.9,43.5 312.1,45.7 308.5,46.4 307.0,43.5 309.2,40.3 311.9,40.9" fill="#cfe3bf" opacity="0.85"/>
<polygon points="323.8,31.5 322.6,35.1 319.5,34.3 318.1,31.5 319.7,27.5 323.3,29.4" fill="#cfe3bf" opacity="0.85"/>
<polygon points="219.3,22.6 216.8,26.4 213.8,24.7 211.7,22.6 213.3,19.5 216.6,18.5" fill="#cfe3bf" opacity="0.85"/>
<polygon points="201.3,25.8 199.6,27.4 197.3,28.2 195.9,25.8 196.5,24.2 199.2,23.9" fill="#cfe3bf" opacity="0.85"/>
<polygon points="214.7,11.7 213.0,13.4 211.6,13.7 210.5,11.7 211.8,10.2 213.2,10.0" fill="#cfe3bf" opacity="0.85"/>
<polygon points="325.0,111.0 324.2,112.2 322.4,112.4 321.4,111.0 322.2,109.8 324.2,109.0" fill="#cfe3bf" opacity="0.85"/>
<polygon points="243.3,118.3 242.2,121.1 239.9,120.5 238.3,118.3 239.9,115.5 242.2,116.0" fill="#cfe3bf" opacity="0.85"/>
<polygon points="255.5,115.0 251.8,117.7 248.3,119.5 245.1,115.0 248.1,112.3 251.5,111.0" fill="#cfe3bf" opacity="0.85"/>
<polygon points="256.1,111.1 255.1,112.5 253.5,112.1 252.6,111.1 253.7,109.9 254.9,109.8" fill="#cfe3bf" opacity="0.85"/>
<polygon points="320.8,116.0 319.2,118.8 317.1,118.2 316.4,116.0 316.7,113.2 319.2,113.9" fill="#cfe3bf" opacity="0.85"/>
<polygon points="258.8,112.7 255.3,115.8 251.8,115.1 250.2,112.7 252.8,110.7 256.2,109.2" fill="#cfe3bf" opacity="0.85"/>
<polygon points="303.9,126.7 302.4,131.2 297.0,129.4 294.3,126.7 297.8,124.5 301.2,124.0" fill="#cfe3bf" opacity="0.85"/>
<polygon points="231.0,104.9 230.6,107.7 228.0,107.8 226.5,104.9 227.3,101.8 230.7,103.0" fill="#cfe3bf" opacity="0.85"/>
<polygon points="286.0,102.7 283.5,106.1 280.9,104.9 279.0,102.7 280.7,99.1 284.4,100.5" fill="#cfe3bf" opacity="0.85"/>
<polygon points="331.8,123.7 328.7,127.7 323.8,128.2 322.0,123.7 323.9,120.5 329.6,118.7" fill="#cfe3bf" opacity="0.85"/>
<polygon points="307.9,119.8 304.6,121.9 301.4,122.4 299.9,119.8 302.0,117.7 305.5,117.7" fill="#cfe3bf" opacity="0.85"/>
<polygon points="307.7,111.4 305.1,114.9 300.7,114.1 299.9,111.4 301.1,108.5 305.1,108.6" fill="#cfe3bf" opacity="0.85"/>
<polygon points="260.1,105.4 259.6,108.2 257.4,107.0 256.0,105.4 257.2,103.5 259.7,102.6" fill="#cfe3bf" opacity="0.85"/>
<polygon points="256.0,113.1 254.3,115.2 252.3,115.3 251.8,113.1 252.4,111.7 254.6,111.7" fill="#cfe3bf" opacity="0.85"/>
<polygon points="317.4,121.5 315.6,124.5 312.0,125.0 311.3,121.5 312.6,117.4 315.0,118.6" fill="#cfe3bf" opacity="0.85"/>
<polygon points="287.9,111.0 286.4,113.3 284.8,112.9 283.1,111.0 284.5,108.5 286.6,109.2" fill="#cfe3bf" opacity="0.85"/>
<polygon points="324.9,103.0 323.1,104.3 320.8,105.2 320.4,103.0 321.1,100.6 323.1,100.7" fill="#cfe3bf" opacity="0.85"/>
<polygon points="255.8,126.7 255.4,128.2 253.3,128.1 253.0,126.7 253.5,124.9 255.5,125.3" fill="#cfe3bf" opacity="0.85"/>
<polygon points="281.4,107.2 278.9,110.1 275.7,108.9 274.3,107.2 276.0,104.8 279.3,104.9" fill="#cfe3bf" opacity="0.85"/>
<polygon points="264.1,119.7 263.0,123.8 259.7,122.7 257.9,119.7 258.8,116.4 263.4,116.6" fill="#cfe3bf" opacity="0.85"/>
<polygon points="323.5,120.6 320.4,124.2 316.3,123.6 314.6,120.6 316.8,117.5 321.7,117.8" fill="#cfe3bf" opacity="0.85"/>
<polygon points="243.8,112.7 240.5,115.4 238.0,115.2 235.6,112.7 237.6,108.8 240.9,109.3" fill="#cfe3bf" opacity="0.85"/>
<polygon points="240.1,113.9 239.9,115.0 237.4,115.8 236.3,113.9 238.1,112.0 239.7,112.4" fill="#cfe3bf" opacity="0.85"/>
<polygon points="235.3,102.8 234.0,104.6 231.2,105.1 230.1,102.8 231.6,101.0 233.7,100.7" fill="#cfe3bf" opacity="0.85"/>
<polygon points="257.2,126.9 255.8,129.6 251.7,130.0 247.6,126.9 251.3,124.0 255.9,122.1" fill="#cfe3bf" opacity="0.85"/>
<polygon points="293.9,105.1 291.2,108.5 286.6,109.3 284.2,105.1 286.6,102.2 289.9,102.0" fill="#cfe3bf" opacity="0.85"/>
<polygon points="331.7,120.0 329.4,122.2 326.2,122.7 325.1,120.0 326.6,116.1 330.1,117.9" fill="#cfe3bf" opacity="0.85"/>
<polygon points="331.9,114.8 330.5,117.7 327.6,116.2 326.3,114.8 327.8,112.7 330.2,112.1" fill="#cfe3bf" opacity="0.85"/>
<polygon points="266.2,104.8 264.5,107.8 260.5,107.0 260.5,104.8 261.4,100.8 264.7,102.5" fill="#cfe3bf" opacity="0.85"/>
<polygon points="266.4,109.6 265.9,113.7 262.0,113.0 259.7,109.6 261.5,104.5 265.2,107.2" fill="#cfe3bf" opacity="0.85"/>
<polygon points="286.8,116.6 285.4,118.9 283.1,118.5 281.9,116.6 283.1,114.1 285.2,114.7" fill="#cfe3bf" opacity="0.85"/>
<polygon points="264.9,126.7 263.4,128.5 262.3,128.1 261.5,126.7 262.1,125.3 263.7,125.0" fill="#cfe3bf" opacity="0.85"/>
<polygon points="329.0,102.4 327.5,104.7 325.2,104.9 324.7,102.4 325.5,99.7 327.6,100.2" fill="#cfe3bf" opacity="0.85"/>
<polygon points="294.6,119.5 293.5,122.7 288.7,124.0 286.5,119.5 287.9,115.4 292.4,116.5" fill="#cfe3bf" opacity="0.85"/>
<polygon points="302.1,105.1 299.5,108.7 295.9,108.2 294.4,105.1 296.9,101.5 299.2,102.6" fill="#cfe3bf" opacity="0.85"/>
<polygon points="272.5,117.7 270.8,119.4 268.3,120.5 265.7,117.7 267.6,114.7 270.5,115.3" fill="#cfe3bf" opacity="0.85"/>
<polygon points="286.5,122.4 285.3,123.5 283.7,124.0 283.0,122.4 283.8,120.8 285.0,121.3" fill="#cfe3bf" opacity="0.85"/>
<polygon points="243.8,127.3 243.1,128.4 241.9,128.5 241.3,127.3 241.5,126.3 243.2,125.8" fill="#cfe3bf" opacity="0.85"/>
<polygon points="271.6,106.4 270.3,108.1 268.1,108.1 267.8,106.4 268.6,104.1 270.6,104.6" fill="#cfe3bf" opacity="0.85"/>
<polygon points="308.7,124.2 307.2,125.2 305.4,126.0 303.9,124.2 304.9,122.5 307.4,123.1" fill="#cfe3bf" opacity="0.85"/>
<polygon points="299.9,113.7 298.1,115.9 295.9,115.3 295.0,113.7 295.9,112.1 298.5,110.7" fill="#cfe3bf" opacity="0.85"/>
<polygon points="261.4,102.7 259.6,104.5 256.9,105.5 255.1,102.7 256.5,100.1 260.3,99.2" fill="#cfe3bf" opacity="0.85"/>
<polygon points="310.2,104.6 308.5,109.2 303.8,109.0 303.1,104.6 303.8,100.1 307.9,102.2" fill="#cfe3bf" opacity="0.85"/>
<polygon points="279.3,115.6 278.1,118.9 273.3,118.7 271.7,115.6 274.5,111.1 278.3,110.8" fill="#cfe3bf" opacity="0.85"/>
<polygon points="320.5,119.5 317.6,122.0 312.3,123.6 310.6,119.5 312.1,117.0 317.6,115.8" fill="#cfe3bf" opacity="0.85"/>
<polygon points="51.9,109.6 50.6,111.9 47.0,112.5 44.2,109.6 47.0,107.3 50.5,105.7" fill="#cfe3bf" opacity="0.85"/>
<polygon points="40.9,91.1 38.0,94.9 34.8,93.6 32.6,91.1 34.9,88.7 38.0,88.7" fill="#cfe3bf" opacity="0.85"/>
<polygon points="35.8,117.0 35.6,121.3 30.7,121.6 29.6,117.0 30.4,113.9 35.2,113.1" fill="#cfe3bf" opacity="0.85"/>
<polygon points="30.2,66.7 29.8,68.0 28.1,68.2 26.9,66.7 28.0,65.5 29.9,65.3" fill="#cfe3bf" opacity="0.85"/>
<polygon points="3.4,79.6 3.2,81.2 1.5,80.9 0.5,79.6 1.7,78.2 3.1,78.5" fill="#cfe3bf" opacity="0.85"/>
<polygon points="18.7,113.8 16.3,115.8 13.5,116.4 12.4,113.8 13.7,110.9 16.5,112.0" fill="#cfe3bf" opacity="0.85"/>
<polygon points="7.2,116.5 5.2,117.8 3.0,117.8 2.1,116.5 2.8,115.0 5.5,114.7" fill="#cfe3bf" opacity="0.85"/>
<polygon points="45.7,87.7 44.2,90.9 41.2,90.3 39.2,87.7 41.2,84.8 44.1,84.8" fill="#cfe3bf" opacity="0.85"/>
<polygon points="49.2,95.7 48.3,97.2 46.5,98.0 46.0,95.7 46.1,94.3 48.3,94.6" fill="#cfe3bf" opacity="0.85"/>
<polygon points="14.5,82.2 12.5,85.5 7.7,85.8 6.8,82.2 8.3,77.9 12.6,79.7" fill="#cfe3bf" opacity="0.85"/>
<polygon points="69.5,95.4 65.1,98.3 61.8,100.3 59.4,95.4 61.6,91.8 65.2,90.7" fill="#cfe3bf" opacity="0.85"/>
<polygon points="71.4,110.0 69.8,111.1 68.0,111.6 66.5,110.0 67.8,108.2 70.0,108.3" fill="#cfe3bf" opacity="0.85"/>
<polygon points="35.0,122.9 32.1,125.9 27.4,126.8 25.4,122.9 27.8,118.8 33.1,118.5" fill="#cfe3bf" opacity="0.85"/>
<polygon points="52.1,109.8 50.9,111.6 49.1,111.5 48.4,109.8 49.0,108.4 51.6,108.3" fill="#cfe3bf" opacity="0.85"/>
<polygon points="64.5,96.6 62.6,100.2 58.2,99.4 56.0,96.6 58.7,93.3 61.5,93.6" fill="#cfe3bf" opacity="0.85"/>
<polygon points="18.3,72.0 17.1,74.9 14.6,73.8 12.7,72.0 15.3,69.5 17.8,69.4" fill="#cfe3bf" opacity="0.85"/>
<polygon points="39.3,92.4 38.7,95.0 36.8,93.7 35.1,92.4 36.9,90.7 38.9,89.8" fill="#cfe3bf" opacity="0.85"/>
<polygon points="29.1,117.8 25.5,123.1 20.7,122.7 19.1,117.8 21.6,114.4 25.4,114.9" fill="#cfe3bf" opacity="0.85"/>
<polygon points="43.7,120.5 42.6,121.9 41.2,121.8 40.4,120.5 40.9,119.3 42.5,119.3" fill="#cfe3bf" opacity="0.85"/>
<polygon points="49.0,75.6 47.4,78.0 44.5,77.3 42.9,75.6 44.4,73.4 47.3,74.1" fill="#cfe3bf" opacity="0.85"/>
<polygon points="55.3,60.1 54.2,64.6 50.0,63.1 47.0,60.1 50.5,57.4 53.8,57.0" fill="#cfe3bf" opacity="0.85"/>
<polygon points="8.6,116.4 8.0,117.8 6.1,118.2 5.7,116.4 6.3,114.6 7.8,114.7" fill="#cfe3bf" opacity="0.85"/>
<polygon points="37.9,121.2 36.2,123.9 31.7,123.4 30.2,121.2 32.9,118.0 35.7,117.0" fill="#cfe3bf" opacity="0.85"/>
<polygon points="16.9,90.8 16.8,94.8 11.7,94.1 8.0,90.8 12.0,86.7 15.7,86.4" fill="#cfe3bf" opacity="0.85"/>
<polygon points="9.5,73.7 9.0,75.5 7.2,75.6 6.3,73.7 7.4,72.7 8.7,72.3" fill="#cfe3bf" opacity="0.85"/>
<polygon points="36.6,58.0 35.5,60.1 32.1,61.5 31.4,58.0 33.0,54.7 35.0,56.3" fill="#cfe3bf" opacity="0.85"/>
<polygon points="66.2,103.5 64.3,107.3 61.3,106.1 58.8,103.5 60.3,100.9 63.5,100.0" fill="#cfe3bf" opacity="0.85"/>
<polygon points="11.8,58.2 9.8,60.9 7.0,61.6 6.0,58.2 7.1,55.6 10.0,54.7" fill="#cfe3bf" opacity="0.85"/>
<polygon points="67.2,75.3 65.3,77.2 62.3,77.3 60.4,75.3 62.1,72.9 65.2,73.1" fill="#cfe3bf" opacity="0.85"/>
<polygon points="12.1,97.5 10.3,100.8 6.2,101.1 5.6,97.5 6.1,94.8 9.7,95.6" fill="#cfe3bf" opacity="0.85"/>
<polygon points="39.8,114.8 39.2,117.6 36.7,117.0 34.8,114.8 36.3,112.0 39.3,112.9" fill="#cfe3bf" opacity="0.85"/>
<polygon points="71.8,100.5 70.7,102.4 68.8,102.3 68.0,100.5 69.0,98.5 70.5,98.9" fill="#cfe3bf" opacity="0.85"/>
<polygon points="45.7,60.0 44.9,62.8 41.6,63.1 39.5,60.0 41.7,56.6 44.3,57.8" fill="#cfe3bf" opacity="0.85"/>
<polygon points="5.4,85.8 4.7,87.1 3.5,87.4 3.2,85.8 3.4,84.7 5.0,84.3" fill="#cfe3bf" opacity="0.85"/>
<polygon points="54.3,111.5 54.1,114.2 50.6,114.5 50.1,111.5 50.8,109.9 53.7,109.7" fill="#cfe3bf" opacity="0.85"/>
<polygon points="28.5,75.8 27.6,77.9 25.1,79.7 22.9,75.8 24.7,72.6 28.2,73.5" fill="#cfe3bf" opacity="0.85"/>
<polygon points="51.7,81.5 50.2,83.5 47.8,83.1 46.6,81.5 47.8,79.8 50.0,79.3" fill="#cfe3bf" opacity="0.85"/>
<polygon points="69.6,90.3 68.6,93.7 64.9,92.2 63.7,90.3 64.4,86.6 68.1,86.9" fill="#cfe3bf" opacity="0.85"/>
<polygon points="70.5,87.2 68.5,90.3 64.7,90.0 62.1,87.2 64.2,83.4 68.5,83.9" fill="#cfe3bf" opacity="0.85"/>
<polygon points="25.7,66.7 24.4,70.0 21.3,69.4 20.6,66.7 20.8,64.0 23.8,64.3" fill="#cfe3bf" opacity="0.85"/>
<polygon points="26.2,55.3 26.0,57.2 22.5,57.3 21.4,55.3 22.4,53.0 25.1,52.0" fill="#cfe3bf" opacity="0.85"/>
<polygon points="11.0,94.6 8.8,96.8 5.8,96.5 4.9,94.6 5.8,91.9 8.5,91.8" fill="#cfe3bf" opacity="0.85"/>
<polygon points="55.2,109.0 54.9,111.1 52.3,111.5 51.1,109.0 52.9,107.4 54.5,107.8" fill="#cfe3bf" opacity="0.85"/>
<polygon points="36.7,81.1 34.4,82.6 32.0,82.9 30.8,81.1 32.1,79.1 34.2,79.1" fill="#cfe3bf" opacity="0.85"/>
<polygon points="54.4,109.0 50.7,114.2 45.9,113.2 44.7,109.0 46.6,104.5 51.2,103.7" fill="#cfe3bf" opacity="0.85"/>
<polygon points="39.2,112.6 38.8,114.8 34.6,115.3 34.1,112.6 35.3,108.9 39.0,109.2" fill="#cfe3bf" opacity="0.85"/>
<polygon points="65.6,70.1 64.6,71.5 62.7,72.0 61.8,70.1 63.1,69.1 64.4,68.4" fill="#cfe3bf" opacity="0.85"/>
<polygon points="38.4,77.3 38.4,81.2 33.0,80.7 32.5,77.3 32.5,74.5 37.6,73.3" fill="#cfe3bf" opacity="0.85"/>
<polygon points="2.6,102.7 1.5,104.8 -1.0,105.8 -1.7,102.7 -0.6,99.7 2.1,101.1" fill="#cfe3bf" opacity="0.85"/>
<polygon points="7.2,101.8 2.7,105.2 -1.6,107.2 -5.0,101.8 -2.0,98.0 3.1,97.1" fill="#cfe3bf" opacity="0.85"/>
<polygon points="4.3,108.5 3.2,110.7 -0.6,111.5 -1.9,108.5 -0.2,104.9 4.2,104.3" fill="#cfe3bf" opacity="0.85"/>
<polygon points="46.8,87.8 45.9,89.3 44.1,88.7 43.6,87.8 44.2,86.6 45.6,86.3" fill="#cfe3bf" opacity="0.85"/>
<polygon points="54.5,96.9 52.6,99.8 48.0,100.0 46.5,96.9 48.8,93.7 51.6,94.4" fill="#cfe3bf" opacity="0.85"/>
<polygon points="56.6,82.2 54.9,83.6 52.5,84.3 52.4,82.2 52.9,80.8 54.9,79.7" fill="#cfe3bf" opacity="0.85"/>
<polygon points="28.4,95.3 25.8,100.0 20.9,97.8 19.3,95.3 21.1,91.6 25.2,91.5" fill="#cfe3bf" opacity="0.85"/>
<polygon points="7.7,93.5 5.9,95.9 2.5,97.3 0.6,93.5 3.0,90.6 6.0,90.3" fill="#cfe3bf" opacity="0.85"/>
<polygon points="70.5,62.8 67.5,67.0 61.7,67.3 59.9,62.8 61.9,59.1 66.8,57.8" fill="#cfe3bf" opacity="0.85"/>
<polygon points="13.9,66.0 11.5,68.1 8.3,68.7 5.6,66.0 8.2,63.6 11.7,61.8" fill="#cfe3bf" opacity="0.85"/>
<polygon points="33.5,124.1 31.9,127.5 28.5,128.6 24.0,124.1 27.9,120.2 31.9,120.7" fill="#cfe3bf" opacity="0.85"/>
<polygon points="51.8,79.3 49.9,81.1 46.4,81.4 44.0,79.3 46.9,77.5 50.3,75.6" fill="#cfe3bf" opacity="0.85"/>
<polygon points="40.2,59.6 39.6,61.1 36.6,62.7 35.8,59.6 36.3,57.5 39.4,57.1" fill="#cfe3bf" opacity="0.85"/>
<polygon points="36.4,105.8 35.3,108.1 32.3,109.0 31.7,105.8 32.4,103.4 35.1,103.6" fill="#cfe3bf" opacity="0.85"/>
<polygon points="20.8,71.7 20.1,74.7 14.9,76.1 11.4,71.7 14.0,67.9 20.0,68.7" fill="#cfe3bf" opacity="0.85"/>
<polygon points="33.1,55.5 31.6,59.4 27.8,58.6 25.4,55.5 27.1,52.4 31.7,51.9" fill="#cfe3bf" opacity="0.85"/>
<polygon points="3.1,73.0 1.5,75.6 -0.9,76.3 -2.1,73.0 -2.1,69.8 1.5,69.1" fill="#cfe3bf" opacity="0.85"/>
<polygon points="11.1,67.8 9.0,71.4 5.1,71.2 3.0,67.8 5.0,64.6 9.0,64.2" fill="#cfe3bf" opacity="0.85"/>
<polygon points="66.7,101.0 65.8,102.6 63.9,102.7 63.7,101.0 64.3,99.7 65.9,99.9" fill="#cfe3bf" opacity="0.85"/>
<polygon points="60.9,90.2 59.6,92.2 56.7,92.1 56.3,90.2 57.4,88.6 59.5,88.9" fill="#cfe3bf" opacity="0.85"/>
<polygon points="61.6,88.7 60.5,91.3 57.9,91.5 57.0,88.7 57.8,86.2 60.0,87.0" fill="#cfe3bf" opacity="0.85"/>
<polygon points="9.1,84.0 7.6,85.6 6.3,85.8 4.9,84.0 5.8,82.1 7.5,82.6" fill="#cfe3bf" opacity="0.85"/>
<polygon points="65.2,75.9 64.5,76.9 62.9,77.5 62.1,75.9 62.7,74.0 64.2,74.8" fill="#cfe3bf" opacity="0.85"/>
<polygon points="61.4,103.9 59.6,107.2 54.2,108.6 51.6,103.9 55.2,99.3 59.9,100.1" fill="#cfe3bf" opacity="0.85"/>
<polygon points="4.0,119.0 2.5,121.3 -0.8,121.2 -2.5,119.0 -0.9,116.7 2.3,115.6" fill="#cfe3bf" opacity="0.85"/>
<polygon points="55.0,63.2 55.1,64.9 52.7,65.1 51.2,63.2 52.8,61.5 54.8,61.9" fill="#cfe3bf" opacity="0.85"/>
<polygon points="29.2,80.1 28.1,81.4 26.6,81.7 26.5,80.1 26.7,79.2 28.0,78.8" fill="#cfe3bf" opacity="0.85"/>
<polygon points="3.5,62.5 2.9,64.4 1.0,64.8 -0.9,62.5 0.8,61.2 2.5,61.1" fill="#cfe3bf" opacity="0.85"/>
<polygon points="68.4,103.9 67.8,105.2 65.8,106.4 64.1,103.9 66.1,101.3 68.2,101.3" fill="#cfe3bf" opacity="0.85"/>
<polygon points="73.1,108.1 72.0,112.1 68.4,112.0 66.2,108.1 67.7,104.1 72.4,105.8" fill="#cfe3bf" opacity="0.85"/>
<polygon points="38.3,84.0 36.8,85.2 34.7,85.5 33.2,84.0 35.0,82.0 37.0,81.9" fill="#cfe3bf" opacity="0.85"/>
<polygon points="21.4,107.8 20.1,109.8 18.0,110.6 16.2,107.8 18.1,106.0 20.8,104.8" fill="#cfe3bf" opacity="0.85"/>
<polygon points="48.1,66.2 44.7,68.7 40.8,69.1 38.6,66.2 39.9,62.0 43.8,61.6" fill="#cfe3bf" opacity="0.85"/>
<polygon points="33.5,66.3 32.2,69.0 29.0,68.9 28.3,66.3 28.8,63.4 31.3,64.1" fill="#cfe3bf" opacity="0.85"/>
<polygon points="29.9,82.8 28.6,87.1 25.6,86.5 22.1,82.8 24.4,78.9 29.4,78.1" fill="#cfe3bf" opacity="0.85"/>
<polygon points="68.1,61.6 66.6,63.6 64.1,63.0 63.4,61.6 64.1,59.1 66.7,59.6" fill="#cfe3bf" opacity="0.85"/>
<polygon points="54.7,88.4 52.6,92.6 49.6,92.1 46.9,88.4 49.3,84.2 53.0,84.4" fill="#cfe3bf" opacity="0.85"/>
<polygon points="10.8,63.3 9.5,65.2 6.5,65.9 5.5,63.3 6.6,61.5 8.9,61.2" fill="#cfe3bf" opacity="0.85"/>
<polygon points="47.1,102.7 45.5,104.0 43.6,104.2 42.2,102.7 43.6,101.5 45.4,101.6" fill="#cfe3bf" opacity="0.85"/>
<polygon points="6.0,55.8 5.4,58.2 2.7,57.5 1.1,55.8 3.3,54.2 5.2,53.0" fill="#cfe3bf" opacity="0.85"/>
<polygon points="31.0,113.3 29.8,114.7 28.1,115.5 26.8,113.3 27.9,111.6 29.7,111.7" fill="#cfe3bf" opacity="0.85"/>
<polygon points="44.1,114.6 42.6,118.2 38.6,118.7 35.7,114.6 38.3,109.3 43.4,110.4" fill="#cfe3bf" opacity="0.85"/>
<polygon points="47.5,108.4 46.4,111.1 43.9,111.3 41.5,108.4 43.8,105.8 47.0,105.8" fill="#cfe3bf" opacity="0.85"/>
<polygon points="72.0,90.1 70.7,93.5 65.0,94.6 63.4,90.1 65.7,85.9 69.8,86.1" fill="#cfe3bf" opacity="0.85"/>
<polygon points="6.7,115.3 5.5,117.5 3.1,117.0 2.1,115.3 3.6,113.9 5.4,113.2" fill="#cfe3bf" opacity="0.85"/>
<polygon points="10.9,107.0 8.8,108.9 6.4,109.1 3.5,107.0 5.7,104.2 9.6,104.7" fill="#cfe3bf" opacity="0.85"/>
<polygon points="54.2,58.6 52.4,59.7 51.1,60.2 50.0,58.6 50.9,57.2 52.9,57.2" fill="#cfe3bf" opacity="0.85"/>
<polygon points="23.5,99.6 22.5,101.3 20.5,100.8 18.3,99.6 19.8,98.4 22.0,98.1" fill="#cfe3bf" opacity="0.85"/>
<polygon points="24.1,65.7 21.0,70.6 15.9,71.0 14.3,65.7 15.9,63.1 21.0,61.5" fill="#cfe3bf" opacity="0.85"/>
<polygon points="52.8,117.4 51.0,119.5 47.2,120.3 44.9,117.4 47.2,114.7 50.6,113.8" fill="#cfe3bf" opacity="0.85"/>
<polygon points="41.4,93.4 39.2,95.8 36.9,95.0 36.1,93.4 37.4,90.9 39.9,91.3" fill="#cfe3bf" opacity="0.85"/>
<polygon points="72.6,90.9 70.5,92.6 68.4,93.3 66.4,90.9 68.2,88.5 70.6,89.1" fill="#cfe3bf" opacity="0.85"/>
<polygon points="63.7,68.1 62.4,72.5 58.5,71.8 56.6,68.1 57.6,63.6 62.7,65.0" fill="#cfe3bf" opacity="0.85"/>
<polygon points="44.8,121.7 44.0,124.7 39.7,125.4 38.0,121.7 39.3,118.0 43.7,118.7" fill="#cfe3bf" opacity="0.85"/>
<polygon points="18.1,107.1 15.0,110.4 11.2,111.5 8.5,107.1 10.6,103.8 15.1,104.4" fill="#cfe3bf" opacity="0.85"/>
<polygon points="35.3,86.4 33.9,89.0 30.4,89.8 29.5,86.4 31.2,84.2 34.1,84.2" fill="#cfe3bf" opacity="0.85"/>
<polygon points="47.0,102.5 45.4,103.8 43.1,103.7 41.4,102.5 43.8,100.4 46.1,99.9" fill="#cfe3bf" opacity="0.85"/>
<polygon points="29.0,110.1 27.0,112.0 24.5,112.5 23.6,110.1 24.6,107.4 26.6,108.7" fill="#cfe3bf" opacity="0.85"/>
<polygon points="35.4,105.3 34.3,107.2 32.2,106.9 30.8,105.3 32.5,103.2 34.9,103.4" fill="#cfe3bf" opacity="0.85"/>
<polygon points="57.4,119.1 57.0,123.0 52.4,122.6 49.7,119.1 52.4,116.0 55.7,116.2" fill="#cfe3bf" opacity="0.85"/>
<polygon points="71.2,103.7 70.3,106.5 67.5,105.7 66.0,103.7 67.2,101.3 70.8,100.5" fill="#cfe3bf" opacity="0.85"/>
<polygon points="18.5,73.0 15.5,76.0 10.5,75.5 8.9,73.0 10.9,70.2 14.9,68.8" fill="#cfe3bf" opacity="0.85"/>
<polygon points="69.2,103.6 67.2,107.0 63.1,106.9 62.8,103.6 63.8,101.5 66.6,100.8" fill="#cfe3bf" opacity="0.85"/>
<polygon points="71.9,102.7 69.4,106.9 66.0,105.4 63.1,102.7 66.2,100.2 69.0,99.9" fill="#cfe3bf" opacity="0.85"/>
<polygon points="67.2,90.7 64.0,93.8 61.2,93.1 58.0,90.7 60.7,87.1 63.9,87.8" fill="#cfe3bf" opacity="0.85"/>
<polygon points="40.7,100.3 40.4,101.6 39.0,101.4 37.7,100.3 39.0,99.2 40.3,98.7" fill="#cfe3bf" opacity="0.85"/>
<polygon points="7.2,118.0 4.3,122.2 -0.0,121.7 -1.8,118.0 1.1,113.8 4.1,113.3" fill="#cfe3bf" opacity="0.85"/>
<polygon points="5.1,66.1 3.5,68.5 -0.2,68.7 -1.6,66.1 0.1,63.8 2.5,64.2" fill="#cfe3bf" opacity="0.85"/>
<polygon points="38.5,67.6 36.2,70.3 34.3,70.0 32.2,67.6 34.2,65.0 36.5,65.6" fill="#cfe3bf" opacity="0.85"/>
<polygon points="23.0,110.5 20.5,115.5 16.2,114.7 14.6,110.5 16.1,105.7 20.2,106.1" fill="#cfe3bf" opacity="0.85"/>
<polygon points="49.3,67.1 49.4,68.6 46.7,68.7 44.8,67.1 47.0,65.0 48.9,65.1" fill="#cfe3bf" opacity="0.85"/>
<polygon points="16.6,72.4 14.7,74.4 12.1,74.4 11.5,72.4 12.1,70.0 15.1,71.0" fill="#cfe3bf" opacity="0.85"/>
<polygon points="6.4,113.8 5.1,116.9 2.7,115.9 0.4,113.8 2.1,110.8 6.1,111.7" fill="#cfe3bf" opacity="0.85"/>
<polygon points="37.9,59.6 36.3,61.6 34.4,62.4 32.8,59.6 34.2,56.9 36.9,56.6" fill="#cfe3bf" opacity="0.85"/>
<polygon points="272.6,286.5 270.2,291.1 264.9,289.2 263.5,286.5 265.7,283.7 269.9,282.0" fill="#cfe3bf" opacity="0.85"/>
<polygon points="257.7,273.3 256.5,275.9 252.9,278.2 251.6,273.3 252.9,268.3 256.8,269.6" fill="#cfe3bf" opacity="0.85"/>
<polygon points="253.8,271.9 251.9,274.8 247.7,275.3 244.3,271.9 248.0,269.0 252.3,269.1" fill="#cfe3bf" opacity="0.85"/>
<polygon points="269.7,256.4 269.7,259.4 265.7,258.8 263.4,256.4 265.2,254.1 268.7,252.0" fill="#cfe3bf" opacity="0.85"/>
<polygon points="252.6,281.6 251.8,285.2 248.9,285.2 245.7,281.6 248.7,279.2 252.0,277.7" fill="#cfe3bf" opacity="0.85"/>
<polygon points="303.6,262.5 302.4,264.1 299.7,264.6 298.9,262.5 299.9,260.8 302.4,260.6" fill="#cfe3bf" opacity="0.85"/>
<polygon points="272.3,250.6 271.6,252.2 269.1,252.3 268.0,250.6 269.3,249.0 271.5,249.3" fill="#cfe3bf" opacity="0.85"/>
<polygon points="266.4,259.8 264.8,262.0 261.9,262.5 260.4,259.8 261.5,256.8 265.2,256.5" fill="#cfe3bf" opacity="0.85"/>
<polygon points="289.1,293.5 287.1,297.2 283.3,297.7 279.9,293.5 283.1,290.1 286.5,290.6" fill="#cfe3bf" opacity="0.85"/>
<polygon points="280.1,250.6 278.3,252.9 273.4,254.8 271.9,250.6 274.0,247.9 278.2,246.3" fill="#cfe3bf" opacity="0.85"/>
<polygon points="286.5,291.5 284.3,293.5 280.6,294.6 279.1,291.5 281.2,289.3 283.9,289.0" fill="#cfe3bf" opacity="0.85"/>
<polygon points="251.6,277.5 250.2,280.1 247.8,279.6 245.3,277.5 247.6,274.2 250.6,274.0" fill="#cfe3bf" opacity="0.85"/>
<polygon points="263.7,252.9 263.3,255.6 260.3,255.8 257.5,252.9 260.4,249.8 262.8,250.1" fill="#cfe3bf" opacity="0.85"/>
<polygon points="287.6,258.3 283.7,262.6 278.7,261.3 277.3,258.3 279.5,254.4 283.6,254.2" fill="#cfe3bf" opacity="0.85"/>
<polygon points="284.6,253.5 281.6,256.9 277.4,257.4 274.5,253.5 277.1,251.0 281.8,249.4" fill="#cfe3bf" opacity="0.85"/>
<polygon points="278.0,295.0 274.5,298.2 269.0,299.7 266.0,295.0 269.2,292.1 274.9,290.6" fill="#cfe3bf" opacity="0.85"/>
<polygon points="284.9,264.6 280.9,268.4 277.3,268.1 273.4,264.6 276.6,259.5 282.0,259.4" fill="#cfe3bf" opacity="0.85"/>
<polygon points="256.3,288.5 254.7,293.1 249.9,292.8 246.5,288.5 250.3,283.7 254.8,284.6" fill="#cfe3bf" opacity="0.85"/>
<polygon points="311.9,252.5 311.0,253.9 309.3,254.0 307.9,252.5 309.2,250.9 311.0,251.5" fill="#cfe3bf" opacity="0.85"/>
<polygon points="287.7,251.8 286.7,253.9 283.9,255.1 282.8,251.8 284.2,249.0 286.9,248.3" fill="#cfe3bf" opacity="0.85"/>
<polygon points="326.4,290.5 324.0,293.9 321.6,293.8 320.6,290.5 321.2,287.0 323.9,287.3" fill="#cfe3bf" opacity="0.85"/>
<polygon points="332.6,257.4 330.8,261.3 325.6,261.9 322.9,257.4 326.2,254.4 330.2,255.0" fill="#cfe3bf" opacity="0.85"/>
<polygon points="311.8,288.0 310.5,290.4 305.3,293.0 302.1,288.0 306.1,284.9 309.5,283.8" fill="#cfe3bf" opacity="0.85"/>
<polygon points="250.0,264.7 249.2,267.6 247.2,267.3 244.5,264.7 246.4,262.8 249.6,262.1" fill="#cfe3bf" opacity="0.85"/>
<polygon points="322.0,280.4 321.4,283.5 318.5,282.5 317.2,280.4 317.8,278.7 321.5,277.1" fill="#cfe3bf" opacity="0.85"/>
<polygon points="258.5,251.0 255.0,253.2 251.6,254.1 248.8,251.0 251.2,248.6 255.6,248.1" fill="#cfe3bf" opacity="0.85"/>
<polygon points="294.6,286.3 292.9,288.3 288.4,288.3 286.0,286.3 288.8,283.1 293.0,282.8" fill="#cfe3bf" opacity="0.85"/>
<polygon points="248.0,250.4 246.7,253.7 244.0,253.6 241.7,250.4 244.2,247.5 247.6,248.1" fill="#cfe3bf" opacity="0.85"/>
<polygon points="336.6,267.8 334.3,272.1 329.3,271.9 327.2,267.8 330.1,264.5 334.1,263.8" fill="#cfe3bf" opacity="0.85"/>
<polygon points="288.8,270.5 285.4,274.8 280.8,274.4 278.8,270.5 281.7,266.4 285.2,265.8" fill="#cfe3bf" opacity="0.85"/>
<polygon points="303.5,267.3 299.9,270.3 296.5,270.9 294.5,267.3 296.3,263.1 301.0,264.2" fill="#cfe3bf" opacity="0.85"/>
<polygon points="319.1,260.0 317.4,261.7 314.7,261.7 314.0,260.0 315.1,257.9 317.1,257.8" fill="#cfe3bf" opacity="0.85"/>
<polygon points="333.3,270.7 332.2,272.6 330.4,272.5 330.1,270.7 330.4,269.6 332.6,269.7" fill="#cfe3bf" opacity="0.85"/>
<polygon points="313.9,267.1 312.3,270.3 309.0,270.3 306.8,267.1 309.2,265.0 313.3,264.2" fill="#cfe3bf" opacity="0.85"/>
<polygon points="278.2,279.2 275.4,282.1 271.2,283.6 268.4,279.2 271.6,275.7 275.0,275.8" fill="#cfe3bf" opacity="0.85"/>
<polygon points="314.5,265.1 311.5,267.8 308.2,268.7 305.3,265.1 308.5,262.4 311.4,261.4" fill="#cfe3bf" opacity="0.85"/>
<polygon points="271.0,290.6 270.5,292.8 268.1,292.7 267.7,290.6 268.1,288.8 270.1,288.6" fill="#cfe3bf" opacity="0.85"/>
<polygon points="282.9,260.0 281.8,261.4 279.9,261.2 279.6,260.0 280.1,257.9 281.5,258.2" fill="#cfe3bf" opacity="0.85"/>
<polygon points="295.9,292.5 293.8,295.2 290.8,296.4 289.1,292.5 290.5,289.8 294.6,290.0" fill="#cfe3bf" opacity="0.85"/>
<polygon points="331.1,272.1 330.3,275.1 327.6,273.9 325.6,272.1 326.6,270.3 329.9,270.3" fill="#cfe3bf" opacity="0.85"/>
<polygon points="301.4,252.3 299.7,254.3 297.3,254.1 295.9,252.3 297.2,250.7 299.6,249.4" fill="#cfe3bf" opacity="0.85"/>
<polygon points="293.9,258.6 293.1,261.1 290.6,260.4 289.6,258.6 290.0,255.7 293.2,256.4" fill="#cfe3bf" opacity="0.85"/>
<polygon points="288.0,267.5 287.4,269.1 286.3,268.4 285.6,267.5 286.2,266.1 287.4,266.1" fill="#cfe3bf" opacity="0.85"/>
<polygon points="282.7,288.3 282.1,293.4 277.9,291.3 275.7,288.3 277.9,283.9 282.4,284.3" fill="#cfe3bf" opacity="0.85"/>
<polygon points="257.5,252.0 255.8,254.4 254.0,254.5 253.3,252.0 253.6,250.4 256.0,249.6" fill="#cfe3bf" opacity="0.85"/>
<polygon points="285.8,258.3 283.6,261.7 280.9,261.2 280.2,258.3 281.3,255.2 284.2,255.6" fill="#cfe3bf" opacity="0.85"/>
<polygon points="286.3,294.9 284.9,297.0 283.3,296.0 281.8,294.9 283.0,292.9 284.7,292.9" fill="#cfe3bf" opacity="0.85"/>
<polygon points="303.3,271.1 301.4,273.6 299.3,274.0 297.6,271.1 299.0,269.0 301.4,269.2" fill="#cfe3bf" opacity="0.85"/>
<polygon points="269.7,252.4 266.2,255.2 262.0,254.6 259.9,252.4 262.4,248.1 266.2,247.9" fill="#cfe3bf" opacity="0.85"/>
<polygon points="270.1,250.0 269.1,252.1 267.4,251.2 267.1,250.0 267.3,248.2 269.5,248.9" fill="#cfe3bf" opacity="0.85"/>
<polygon points="270.8,255.0 269.3,256.5 267.1,256.5 266.9,255.0 267.7,253.1 269.9,252.7" fill="#cfe3bf" opacity="0.85"/>
<polygon points="283.3,277.8 282.2,281.6 278.5,282.4 275.8,277.8 278.5,274.0 281.6,273.9" fill="#cfe3bf" opacity="0.85"/>
<polygon points="320.2,266.1 319.4,268.0 317.0,268.5 315.6,266.1 317.1,264.0 319.3,264.3" fill="#cfe3bf" opacity="0.85"/>
<polygon points="261.8,288.4 261.0,292.0 257.6,291.3 255.6,288.4 257.1,286.1 261.1,284.9" fill="#cfe3bf" opacity="0.85"/>
<polygon points="284.2,250.1 280.2,254.2 277.0,254.6 274.2,250.1 277.1,246.4 280.8,247.6" fill="#cfe3bf" opacity="0.85"/>
<polygon points="296.1,273.7 293.7,278.8 289.9,277.8 287.2,273.7 289.8,270.4 293.5,269.1" fill="#cfe3bf" opacity="0.85"/>
<polygon points="288.8,278.2 288.0,280.0 285.8,279.6 284.6,278.2 286.5,276.7 288.5,276.1" fill="#cfe3bf" opacity="0.85"/>
<polygon points="246.3,266.5 244.6,268.6 241.3,269.0 240.8,266.5 241.3,263.5 244.1,264.5" fill="#cfe3bf" opacity="0.85"/>
<polygon points="291.2,271.6 290.0,274.9 287.1,273.7 286.1,271.6 287.5,268.6 290.7,269.1" fill="#cfe3bf" opacity="0.85"/>
<polygon points="245.9,279.2 244.7,280.9 243.4,281.2 242.5,279.2 243.3,278.2 244.8,278.2" fill="#cfe3bf" opacity="0.85"/>
<polygon points="247.9,256.4 247.2,259.8 242.0,258.7 239.1,256.4 242.2,251.8 246.3,254.1" fill="#cfe3bf" opacity="0.85"/>
<polygon points="251.4,268.7 249.1,273.2 246.0,272.6 244.3,268.7 245.9,264.6 250.1,266.3" fill="#cfe3bf" opacity="0.85"/>
<polygon points="325.6,257.3 324.0,261.1 320.8,261.8 317.5,257.3 320.6,252.9 324.1,252.8" fill="#cfe3bf" opacity="0.85"/>
<polygon points="268.9,251.3 267.2,253.5 264.9,253.2 263.8,251.3 265.2,249.3 267.0,250.1" fill="#cfe3bf" opacity="0.85"/>
<polygon points="250.6,273.2 249.1,276.0 246.6,274.6 245.5,273.2 247.1,271.6 248.7,271.9" fill="#cfe3bf" opacity="0.85"/>
<polygon points="248.2,250.1 245.9,253.3 242.8,252.5 240.7,250.1 242.9,245.9 246.9,248.1" fill="#cfe3bf" opacity="0.85"/>
<polygon points="269.6,288.7 266.8,292.0 263.4,292.4 260.8,288.7 263.3,284.8 267.5,285.2" fill="#cfe3bf" opacity="0.85"/>
<polygon points="291.7,267.3 291.5,269.0 289.8,268.2 289.1,267.3 289.7,266.2 291.5,266.3" fill="#cfe3bf" opacity="0.85"/>
<polygon points="332.5,251.2 331.4,252.8 328.7,253.6 328.2,251.2 328.7,249.0 330.7,249.1" fill="#cfe3bf" opacity="0.85"/>
<polygon points="271.3,271.2 270.3,272.6 268.6,272.8 267.1,271.2 268.2,270.1 270.2,269.4" fill="#cfe3bf" opacity="0.85"/>
<polygon points="312.0,279.0 309.4,282.9 305.8,282.0 303.4,279.0 305.4,274.8 309.2,276.2" fill="#cfe3bf" opacity="0.85"/>
<polygon points="257.5,293.9 255.0,297.2 251.6,296.7 250.6,293.9 251.4,290.7 255.2,290.2" fill="#cfe3bf" opacity="0.85"/>
<polygon points="323.8,283.2 321.9,284.9 320.0,285.4 317.9,283.2 319.8,281.6 322.2,281.3" fill="#cfe3bf" opacity="0.85"/>
<polygon points="337.1,267.5 335.2,270.1 330.5,272.5 326.8,267.5 330.9,265.0 334.5,262.7" fill="#cfe3bf" opacity="0.85"/>
<polygon points="276.8,291.6 275.5,293.7 273.6,294.5 272.4,291.6 273.1,288.3 275.6,288.6" fill="#cfe3bf" opacity="0.85"/>
<polygon points="288.0,274.6 287.6,277.6 283.9,278.4 282.6,274.6 283.9,272.2 287.3,272.2" fill="#cfe3bf" opacity="0.85"/>
<polygon points="262.9,267.2 261.7,268.7 259.2,269.6 258.8,267.2 259.6,265.6 261.6,265.1" fill="#cfe3bf" opacity="0.85"/>
<polygon points="313.0,277.5 312.0,280.2 309.7,279.4 306.8,277.5 309.2,275.5 312.3,275.7" fill="#cfe3bf" opacity="0.85"/>
<polygon points="294.1,292.7 293.8,294.7 291.2,293.8 291.1,292.7 291.3,290.6 293.2,290.8" fill="#cfe3bf" opacity="0.85"/>
<polygon points="304.3,261.4 303.4,263.0 301.3,262.7 301.1,261.4 301.6,259.7 303.6,260.3" fill="#cfe3bf" opacity="0.85"/>
<polygon points="246.6,275.6 244.7,278.6 240.7,280.4 239.6,275.6 239.9,271.8 244.4,272.2" fill="#cfe3bf" opacity="0.85"/>
<polygon points="306.7,283.2 304.1,286.5 300.7,285.7 297.7,283.2 299.8,279.8 304.8,279.0" fill="#cfe3bf" opacity="0.85"/>
<polygon points="262.8,290.3 261.6,292.4 259.0,291.9 258.1,290.3 258.8,287.8 261.6,288.1" fill="#cfe3bf" opacity="0.85"/>
<polygon points="265.1,272.3 262.7,275.7 259.4,275.1 256.5,272.3 259.0,269.9 263.4,269.3" fill="#cfe3bf" opacity="0.85"/>
<polygon points="252.7,260.2 251.7,262.5 249.9,262.6 248.1,260.2 249.9,258.2 251.5,259.0" fill="#cfe3bf" opacity="0.85"/>
<polygon points="245.5,281.2 244.2,286.0 240.4,286.5 237.1,281.2 238.8,276.8 244.5,275.8" fill="#cfe3bf" opacity="0.85"/>
<polygon points="256.4,264.9 254.3,269.5 248.4,269.8 247.1,264.9 248.6,259.6 252.8,260.0" fill="#cfe3bf" opacity="0.85"/>
<polygon points="244.5,284.1 243.5,286.2 239.4,286.0 237.7,284.1 240.1,280.6 243.8,281.0" fill="#cfe3bf" opacity="0.85"/>
<polygon points="265.4,269.3 264.4,273.9 259.7,273.4 258.7,269.3 259.4,265.5 264.4,266.4" fill="#cfe3bf" opacity="0.85"/>
<polygon points="311.5,294.6 308.1,297.7 304.9,296.9 302.1,294.6 304.4,290.4 307.9,291.3" fill="#cfe3bf" opacity="0.85"/>
<polygon points="286.8,252.5 285.9,254.8 283.9,254.1 282.0,252.5 283.5,250.1 286.2,250.9" fill="#cfe3bf" opacity="0.85"/>
<polygon points="329.3,254.3 327.5,256.5 324.9,257.4 322.6,254.3 324.9,251.0 327.3,252.6" fill="#cfe3bf" opacity="0.85"/>
<polygon points="334.5,252.5 333.6,255.8 329.3,257.1 326.6,252.5 330.0,247.4 334.3,248.5" fill="#cfe3bf" opacity="0.85"/>
<polygon points="274.3,279.9 273.2,282.1 269.7,281.9 269.4,279.9 270.3,276.3 273.5,275.9" fill="#cfe3bf" opacity="0.85"/>
<polygon points="324.7,251.4 323.8,254.1 321.7,253.6 320.9,251.4 321.7,248.8 323.9,249.6" fill="#cfe3bf" opacity="0.85"/>
<polygon points="250.2,268.8 248.9,270.8 247.0,270.5 246.3,268.8 247.1,267.2 249.5,266.7" fill="#cfe3bf" opacity="0.85"/>
<polygon points="304.1,264.2 303.0,265.9 300.9,265.9 299.9,264.2 301.2,262.2 303.3,262.2" fill="#cfe3bf" opacity="0.85"/>
<polygon points="308.5,287.7 307.9,289.9 304.8,289.6 304.7,287.7 305.5,285.3 307.2,285.4" fill="#cfe3bf" opacity="0.85"/>
<polygon points="272.4,282.5 270.8,284.0 268.6,284.5 267.3,282.5 268.7,280.8 270.7,280.4" fill="#cfe3bf" opacity="0.85"/>
<polygon points="285.6,257.1 284.7,258.8 283.4,258.6 281.9,257.1 283.1,255.9 284.5,256.1" fill="#cfe3bf" opacity="0.85"/>
<polygon points="311.0,278.4 308.7,280.1 306.6,281.2 304.3,278.4 305.9,275.3 309.2,276.7" fill="#cfe3bf" opacity="0.85"/>
<polygon points="279.0,286.7 277.3,290.5 273.2,290.6 270.1,286.7 273.9,283.9 277.0,284.4" fill="#cfe3bf" opacity="0.85"/>
<polygon points="254.0,250.4 252.9,253.7 250.3,253.3 249.1,250.4 250.0,247.3 252.8,248.1" fill="#cfe3bf" opacity="0.85"/>
<polygon points="298.8,270.6 298.3,272.3 297.1,272.2 296.6,270.6 297.0,269.2 298.7,268.6" fill="#cfe3bf" opacity="0.85"/>
<polygon points="79.3,258.4 78.4,259.9 77.1,259.9 76.0,258.4 77.3,257.5 78.6,257.0" fill="#cfe3bf" opacity="0.85"/>
<polygon points="84.6,250.6 82.7,253.1 78.5,253.0 77.0,250.6 77.9,246.0 83.0,248.1" fill="#cfe3bf" opacity="0.85"/>
<polygon points="100.6,281.3 99.9,283.2 97.6,283.8 95.4,281.3 96.9,279.9 99.1,279.8" fill="#cfe3bf" opacity="0.85"/>
<polygon points="129.2,233.4 128.2,235.3 126.0,235.9 125.1,233.4 125.8,231.4 128.1,231.5" fill="#cfe3bf" opacity="0.85"/>
<polygon points="64.8,255.1 64.0,257.9 60.7,257.4 60.5,255.1 61.1,251.9 63.5,251.7" fill="#cfe3bf" opacity="0.85"/>
<polygon points="100.7,242.2 99.5,243.6 97.0,244.3 95.9,242.2 97.4,239.8 98.8,240.9" fill="#cfe3bf" opacity="0.85"/>
<polygon points="73.9,273.1 73.0,275.9 68.5,276.4 67.7,273.1 69.1,268.8 72.2,270.6" fill="#cfe3bf" opacity="0.85"/>
<polygon points="108.1,256.2 107.6,258.6 104.2,258.6 103.5,256.2 103.7,253.0 107.0,252.8" fill="#cfe3bf" opacity="0.85"/>
<polygon points="123.9,270.9 123.7,273.1 121.5,272.7 120.8,270.9 121.4,269.1 123.5,268.5" fill="#cfe3bf" opacity="0.85"/>
<polygon points="118.9,249.1 116.7,252.6 114.4,251.1 111.7,249.1 113.2,245.3 116.5,245.6" fill="#cfe3bf" opacity="0.85"/>
<polygon points="80.2,253.1 79.2,256.3 74.8,256.8 74.2,253.1 75.7,249.5 79.0,250.0" fill="#cfe3bf" opacity="0.85"/>
<polygon points="107.0,277.2 105.0,279.6 100.9,280.3 99.1,277.2 100.9,273.7 105.0,273.9" fill="#cfe3bf" opacity="0.85"/>
<polygon points="120.5,235.9 119.4,237.8 116.1,238.8 114.2,235.9 117.0,232.5 119.3,234.0" fill="#cfe3bf" opacity="0.85"/>
<polygon points="66.3,263.8 65.8,265.2 63.7,265.0 62.9,263.8 64.1,262.6 65.7,262.0" fill="#cfe3bf" opacity="0.85"/>
<polygon points="110.7,240.3 109.3,242.2 107.2,242.2 106.4,240.3 107.2,238.8 109.1,238.7" fill="#cfe3bf" opacity="0.85"/>
<polygon points="136.7,236.9 132.9,241.7 128.7,239.4 128.2,236.9 128.7,233.3 133.7,234.2" fill="#cfe3bf" opacity="0.85"/>
<polygon points="67.4,272.8 65.7,274.2 63.6,274.5 61.4,272.8 63.8,270.0 66.0,271.1" fill="#cfe3bf" opacity="0.85"/>
<polygon points="119.6,253.2 118.9,255.4 117.0,254.5 115.6,253.2 116.8,250.7 119.6,250.6" fill="#cfe3bf" opacity="0.85"/>
<polygon points="126.5,269.9 124.7,272.6 121.0,274.0 120.0,269.9 122.1,266.6 124.9,266.6" fill="#cfe3bf" opacity="0.85"/>
<polygon points="69.2,256.6 68.5,259.2 65.8,258.5 65.0,256.6 66.5,253.7 68.7,253.6" fill="#cfe3bf" opacity="0.85"/>
<polygon points="116.7,235.8 115.2,237.4 113.6,237.7 112.7,235.8 113.7,234.3 115.7,234.7" fill="#cfe3bf" opacity="0.85"/>
<polygon points="141.5,239.0 140.8,241.1 138.4,241.1 136.7,239.0 138.6,237.3 140.5,236.6" fill="#cfe3bf" opacity="0.85"/>
<polygon points="75.4,243.2 73.2,247.5 69.1,247.3 68.2,243.2 68.5,239.7 73.7,238.0" fill="#cfe3bf" opacity="0.85"/>
<polygon points="95.8,289.7 93.0,292.9 89.4,293.5 88.3,289.7 89.8,286.9 93.5,287.7" fill="#cfe3bf" opacity="0.85"/>
<polygon points="122.9,262.9 121.5,265.1 119.6,264.5 117.7,262.9 119.3,260.9 121.8,259.7" fill="#cfe3bf" opacity="0.85"/>
<polygon points="117.4,285.1 116.7,288.3 113.6,287.7 113.7,285.1 113.9,282.9 116.6,282.0" fill="#cfe3bf" opacity="0.85"/>
<polygon points="75.7,291.4 74.0,295.1 68.6,295.6 68.2,291.4 69.0,288.5 74.8,287.7" fill="#cfe3bf" opacity="0.85"/>
<polygon points="140.8,270.5 140.3,272.9 137.3,273.0 135.3,270.5 137.7,267.5 139.7,268.4" fill="#cfe3bf" opacity="0.85"/>
<polygon points="137.5,286.3 135.4,289.5 131.8,289.1 129.0,286.3 131.1,281.2 136.0,282.9" fill="#cfe3bf" opacity="0.85"/>
<polygon points="126.5,241.3 126.3,242.8 124.0,243.1 123.1,241.3 123.8,239.7 126.2,239.9" fill="#cfe3bf" opacity="0.85"/>
<polygon points="131.0,294.9 130.5,297.5 126.9,298.0 125.6,294.9 126.8,292.1 129.7,292.8" fill="#cfe3bf" opacity="0.85"/>
<polygon points="112.5,290.0 111.2,290.8 109.5,291.4 108.2,290.0 109.6,289.0 110.9,288.4" fill="#cfe3bf" opacity="0.85"/>
<polygon points="131.0,260.4 130.2,262.6 125.7,265.0 124.5,260.4 126.2,257.5 129.6,257.0" fill="#cfe3bf" opacity="0.85"/>
<polygon points="116.2,285.0 115.2,285.9 113.4,286.0 112.3,285.0 113.4,284.1 115.1,283.3" fill="#cfe3bf" opacity="0.85"/>
<polygon points="64.8,289.1 62.3,292.3 59.1,292.7 57.4,289.1 59.5,285.5 62.4,285.2" fill="#cfe3bf" opacity="0.85"/>
<polygon points="129.1,285.3 127.0,287.8 122.5,289.6 121.2,285.3 122.0,281.1 127.0,282.6" fill="#cfe3bf" opacity="0.85"/>
<polygon points="135.1,260.1 132.8,261.9 130.8,262.4 130.3,260.1 131.0,258.2 133.0,258.2" fill="#cfe3bf" opacity="0.85"/>
<polygon points="131.4,268.2 131.2,270.9 127.1,272.5 124.9,268.2 126.5,264.5 131.3,264.0" fill="#cfe3bf" opacity="0.85"/>
<polygon points="116.4,259.8 113.1,263.9 109.5,264.4 106.0,259.8 109.9,257.1 113.9,257.4" fill="#cfe3bf" opacity="0.85"/>
<polygon points="102.4,249.8 100.8,253.7 97.3,254.0 94.3,249.8 96.9,245.9 100.7,247.0" fill="#cfe3bf" opacity="0.85"/>
<polygon points="109.6,235.1 109.2,237.8 105.6,237.5 102.9,235.1 104.4,232.2 108.6,232.6" fill="#cfe3bf" opacity="0.85"/>
<polygon points="111.7,272.4 111.0,275.9 107.5,276.1 105.7,272.4 108.0,270.6 111.2,269.4" fill="#cfe3bf" opacity="0.85"/>
<polygon points="126.2,253.5 123.7,256.4 119.3,256.7 115.8,253.5 118.6,249.3 122.7,250.9" fill="#cfe3bf" opacity="0.85"/>
<polygon points="82.3,241.5 81.3,244.5 77.8,243.9 76.5,241.5 77.6,238.6 81.3,238.4" fill="#cfe3bf" opacity="0.85"/>
<polygon points="125.2,291.2 124.1,293.0 120.3,293.0 120.2,291.2 121.1,289.1 123.8,288.2" fill="#cfe3bf" opacity="0.85"/>
<polygon points="137.6,261.5 135.0,264.4 130.5,265.4 127.0,261.5 129.6,258.4 134.6,257.0" fill="#cfe3bf" opacity="0.85"/>
<polygon points="78.4,282.3 77.0,287.8 71.1,286.3 68.4,282.3 71.8,276.8 76.4,279.6" fill="#cfe3bf" opacity="0.85"/>
<polygon points="72.5,251.7 70.2,256.2 65.5,255.4 64.1,251.7 66.1,246.4 70.9,248.0" fill="#cfe3bf" opacity="0.85"/>
<polygon points="111.3,286.5 110.2,287.6 108.1,288.8 107.3,286.5 108.1,285.1 109.7,285.0" fill="#cfe3bf" opacity="0.85"/>
<polygon points="81.1,261.8 80.8,264.0 77.2,264.8 75.8,261.8 76.5,259.2 80.5,259.0" fill="#cfe3bf" opacity="0.85"/>
<polygon points="102.6,286.5 100.3,290.5 96.8,289.2 94.1,286.5 97.0,284.6 99.8,283.2" fill="#cfe3bf" opacity="0.85"/>
<polygon points="124.3,243.5 122.5,245.3 120.6,244.8 119.9,243.5 120.8,241.4 123.0,241.9" fill="#cfe3bf" opacity="0.85"/>
<polygon points="133.2,263.3 131.0,266.4 129.1,264.8 127.6,263.3 128.9,261.1 131.2,261.7" fill="#cfe3bf" opacity="0.85"/>
<polygon points="116.7,288.7 115.7,293.2 110.2,291.6 108.7,288.7 109.9,284.4 115.3,285.8" fill="#cfe3bf" opacity="0.85"/>
<polygon points="112.1,262.0 111.0,263.9 108.9,263.3 107.6,262.0 109.1,260.3 111.0,260.5" fill="#cfe3bf" opacity="0.85"/>
<polygon points="136.7,238.6 134.3,241.1 131.4,241.5 129.6,238.6 130.5,236.1 134.7,235.0" fill="#cfe3bf" opacity="0.85"/>
<polygon points="81.8,287.6 80.1,289.2 77.6,289.1 77.6,287.6 78.1,286.1 80.2,285.7" fill="#cfe3bf" opacity="0.85"/>
<polygon points="112.8,281.9 112.0,284.2 108.4,283.9 107.9,281.9 108.2,279.7 111.8,279.3" fill="#cfe3bf" opacity="0.85"/>
<polygon points="115.8,241.5 114.7,243.5 111.6,242.7 110.6,241.5 112.1,239.1 114.0,239.2" fill="#cfe3bf" opacity="0.85"/>
<polygon points="84.1,256.4 82.8,259.1 79.1,259.6 76.4,256.4 78.0,251.9 82.6,251.3" fill="#cfe3bf" opacity="0.85"/>
<polygon points="123.2,279.2 122.1,281.7 119.1,281.4 118.1,279.2 119.6,277.3 122.2,277.0" fill="#cfe3bf" opacity="0.85"/>
<polygon points="74.9,268.1 73.5,270.7 70.2,271.0 70.1,268.1 70.9,266.2 73.3,266.3" fill="#cfe3bf" opacity="0.85"/>
<polygon points="141.1,265.4 139.7,267.1 138.1,267.2 137.4,265.4 138.4,264.0 140.2,264.2" fill="#cfe3bf" opacity="0.85"/>
<polygon points="111.9,253.8 110.6,257.2 107.9,257.0 106.8,253.8 108.1,251.2 111.2,250.5" fill="#cfe3bf" opacity="0.85"/>
<polygon points="66.4,269.3 65.1,270.6 63.7,270.3 62.5,269.3 63.7,268.0 65.3,267.6" fill="#cfe3bf" opacity="0.85"/>
<polygon points="134.0,262.3 132.8,265.9 128.7,265.1 125.9,262.3 128.8,259.7 132.4,258.5" fill="#cfe3bf" opacity="0.85"/>
<polygon points="135.3,254.8 133.8,256.7 131.6,256.0 130.7,254.8 132.2,253.1 134.0,253.4" fill="#cfe3bf" opacity="0.85"/>
<polygon points="85.3,259.3 84.0,260.7 81.9,260.8 80.6,259.3 81.7,257.9 83.6,257.3" fill="#cfe3bf" opacity="0.85"/>
<polygon points="77.4,283.1 77.4,286.1 74.3,285.1 72.0,283.1 73.9,279.9 77.1,281.1" fill="#cfe3bf" opacity="0.85"/>
<polygon points="103.0,230.3 102.2,231.3 100.1,231.7 99.7,230.3 100.4,229.1 101.8,228.7" fill="#cfe3bf" opacity="0.85"/>
<polygon points="95.9,281.4 93.8,284.5 90.2,285.4 89.5,281.4 90.1,277.4 93.4,277.6" fill="#cfe3bf" opacity="0.85"/>
<polygon points="97.4,289.8 97.1,290.8 95.3,290.7 94.4,289.8 95.1,288.5 96.8,288.4" fill="#cfe3bf" opacity="0.85"/>
<polygon points="71.2,271.4 70.1,274.1 67.4,274.0 65.8,271.4 66.4,269.0 70.3,268.3" fill="#cfe3bf" opacity="0.85"/>
<polygon points="65.8,293.2 64.8,294.5 63.3,295.2 62.7,293.2 63.4,291.4 64.6,291.8" fill="#cfe3bf" opacity="0.85"/>
<polygon points="72.8,289.5 70.7,292.6 68.4,292.3 67.0,289.5 68.2,286.2 71.2,286.0" fill="#cfe3bf" opacity="0.85"/>
<polygon points="84.6,240.2 82.2,243.0 79.6,243.3 77.7,240.2 80.2,238.0 82.9,238.0" fill="#cfe3bf" opacity="0.85"/>
<polygon points="115.7,268.7 112.8,272.8 108.2,273.1 106.6,268.7 108.6,265.9 111.8,265.2" fill="#cfe3bf" opacity="0.85"/>
<polygon points="124.5,257.1 123.9,259.7 121.2,259.0 120.2,257.1 120.8,254.9 123.8,255.0" fill="#cfe3bf" opacity="0.85"/>
<polygon points="102.9,260.1 102.7,263.0 98.1,262.9 96.3,260.1 99.2,256.9 102.0,255.9" fill="#cfe3bf" opacity="0.85"/>
<polygon points="108.9,260.4 108.5,262.7 105.2,263.2 103.4,260.4 105.4,258.3 107.9,257.7" fill="#cfe3bf" opacity="0.85"/>
<polygon points="132.6,249.5 131.9,254.4 126.9,252.9 125.9,249.5 127.0,246.3 131.9,247.0" fill="#cfe3bf" opacity="0.85"/>
<polygon points="67.8,233.0 65.6,236.6 62.1,235.5 58.7,233.0 61.3,229.9 65.0,230.1" fill="#cfe3bf" opacity="0.85"/>
<polygon points="103.3,291.6 102.6,294.0 100.1,293.1 98.3,291.6 100.2,289.1 103.2,288.7" fill="#cfe3bf" opacity="0.85"/>
<polygon points="104.5,233.0 102.3,236.0 99.6,234.9 99.4,233.0 100.2,231.5 103.0,231.4" fill="#cfe3bf" opacity="0.85"/>
<polygon points="101.5,262.1 99.6,264.7 97.3,264.5 96.2,262.1 97.4,260.5 99.5,260.5" fill="#cfe3bf" opacity="0.85"/>
<polygon points="136.0,280.6 135.2,282.9 131.3,283.8 130.9,280.6 131.4,277.9 134.9,276.6" fill="#cfe3bf" opacity="0.85"/>
<polygon points="87.5,262.7 87.2,266.3 83.0,266.3 81.4,262.7 83.5,260.1 86.4,260.8" fill="#cfe3bf" opacity="0.85"/>
<polygon points="69.4,283.8 68.3,285.6 66.3,285.7 65.6,283.8 66.4,281.9 68.3,282.4" fill="#cfe3bf" opacity="0.85"/>
<polygon points="127.3,282.4 125.9,285.4 121.8,284.6 119.5,282.4 121.8,279.5 126.1,280.1" fill="#cfe3bf" opacity="0.85"/>
<polygon points="103.6,251.4 102.5,253.2 101.1,253.0 100.0,251.4 100.7,249.8 102.5,249.6" fill="#cfe3bf" opacity="0.85"/>
<polygon points="115.0,270.9 112.9,274.1 110.6,274.0 108.5,270.9 110.0,267.5 113.3,268.2" fill="#cfe3bf" opacity="0.85"/>
<polygon points="77.4,256.6 77.2,259.1 74.2,258.7 72.8,256.6 74.3,253.7 77.1,254.4" fill="#cfe3bf" opacity="0.85"/>
<polygon points="94.9,288.6 94.0,292.8 90.7,291.2 89.3,288.6 90.4,286.6 93.6,284.9" fill="#cfe3bf" opacity="0.85"/>
<polygon points="104.2,244.7 104.0,247.2 98.5,249.2 95.9,244.7 98.3,241.3 103.1,242.0" fill="#cfe3bf" opacity="0.85"/>
<polygon points="77.8,244.7 77.4,245.7 75.5,246.4 74.8,244.7 75.4,243.7 77.6,242.9" fill="#cfe3bf" opacity="0.85"/>
<polygon points="78.7,234.3 76.4,237.3 73.2,238.8 70.4,234.3 73.2,231.3 76.5,231.1" fill="#cfe3bf" opacity="0.85"/>
<polygon points="78.0,249.1 76.2,251.7 72.8,250.9 71.1,249.1 73.6,246.9 76.2,246.3" fill="#cfe3bf" opacity="0.85"/>
<polygon points="129.7,272.6 127.9,273.9 125.5,274.8 124.0,272.6 126.0,270.5 128.3,270.7" fill="#cfe3bf" opacity="0.85"/>
<polygon points="86.9,266.3 85.9,268.3 82.3,268.9 80.1,266.3 82.5,263.8 86.3,262.2" fill="#cfe3bf" opacity="0.85"/>
<polygon points="86.5,275.7 85.3,278.5 81.3,278.0 78.9,275.7 81.0,273.2 85.1,273.2" fill="#cfe3bf" opacity="0.85"/>
<polygon points="76.4,259.0 74.9,260.9 73.0,260.8 72.5,259.0 73.2,256.9 74.9,257.5" fill="#cfe3bf" opacity="0.85"/>
<polygon points="106.0,279.5 102.8,283.0 99.6,281.8 98.5,279.5 99.3,275.9 103.8,277.2" fill="#cfe3bf" opacity="0.85"/>
<polygon points="94.1,238.7 92.6,241.8 89.2,241.7 88.6,238.7 89.2,234.9 93.5,236.4" fill="#cfe3bf" opacity="0.85"/>
<polygon points="99.2,285.4 97.9,287.4 94.9,287.5 92.2,285.4 94.4,282.5 98.6,282.4" fill="#cfe3bf" opacity="0.85"/>
<polygon points="142.3,288.7 139.8,291.8 135.7,292.7 132.8,288.7 135.5,285.5 138.7,284.6" fill="#cfe3bf" opacity="0.85"/>
<polygon points="103.0,235.0 102.3,237.8 99.6,238.5 97.6,235.0 99.2,231.8 102.8,233.1" fill="#cfe3bf" opacity="0.85"/>
<polygon points="99.5,282.6 98.1,285.3 95.5,285.1 93.9,282.6 94.6,280.8 98.0,280.3" fill="#cfe3bf" opacity="0.85"/>
<polygon points="133.5,287.2 132.2,289.6 128.9,290.6 128.0,287.2 128.9,284.6 132.1,285.4" fill="#cfe3bf" opacity="0.85"/>
<polygon points="137.3,282.6 132.7,287.6 128.5,287.2 126.5,282.6 128.3,279.0 133.7,279.3" fill="#cfe3bf" opacity="0.85"/>
<polygon points="83.5,285.9 82.4,288.6 80.2,287.9 78.6,285.9 79.5,284.4 83.0,284.3" fill="#cfe3bf" opacity="0.85"/>
<polygon points="110.0,237.8 106.7,241.8 102.5,241.4 102.0,237.8 103.5,233.4 107.0,234.5" fill="#cfe3bf" opacity="0.85"/>
<polygon points="68.4,255.1 66.0,257.9 62.1,259.5 60.6,255.1 61.9,252.4 66.3,250.7" fill="#cfe3bf" opacity="0.85"/>
<polygon points="121.5,261.5 119.4,265.3 115.4,266.5 112.3,261.5 114.9,257.3 120.0,257.4" fill="#cfe3bf" opacity="0.85"/>
<polygon points="98.1,260.9 96.7,262.9 94.6,263.2 93.9,260.9 94.4,259.0 96.3,258.8" fill="#cfe3bf" opacity="0.85"/>
<polygon points="139.6,271.4 139.6,273.1 137.2,273.2 136.0,271.4 136.8,269.6 139.3,269.0" fill="#cfe3bf" opacity="0.85"/>
<polygon points="106.6,272.6 104.9,274.7 101.0,276.2 99.5,272.6 100.5,268.8 103.9,269.0" fill="#cfe3bf" opacity="0.85"/>
<polygon points="107.5,271.0 105.2,274.5 101.7,274.8 101.2,271.0 102.7,269.0 105.9,267.7" fill="#cfe3bf" opacity="0.85"/>
<polygon points="320.7,167.2 319.6,170.6 316.1,170.6 313.8,167.2 316.8,164.8 319.5,163.8" fill="#cfe3bf" opacity="0.85"/>
<polygon points="322.1,211.7 320.1,214.4 317.1,213.7 313.7,211.7 316.3,209.0 319.6,207.6" fill="#cfe3bf" opacity="0.85"/>
<polygon points="315.8,221.1 312.9,224.4 308.5,225.5 306.7,221.1 309.2,217.8 312.5,218.2" fill="#cfe3bf" opacity="0.85"/>
<polygon points="326.5,228.9 323.4,233.8 319.6,233.5 317.7,228.9 318.8,224.2 323.7,224.9" fill="#cfe3bf" opacity="0.85"/>
<polygon points="311.4,150.1 308.2,154.0 304.6,152.6 303.5,150.1 304.2,146.3 308.7,145.6" fill="#cfe3bf" opacity="0.85"/>
<polygon points="330.0,202.8 328.7,204.6 326.4,204.9 324.8,202.8 325.6,200.5 328.1,200.1" fill="#cfe3bf" opacity="0.85"/>
<polygon points="332.5,186.5 328.4,191.6 324.7,191.9 320.1,186.5 324.1,183.4 328.3,183.2" fill="#cfe3bf" opacity="0.85"/>
<polygon points="318.3,154.4 317.8,156.1 315.9,155.9 315.3,154.4 315.6,153.2 318.1,152.5" fill="#cfe3bf" opacity="0.85"/>
<polygon points="323.7,157.0 323.3,158.8 321.2,158.0 320.0,157.0 321.4,155.4 323.3,155.5" fill="#cfe3bf" opacity="0.85"/>
<polygon points="313.9,182.9 312.0,186.5 307.6,185.6 305.5,182.9 307.6,179.5 311.6,178.2" fill="#cfe3bf" opacity="0.85"/>
<polygon points="320.5,222.7 319.1,225.6 316.4,225.7 315.7,222.7 317.1,220.3 319.3,219.7" fill="#cfe3bf" opacity="0.85"/>
<polygon points="319.9,180.1 317.9,181.6 315.1,182.3 314.6,180.1 315.6,178.4 317.9,177.6" fill="#cfe3bf" opacity="0.85"/>
<polygon points="304.8,188.1 303.3,190.4 301.6,190.4 300.8,188.1 301.3,186.9 303.6,186.8" fill="#cfe3bf" opacity="0.85"/>
<polygon points="325.9,193.4 323.1,198.7 319.1,198.4 317.1,193.4 318.3,189.1 323.8,189.3" fill="#cfe3bf" opacity="0.85"/>
<polygon points="310.4,223.9 309.0,225.0 306.9,225.6 306.2,223.9 307.0,222.8 309.1,222.2" fill="#cfe3bf" opacity="0.85"/>
<polygon points="319.8,174.6 317.1,177.6 312.9,178.0 311.9,174.6 313.6,172.1 317.6,170.6" fill="#cfe3bf" opacity="0.85"/>
<polygon points="334.6,192.9 332.5,197.7 328.2,196.0 325.1,192.9 328.4,187.9 333.0,190.0" fill="#cfe3bf" opacity="0.85"/>
<polygon points="325.9,184.2 324.1,186.6 321.2,187.0 319.0,184.2 320.7,180.9 324.0,181.4" fill="#cfe3bf" opacity="0.85"/>
<polygon points="327.5,156.2 326.8,158.8 322.3,158.5 319.2,156.2 322.5,153.5 326.6,151.7" fill="#cfe3bf" opacity="0.85"/>
<polygon points="322.3,164.6 320.4,168.4 317.3,166.5 314.4,164.6 316.7,162.1 319.6,161.3" fill="#cfe3bf" opacity="0.85"/>
<polygon points="311.2,154.8 309.1,158.2 305.9,158.3 303.0,154.8 305.3,152.1 308.6,151.6" fill="#cfe3bf" opacity="0.85"/>
<polygon points="316.5,219.5 314.2,222.6 311.3,222.6 309.8,219.5 312.0,217.5 314.3,217.9" fill="#cfe3bf" opacity="0.85"/>
<polygon points="331.7,186.5 330.0,188.3 328.5,188.4 327.7,186.5 328.1,185.2 330.2,184.2" fill="#cfe3bf" opacity="0.85"/>
<polygon points="329.2,167.6 326.3,171.2 323.1,170.5 321.8,167.6 322.8,165.2 327.8,164.2" fill="#cfe3bf" opacity="0.85"/>
<polygon points="307.9,171.3 307.5,174.3 304.1,173.7 301.7,171.3 303.6,168.8 307.2,169.4" fill="#cfe3bf" opacity="0.85"/>
<polygon points="311.1,159.3 309.5,163.6 304.0,164.3 302.5,159.3 304.0,154.3 308.8,156.5" fill="#cfe3bf" opacity="0.85"/>
<polygon points="324.7,227.8 324.0,229.4 322.7,229.5 321.6,227.8 322.4,226.5 324.0,226.0" fill="#cfe3bf" opacity="0.85"/>
<polygon points="305.8,177.5 303.9,180.4 299.6,182.8 296.9,177.5 298.5,174.3 302.7,173.7" fill="#cfe3bf" opacity="0.85"/>
<polygon points="307.6,213.6 307.4,215.5 305.0,215.4 303.3,213.6 305.3,211.8 306.7,211.5" fill="#cfe3bf" opacity="0.85"/>
<polygon points="328.2,203.0 326.2,206.6 321.8,207.4 320.5,203.0 322.9,199.2 325.9,198.4" fill="#cfe3bf" opacity="0.85"/>
<polygon points="316.5,224.5 315.7,225.7 314.2,226.4 313.4,224.5 313.7,223.3 316.2,222.3" fill="#cfe3bf" opacity="0.85"/>
<polygon points="335.3,220.7 333.3,224.9 330.5,222.9 326.9,220.7 329.8,216.8 333.3,216.8" fill="#cfe3bf" opacity="0.85"/>
<polygon points="335.4,228.2 334.9,230.8 331.1,231.8 330.0,228.2 331.7,226.3 334.7,224.8" fill="#cfe3bf" opacity="0.85"/>
<polygon points="308.3,194.1 305.2,197.6 302.3,196.9 301.5,194.1 302.2,191.2 305.6,191.5" fill="#cfe3bf" opacity="0.85"/>
<polygon points="322.0,156.7 320.2,159.5 316.7,159.7 313.9,156.7 316.5,153.7 320.2,152.7" fill="#cfe3bf" opacity="0.85"/>
<polygon points="306.0,219.0 304.4,220.5 302.7,220.4 301.4,219.0 302.8,217.8 304.8,217.8" fill="#cfe3bf" opacity="0.85"/>
<polygon points="313.0,188.5 312.4,190.3 310.6,190.0 310.3,188.5 310.2,186.7 312.1,186.8" fill="#cfe3bf" opacity="0.85"/>
<polygon points="314.7,213.4 314.3,214.5 312.8,214.8 311.3,213.4 312.3,212.5 314.1,212.1" fill="#cfe3bf" opacity="0.85"/>
<polygon points="303.9,169.9 302.9,171.4 301.0,170.9 300.2,169.9 301.1,167.8 302.9,168.5" fill="#cfe3bf" opacity="0.85"/>
<polygon points="326.5,216.1 326.1,217.9 322.4,218.2 322.2,216.1 323.1,214.2 326.0,213.4" fill="#cfe3bf" opacity="0.85"/>
<polygon points="322.4,220.3 322.2,222.2 320.5,221.5 318.7,220.3 320.2,219.2 321.9,218.6" fill="#cfe3bf" opacity="0.85"/>
<polygon points="335.2,192.6 333.6,196.4 328.8,196.7 327.0,192.6 329.1,190.2 333.4,189.9" fill="#cfe3bf" opacity="0.85"/>
<polygon points="314.8,176.8 313.6,181.5 309.5,180.9 308.7,176.8 308.8,172.3 314.1,172.0" fill="#cfe3bf" opacity="0.85"/>
<polygon points="313.2,174.7 313.1,177.1 309.8,177.2 309.3,174.7 309.9,171.9 312.5,172.2" fill="#cfe3bf" opacity="0.85"/>
<polygon points="321.1,211.7 319.9,213.1 318.3,212.7 317.7,211.7 318.0,210.6 319.9,210.1" fill="#cfe3bf" opacity="0.85"/>
<polygon points="304.4,200.9 303.6,202.1 301.9,202.6 300.9,200.9 302.2,200.0 303.6,199.4" fill="#cfe3bf" opacity="0.85"/>
<polygon points="107.2,3.4 106.1,4.8 104.3,4.9 103.3,3.4 104.2,1.8 105.9,2.5" fill="#cfe3bf" opacity="0.85"/>
<polygon points="130.4,23.6 129.8,24.5 128.0,25.4 127.5,23.6 128.1,22.2 129.5,22.6" fill="#cfe3bf" opacity="0.85"/>
<polygon points="164.9,0.7 164.5,3.9 159.8,5.4 158.4,0.7 160.1,-4.5 164.6,-4.1" fill="#cfe3bf" opacity="0.85"/>
<polygon points="157.2,17.7 156.5,21.2 153.1,19.9 151.5,17.7 152.4,15.1 156.2,15.3" fill="#cfe3bf" opacity="0.85"/>
<polygon points="170.0,26.8 167.3,31.8 162.8,30.2 161.0,26.8 163.5,23.3 166.9,23.6" fill="#cfe3bf" opacity="0.85"/>
<polygon points="160.7,16.6 159.5,20.7 154.9,20.1 154.3,16.6 154.8,14.0 158.8,14.3" fill="#cfe3bf" opacity="0.85"/>
<polygon points="118.5,0.9 115.1,3.2 112.1,4.5 110.9,0.9 111.4,-2.9 115.9,-2.4" fill="#cfe3bf" opacity="0.85"/>
<polygon points="156.5,21.1 156.0,25.4 152.5,24.4 149.8,21.1 151.4,16.8 155.1,18.9" fill="#cfe3bf" opacity="0.85"/>
<polygon points="166.4,6.8 165.5,9.0 163.5,9.4 162.5,6.8 163.0,5.2 165.8,5.4" fill="#cfe3bf" opacity="0.85"/>
<polygon points="152.3,2.5 151.7,6.1 148.4,5.5 145.8,2.5 148.5,-1.1 151.4,-0.4" fill="#cfe3bf" opacity="0.85"/>
<polygon points="180.9,24.6 178.3,29.7 172.2,28.0 170.6,24.6 173.2,19.2 176.7,20.6" fill="#cfe3bf" opacity="0.85"/>
<polygon points="158.2,22.7 157.4,24.4 155.2,24.6 153.1,22.7 154.5,21.2 157.7,20.1" fill="#cfe3bf" opacity="0.85"/>
<polygon points="164.3,10.8 163.3,15.1 159.4,13.4 156.7,10.8 159.4,7.9 164.2,5.8" fill="#cfe3bf" opacity="0.85"/>
<polygon points="169.5,20.8 166.8,23.6 162.6,24.7 160.1,20.8 162.8,16.2 166.7,18.3" fill="#cfe3bf" opacity="0.85"/>
<polygon points="108.8,25.7 107.8,27.6 105.4,28.3 104.6,25.7 105.3,24.4 108.0,23.7" fill="#cfe3bf" opacity="0.85"/>
<polygon points="104.9,24.0 102.3,27.7 99.0,28.0 95.0,24.0 99.1,20.9 102.8,20.1" fill="#cfe3bf" opacity="0.85"/>
<polygon points="177.2,28.1 176.5,32.6 171.3,30.6 170.3,28.1 171.1,25.5 175.7,23.6" fill="#cfe3bf" opacity="0.85"/>
<polygon points="180.0,12.8 178.7,15.4 177.0,14.2 175.4,12.8 176.6,10.7 178.8,11.2" fill="#cfe3bf" opacity="0.85"/>
<polygon points="114.7,29.4 113.1,30.8 111.1,31.3 109.9,29.4 111.6,27.8 113.0,27.8" fill="#cfe3bf" opacity="0.85"/>
<polygon points="146.5,14.8 144.5,19.0 141.1,18.8 138.1,14.8 141.0,10.3 144.6,9.9" fill="#cfe3bf" opacity="0.85"/>
<polygon points="118.1,15.4 117.5,16.8 115.5,17.0 113.3,15.4 115.1,13.1 117.7,13.4" fill="#cfe3bf" opacity="0.85"/>
<polygon points="176.3,27.9 175.4,30.0 173.2,29.7 171.8,27.9 173.5,26.5 175.7,25.7" fill="#cfe3bf" opacity="0.85"/>
<polygon points="135.1,10.7 133.4,14.2 129.7,14.5 127.2,10.7 130.2,6.6 133.7,7.8" fill="#cfe3bf" opacity="0.85"/>
<polygon points="147.4,12.6 146.3,15.1 142.7,15.2 141.3,12.6 142.8,10.4 146.8,9.6" fill="#cfe3bf" opacity="0.85"/>
<polygon points="102.8,1.9 102.9,4.8 98.2,4.3 95.0,1.9 98.4,-1.4 102.7,-1.8" fill="#cfe3bf" opacity="0.85"/>
<polygon points="136.4,10.1 135.4,13.4 132.8,12.5 130.9,10.1 131.9,8.1 136.0,7.7" fill="#cfe3bf" opacity="0.85"/>
<polygon points="111.5,12.2 110.0,15.7 107.1,16.1 104.8,12.2 106.5,8.7 110.3,8.7" fill="#cfe3bf" opacity="0.85"/>
<polygon points="112.9,24.7 111.8,27.0 109.1,26.5 108.5,24.7 109.3,22.5 111.7,22.3" fill="#cfe3bf" opacity="0.85"/>
<polygon points="108.6,24.6 108.0,25.8 106.1,26.4 105.2,24.6 106.2,23.1 107.9,23.0" fill="#cfe3bf" opacity="0.85"/>
<polygon points="124.2,28.4 122.5,31.1 119.3,30.5 118.0,28.4 119.3,25.3 122.7,25.3" fill="#cfe3bf" opacity="0.85"/>
<polygon points="139.5,10.0 136.7,14.2 131.8,12.8 130.6,10.0 132.2,6.6 136.2,6.8" fill="#cfe3bf" opacity="0.85"/>
<polygon points="104.8,19.5 103.0,24.1 99.4,22.8 95.3,19.5 99.2,16.6 103.8,16.0" fill="#cfe3bf" opacity="0.85"/>
<polygon points="102.5,5.1 102.4,7.4 98.6,7.0 96.4,5.1 98.6,2.9 101.7,2.7" fill="#cfe3bf" opacity="0.85"/>
<polygon points="167.0,6.0 166.3,7.8 164.0,8.1 162.3,6.0 164.1,4.5 165.8,3.7" fill="#cfe3bf" opacity="0.85"/>
<polygon points="134.7,20.6 132.8,24.4 128.7,25.3 126.4,20.6 129.1,15.5 133.4,16.3" fill="#cfe3bf" opacity="0.85"/>
<polygon points="144.1,24.9 143.1,26.3 141.3,26.2 140.9,24.9 141.6,24.1 143.1,23.5" fill="#cfe3bf" opacity="0.85"/>
<polygon points="180.7,18.8 179.6,21.5 175.0,23.3 173.1,18.8 175.2,15.8 180.1,14.9" fill="#cfe3bf" opacity="0.85"/>
<polygon points="157.7,29.6 157.6,30.9 155.2,30.8 154.2,29.6 155.4,28.3 157.0,27.9" fill="#cfe3bf" opacity="0.85"/>
<polygon points="161.9,9.1 161.7,10.4 160.1,10.9 159.3,9.1 160.2,7.4 161.4,7.5" fill="#cfe3bf" opacity="0.85"/>
<polygon points="149.9,7.0 148.6,8.7 147.0,8.5 144.6,7.0 146.3,4.3 149.1,5.0" fill="#cfe3bf" opacity="0.85"/>
<polygon points="128.7,6.6 127.5,9.8 124.0,8.9 122.7,6.6 124.4,3.1 126.9,3.4" fill="#cfe3bf" opacity="0.85"/>
<polygon points="151.5,0.1 149.5,2.4 146.7,2.4 144.2,0.1 145.9,-2.1 148.9,-2.2" fill="#cfe3bf" opacity="0.85"/>
<polygon points="115,118 160,112 200,118 240,128 275,135 300,150 305,180 290,205 255,200 225,215 200,215 175,210 160,230 140,245 120,240 115,200 130,180 120,150" fill="#e6e3e0"/>
<polygon points="130,130 170,125 185,140 190,170 175,195 150,205 135,190 130,160" fill="#e0dddb"/>
<polygon points="104,179.8 163.8,179.8 201.6,205 176.4,214.5 163.8,236.5 157.5,274.3 132.3,290 119.7,261.7 104,233.4 94.5,205" fill="#e4e2df"/>
<polygon points="170,125 260,128 300,140 290,150 240,150 200,160 175,150" fill="#e4e2df"/>
<polygon points="300,40 333,30 333,100 305,95" fill="#e2ddd8" opacity="0.6"/>
<polygon points="295,75 333,70 333,100 300,98" fill="#f0d8c8" opacity="0.7"/>
<polyline points="333,118 300,115 270,112 240,118 210,125 180,122 165,120 152,140 150,170 146,200 140,230 135,260 128,295" fill="none" stroke="#b4d0dc" stroke-width="2.2"/>
<polyline points="130,0 140,30 150,60 155,90 150,120" fill="none" stroke="#b4d0dc" stroke-width="1.6"/>
<polyline points="0,95 40,90 80,75 110,60" fill="none" stroke="#b4d0dc" stroke-width="1.4"/>
<polyline points="0,220 40,210 80,195 110,190" fill="none" stroke="#b4d0dc" stroke-width="1.4"/>
<ellipse cx="225" cy="118" rx="20" ry="5" fill="#b4d0dc" opacity="0.8"/>
<polyline points="107.8,44.5 98.3,42.0 92.8,41.7 87.5,41.4 81.9,41.6 75.1,47.3" fill="none" stroke="#a4a4a4" stroke-width="0.6" opacity="0.85"/>
<polyline points="275.3,36.5 274.9,50.0 273.5,58.5 269.2,61.8 261.6,62.4 256.8,66.0" fill="none" stroke="#a4a4a4" stroke-width="0.6" opacity="0.85"/>
<polyline points="102.7,240.8 106.0,251.0 110.8,259.7 116.0,261.6 127.0,260.4 134.7,258.7" fill="none" stroke="#a4a4a4" stroke-width="0.6" opacity="0.85"/>
<polyline points="195.0,133.7 187.0,141.7 183.3,151.2 178.1,163.0 172.8,168.3 166.7,168.5" fill="none" stroke="#a4a4a4" stroke-width="0.6" opacity="0.85"/>
<polyline points="139.2,223.4 142.4,227.7 146.6,238.8 149.8,251.3 155.7,260.9 159.6,270.3" fill="none" stroke="#a4a4a4" stroke-width="0.6" opacity="0.85"/>
<polyline points="151.9,247.8 162.1,243.6 167.2,233.5 176.3,223.0 183.5,220.4 193.0,214.9" fill="none" stroke="#a4a4a4" stroke-width="0.6" opacity="0.85"/>
<polyline points="7.5,136.2 12.5,138.6 16.5,143.3 24.1,147.1 26.9,152.1 32.4,160.4" fill="none" stroke="#a4a4a4" stroke-width="0.6" opacity="0.85"/>
<polyline points="294.2,241.7 297.2,233.5 299.0,220.7 303.8,216.5 306.2,209.9 305.5,200.5" fill="none" stroke="#a4a4a4" stroke-width="0.6" opacity="0.85"/>
<polyline points="196.2,77.5 204.5,76.6 218.0,76.7 227.2,79.6 237.0,84.9 249.8,82.0" fill="none" stroke="#a4a4a4" stroke-width="0.6" opacity="0.85"/>
<polyline points="259.7,258.0 260.8,249.5 255.6,240.1 250.4,238.1 243.9,238.8 238.8,240.7" fill="none" stroke="#a4a4a4" stroke-width="0.6" opacity="0.85"/>
<polyline points="0.1,44.6 4.9,46.8 10.4,55.7 16.9,58.9 25.0,60.6 36.7,55.8" fill="none" stroke="#a4a4a4" stroke-width="0.6" opacity="0.85"/>
<polyline points="330.7,137.5 326.4,141.6 322.6,147.9 316.9,150.9 312.6,163.8 310.4,169.7" fill="none" stroke="#a4a4a4" stroke-width="0.6" opacity="0.85"/>
<polyline points="180.9,8.0 173.4,-2.3 171.1,-9.3 167.8,-14.9 166.9,-24.7 169.6,-32.2" fill="none" stroke="#a4a4a4" stroke-width="0.6" opacity="0.85"/>
<polyline points="74.3,239.4 85.2,244.9 91.8,254.6 100.0,259.5 105.1,261.1 111.8,257.9" fill="none" stroke="#a4a4a4" stroke-width="0.6" opacity="0.85"/>
<polyline points="86.3,204.3 98.9,199.6 111.3,205.1 118.1,206.5 124.7,204.9 132.8,198.1" fill="none" stroke="#a4a4a4" stroke-width="0.6" opacity="0.85"/>
<polyline points="299.8,247.9 287.7,246.5 278.4,252.3 266.4,251.0 258.2,246.5 246.1,246.6" fill="none" stroke="#a4a4a4" stroke-width="0.6" opacity="0.85"/>
<polyline points="110.7,236.2 118.8,233.3 129.6,237.4 135.6,236.5 145.5,227.8 151.7,226.4" fill="none" stroke="#a4a4a4" stroke-width="0.6" opacity="0.85"/>
<polyline points="275.2,289.2 267.9,282.4 262.9,281.6 256.2,273.1 248.4,262.2 239.9,252.5" fill="none" stroke="#a4a4a4" stroke-width="0.6" opacity="0.85"/>
<polyline points="275.1,62.3 277.4,69.1 278.7,76.3 280.6,82.2 277.8,89.9 275.0,99.7" fill="none" stroke="#a4a4a4" stroke-width="0.6" opacity="0.85"/>
<polyline points="301.1,124.1 309.6,119.2 314.2,116.9 319.8,113.2 322.2,101.3 319.3,92.5" fill="none" stroke="#a4a4a4" stroke-width="0.6" opacity="0.85"/>
<polyline points="241.5,164.2 236.6,172.9 231.8,176.3 225.5,179.9 217.8,189.0 211.2,196.6" fill="none" stroke="#a4a4a4" stroke-width="0.6" opacity="0.85"/>
<polyline points="253.1,269.2 243.7,270.9 232.6,272.6 223.1,274.9 210.1,278.5 197.2,277.9" fill="none" stroke="#a4a4a4" stroke-width="0.6" opacity="0.85"/>
<polyline points="313.7,76.6 307.8,65.5 302.5,62.6 297.3,60.3 291.6,60.4 280.0,57.2" fill="none" stroke="#a4a4a4" stroke-width="0.6" opacity="0.85"/>
<polyline points="298.7,45.6 299.0,39.3 307.3,28.4 310.1,15.1 310.5,5.7 319.7,-2.7" fill="none" stroke="#a4a4a4" stroke-width="0.6" opacity="0.85"/>
<polyline points="53.8,127.3 47.1,128.4 36.7,133.4 33.3,142.8 32.0,147.8 32.2,158.4" fill="none" stroke="#a4a4a4" stroke-width="0.6" opacity="0.85"/>
<polyline points="170.6,19.0 183.4,23.9 190.6,21.9 197.0,11.8 198.2,5.7 199.2,-7.4" fill="none" stroke="#a4a4a4" stroke-width="0.6" opacity="0.85"/>
<polyline points="272.7,76.3 272.3,86.4 270.3,91.9 274.1,102.4 276.7,107.4 274.2,117.8" fill="none" stroke="#a4a4a4" stroke-width="0.6" opacity="0.85"/>
<polyline points="266.9,24.7 266.6,11.9 265.8,3.9 265.5,-9.4 263.2,-15.1 260.8,-21.8" fill="none" stroke="#a4a4a4" stroke-width="0.6" opacity="0.85"/>
<polyline points="36.4,47.6 44.2,46.4 54.7,41.0 61.3,34.1 63.2,26.2 59.6,20.0" fill="none" stroke="#a4a4a4" stroke-width="0.6" opacity="0.85"/>
<polyline points="5.1,216.3 -4.0,217.9 -9.2,215.0 -13.8,207.3 -20.3,196.7 -26.7,189.5" fill="none" stroke="#a4a4a4" stroke-width="0.6" opacity="0.85"/>
<polyline points="229.0,289.8 218.8,294.8 210.4,296.9 205.6,299.5 202.9,304.4 197.3,309.1" fill="none" stroke="#a4a4a4" stroke-width="0.6" opacity="0.85"/>
<polyline points="54.4,24.9 64.5,20.6 69.7,15.6 74.0,7.5 73.4,-1.5 67.5,-13.8" fill="none" stroke="#a4a4a4" stroke-width="0.6" opacity="0.85"/>
<polyline points="323.9,161.4 318.8,167.3 316.5,171.7 313.8,180.6 311.9,187.1 310.4,192.0" fill="none" stroke="#a4a4a4" stroke-width="0.6" opacity="0.85"/>
<polyline points="88.0,26.5 86.9,31.6 87.7,38.6 87.4,48.4 82.9,58.3 73.8,67.5" fill="none" stroke="#a4a4a4" stroke-width="0.6" opacity="0.85"/>
<polyline points="129.7,96.2 138.8,89.1 143.7,86.9 156.7,88.3 167.7,91.8 172.0,96.3" fill="none" stroke="#a4a4a4" stroke-width="0.6" opacity="0.85"/>
<polyline points="174.4,148.8 185.0,142.3 196.9,137.0 208.1,135.6 212.5,132.8 216.0,125.3" fill="none" stroke="#a4a4a4" stroke-width="0.6" opacity="0.85"/>
<polyline points="34.9,246.6 26.0,240.8 19.8,233.7 7.7,232.9 -0.8,228.7 -10.3,223.3" fill="none" stroke="#a4a4a4" stroke-width="0.6" opacity="0.85"/>
<polyline points="22.0,217.4 26.6,223.2 28.6,229.7 27.5,243.4 26.8,251.8 26.4,263.0" fill="none" stroke="#a4a4a4" stroke-width="0.6" opacity="0.85"/>
<polyline points="255.4,182.0 249.2,180.6 237.7,182.7 228.8,187.4 227.1,192.7 227.9,203.7" fill="none" stroke="#a4a4a4" stroke-width="0.6" opacity="0.85"/>
<polyline points="230.5,199.3 227.9,208.2 226.6,214.1 221.4,218.5 208.0,217.8 201.2,223.8" fill="none" stroke="#a4a4a4" stroke-width="0.6" opacity="0.85"/>
<polyline points="273.0,285.6 267.7,290.0 260.8,289.8 254.6,288.8 241.3,286.2 229.9,291.0" fill="none" stroke="#a4a4a4" stroke-width="0.6" opacity="0.85"/>
<polyline points="169.4,261.6 160.7,251.8 157.2,248.0 147.8,247.7 140.1,248.1 133.5,252.8" fill="none" stroke="#a4a4a4" stroke-width="0.6" opacity="0.85"/>
<polyline points="105.3,247.9 116.8,252.9 129.8,250.3 142.8,252.2 151.0,250.6 164.1,245.6" fill="none" stroke="#a4a4a4" stroke-width="0.6" opacity="0.85"/>
<polyline points="196.2,106.4 192.5,110.4 191.0,122.8 193.9,135.9 198.2,141.9 202.1,147.4" fill="none" stroke="#a4a4a4" stroke-width="0.6" opacity="0.85"/>
<polyline points="124.3,282.1 134.7,279.6 147.0,285.2 157.0,290.8 168.3,288.4 179.6,285.0" fill="none" stroke="#a4a4a4" stroke-width="0.6" opacity="0.85"/>
<polyline points="214.6,84.4 218.0,89.6 222.7,96.1 232.2,102.9 233.5,110.1 233.1,117.8" fill="none" stroke="#a4a4a4" stroke-width="0.6" opacity="0.85"/>
<polyline points="185.6,116.3 191.6,119.7 195.4,128.4 205.3,137.0 205.9,146.0 210.0,151.4" fill="none" stroke="#a4a4a4" stroke-width="0.6" opacity="0.85"/>
<polyline points="30.2,100.9 37.4,102.0 50.0,105.4 56.8,110.8 65.2,115.7 72.8,118.3" fill="none" stroke="#a4a4a4" stroke-width="0.6" opacity="0.85"/>
<polyline points="20.7,81.9 27.3,75.0 37.8,67.8 41.5,61.4 42.5,52.8 42.9,39.2" fill="none" stroke="#a4a4a4" stroke-width="0.6" opacity="0.85"/>
<polyline points="282.6,257.5 291.9,251.0 301.2,251.2 306.1,252.0 319.5,251.8 330.6,258.0" fill="none" stroke="#a4a4a4" stroke-width="0.6" opacity="0.85"/>
<polyline points="323.8,73.3 333.4,74.6 345.7,80.1 353.4,87.7 356.7,96.2 358.2,101.3" fill="none" stroke="#a4a4a4" stroke-width="0.6" opacity="0.85"/>
<polyline points="260.5,68.6 268.0,66.5 272.6,61.0 281.6,54.1 283.3,48.8 286.7,39.1" fill="none" stroke="#a4a4a4" stroke-width="0.6" opacity="0.85"/>
<polyline points="129.2,66.0 121.6,67.1 108.3,70.0 95.3,69.8 88.2,69.9 75.8,75.5" fill="none" stroke="#a4a4a4" stroke-width="0.6" opacity="0.85"/>
<polyline points="234.6,90.7 245.6,92.2 252.9,92.2 265.8,95.8 271.0,95.0 279.0,91.3" fill="none" stroke="#a4a4a4" stroke-width="0.6" opacity="0.85"/>
<polyline points="227.3,58.4 233.3,51.0 236.0,37.5 234.8,25.2 231.3,19.2 230.5,11.6" fill="none" stroke="#a4a4a4" stroke-width="0.6" opacity="0.85"/>
<polyline points="317.0,146.3 323.5,152.1 330.8,163.5 338.6,167.1 352.3,166.7 356.9,163.6" fill="none" stroke="#a4a4a4" stroke-width="0.6" opacity="0.85"/>
<polyline points="20.0,116.0 31.6,115.7 41.3,125.0 47.1,128.1 51.5,139.0 61.4,143.7" fill="none" stroke="#a4a4a4" stroke-width="0.6" opacity="0.85"/>
<polyline points="126.1,110.3 126.2,115.3 129.1,122.9 127.0,128.7 120.8,131.8 111.3,139.7" fill="none" stroke="#a4a4a4" stroke-width="0.6" opacity="0.85"/>
<polyline points="273.7,127.6 281.8,129.8 285.8,135.2 295.6,143.8 304.3,143.6 314.9,148.9" fill="none" stroke="#a4a4a4" stroke-width="0.6" opacity="0.85"/>
<polyline points="13.5,10.3 17.1,16.7 18.5,29.7 21.2,36.6 17.4,46.5 17.6,57.9" fill="none" stroke="#a4a4a4" stroke-width="0.6" opacity="0.85"/>
<polyline points="105.4,81.3 117.4,86.9 128.2,95.0 135.2,94.2 148.7,92.1 155.8,96.7" fill="none" stroke="#a4a4a4" stroke-width="0.6" opacity="0.85"/>
<polyline points="83.6,126.8 78.3,122.8 73.3,112.3 74.1,100.4 76.1,92.7 75.7,84.4" fill="none" stroke="#a4a4a4" stroke-width="0.6" opacity="0.85"/>
<polyline points="260.5,23.3 260.0,30.5 263.1,34.8 267.1,41.6 264.2,54.2 257.9,58.2" fill="none" stroke="#a4a4a4" stroke-width="0.6" opacity="0.85"/>
<polyline points="28.0,28.4 19.4,25.6 10.7,26.4 -0.3,25.4 -11.4,19.5 -15.9,15.4" fill="none" stroke="#a4a4a4" stroke-width="0.6" opacity="0.85"/>
<polyline points="280.0,86.7 268.6,84.2 261.7,86.1 256.7,90.1 246.5,90.7 238.4,93.5" fill="none" stroke="#a4a4a4" stroke-width="0.6" opacity="0.85"/>
<polyline points="330.5,149.7 326.5,159.8 321.1,162.1 309.9,167.5 296.8,166.3 290.6,170.8" fill="none" stroke="#a4a4a4" stroke-width="0.6" opacity="0.85"/>
<polyline points="39.7,55.9 53.1,55.4 65.5,52.3 72.4,49.9 85.8,51.5 94.9,46.5" fill="none" stroke="#a4a4a4" stroke-width="0.6" opacity="0.85"/>
<polyline points="206.4,64.2 205.3,70.9 207.6,81.1 207.4,87.9 212.9,93.7 215.9,99.6" fill="none" stroke="#a4a4a4" stroke-width="0.6" opacity="0.85"/>
<polyline points="104.0,60.0 105.9,54.8 103.6,46.6 101.4,36.0 96.6,31.8 92.1,24.3" fill="none" stroke="#a4a4a4" stroke-width="0.6" opacity="0.85"/>
<polyline points="94.3,90.7 102.7,85.1 108.6,78.6 122.2,75.3 128.2,72.3 135.0,71.6" fill="none" stroke="#a4a4a4" stroke-width="0.6" opacity="0.85"/>
<polyline points="2.0,266.0 -6.7,265.7 -14.0,260.2 -19.1,259.7 -29.7,257.7 -33.5,253.3" fill="none" stroke="#a4a4a4" stroke-width="0.6" opacity="0.85"/>
<polyline points="207.2,109.4 200.7,113.3 189.1,119.7 185.1,128.3 174.1,136.5 171.5,142.1" fill="none" stroke="#a4a4a4" stroke-width="0.6" opacity="0.85"/>
<polyline points="314.0,287.8 305.0,297.6 297.9,308.7 289.4,317.7 286.8,329.5 288.8,337.9" fill="none" stroke="#a4a4a4" stroke-width="0.6" opacity="0.85"/>
<polyline points="281.8,244.6 288.4,250.1 294.7,255.8 301.9,256.6 313.5,262.7 323.2,260.2" fill="none" stroke="#a4a4a4" stroke-width="0.6" opacity="0.85"/>
<polyline points="252.2,11.2 251.6,0.9 251.8,-9.8 249.3,-18.2 247.9,-26.9 248.8,-35.9" fill="none" stroke="#a4a4a4" stroke-width="0.6" opacity="0.85"/>
<polyline points="146.0,6.9 140.7,2.2 135.7,-8.8 132.6,-14.7 129.6,-19.8 121.6,-23.6" fill="none" stroke="#a4a4a4" stroke-width="0.6" opacity="0.85"/>
<polyline points="30.5,130.4 22.1,137.1 19.5,148.4 13.5,155.9 13.9,165.4 17.0,178.6" fill="none" stroke="#a4a4a4" stroke-width="0.6" opacity="0.85"/>
<polyline points="45.3,252.8 57.0,257.0 70.7,255.0 84.1,252.8 89.8,256.0 97.3,267.0" fill="none" stroke="#a4a4a4" stroke-width="0.6" opacity="0.85"/>
<polyline points="21.8,103.5 15.4,92.1 6.0,84.1 -3.4,82.9 -8.2,78.0 -16.9,74.0" fill="none" stroke="#a4a4a4" stroke-width="0.6" opacity="0.85"/>
<polyline points="106.3,10.9 117.3,18.5 125.6,28.6 136.8,32.8 146.3,30.4 154.5,30.0" fill="none" stroke="#a4a4a4" stroke-width="0.6" opacity="0.85"/>
<polyline points="290.7,163.8 288.1,158.4 291.5,148.4 293.5,136.3 290.5,122.7 289.8,114.5" fill="none" stroke="#a4a4a4" stroke-width="0.6" opacity="0.85"/>
<polyline points="254.6,130.5 255.0,135.9 251.9,142.5 243.4,153.4 235.5,161.0 233.1,165.4" fill="none" stroke="#a4a4a4" stroke-width="0.6" opacity="0.85"/>
<polyline points="11.3,44.1 3.4,38.5 1.5,32.6 -6.0,24.7 -11.0,24.4 -16.9,25.5" fill="none" stroke="#a4a4a4" stroke-width="0.6" opacity="0.85"/>
<polyline points="118.9,66.2 113.6,61.9 107.5,54.9 94.6,51.2 88.3,52.0 80.7,59.5" fill="none" stroke="#a4a4a4" stroke-width="0.6" opacity="0.85"/>
<polyline points="290.1,230.7 287.4,235.0 280.1,242.0 274.3,251.1 268.1,263.0 262.6,267.8" fill="none" stroke="#a4a4a4" stroke-width="0.6" opacity="0.85"/>
<polyline points="300.9,13.0 293.7,12.7 284.3,20.0 283.0,29.9 278.3,34.1 274.7,43.9" fill="none" stroke="#a4a4a4" stroke-width="0.6" opacity="0.85"/>
<polyline points="168.8,189.3 167.8,181.5 165.5,176.6 167.6,164.8 170.2,160.4 180.5,154.8" fill="none" stroke="#a4a4a4" stroke-width="0.6" opacity="0.85"/>
<polyline points="154.9,218.8 150.5,222.8 148.4,227.7 146.8,239.4 141.3,250.7 136.0,255.9" fill="none" stroke="#a4a4a4" stroke-width="0.6" opacity="0.85"/>
<polyline points="184.4,128.6 186.4,121.5 193.0,109.5 193.7,96.6 188.8,91.1 178.2,86.3" fill="none" stroke="#a4a4a4" stroke-width="0.6" opacity="0.85"/>
<polyline points="314.6,220.1 307.5,223.8 299.3,234.1 290.6,241.2 278.1,246.9 266.9,252.6" fill="none" stroke="#a4a4a4" stroke-width="0.6" opacity="0.85"/>
<polyline points="232.3,253.0 222.2,253.3 215.7,255.7 210.0,256.5 204.5,253.4 198.8,254.9" fill="none" stroke="#a4a4a4" stroke-width="0.6" opacity="0.85"/>
<polyline points="309.3,101.7 314.7,102.5 324.3,107.1 332.8,115.1 343.0,115.8 355.3,113.9" fill="none" stroke="#a4a4a4" stroke-width="0.6" opacity="0.85"/>
<polyline points="272.9,262.9 280.0,274.1 279.2,280.0 281.1,285.7 292.2,291.7 298.0,300.7" fill="none" stroke="#a4a4a4" stroke-width="0.6" opacity="0.85"/>
<polyline points="274.7,186.3 277.1,191.7 277.0,198.6 279.5,207.0 285.8,210.6 297.1,212.6" fill="none" stroke="#a4a4a4" stroke-width="0.6" opacity="0.85"/>
<polyline points="122.6,94.6 134.9,91.8 140.2,91.7 149.0,90.1 156.8,92.2 165.0,97.7" fill="none" stroke="#a4a4a4" stroke-width="0.6" opacity="0.85"/>
<polyline points="72.1,254.4 75.2,260.1 81.7,262.0 92.2,271.0 101.6,270.1 113.7,268.9" fill="none" stroke="#a4a4a4" stroke-width="0.6" opacity="0.85"/>
<polyline points="61.4,145.9 54.8,149.0 47.5,146.9 36.4,148.9 30.5,149.9 24.8,149.7" fill="none" stroke="#a4a4a4" stroke-width="0.6" opacity="0.85"/>
<polyline points="262.4,205.7 265.8,198.2 268.2,190.0 272.7,186.4 277.9,186.2 284.3,182.5" fill="none" stroke="#a4a4a4" stroke-width="0.6" opacity="0.85"/>
<polyline points="300.1,147.9 293.1,148.9 283.5,150.9 272.0,148.6 264.6,145.1 258.3,144.2" fill="none" stroke="#a4a4a4" stroke-width="0.6" opacity="0.85"/>
<polyline points="280.8,195.3 275.8,187.8 274.4,177.7 268.2,171.0 267.3,163.9 262.8,157.6" fill="none" stroke="#a4a4a4" stroke-width="0.6" opacity="0.85"/>
<polyline points="234.2,248.9 240.8,251.8 250.4,253.2 257.7,250.1 266.3,239.4 271.4,236.4" fill="none" stroke="#a4a4a4" stroke-width="0.6" opacity="0.85"/>
<polyline points="320.5,30.0 308.3,29.4 300.2,25.8 289.5,26.5 284.2,30.9 280.8,35.0" fill="none" stroke="#a4a4a4" stroke-width="0.6" opacity="0.85"/>
<polyline points="132.9,233.3 129.1,223.3 126.6,217.6 124.5,209.2 126.3,196.2 126.5,186.0" fill="none" stroke="#a4a4a4" stroke-width="0.6" opacity="0.85"/>
<polyline points="249.5,124.2 246.6,136.8 239.7,145.8 229.3,149.6 220.2,150.7 210.5,155.0" fill="none" stroke="#a4a4a4" stroke-width="0.6" opacity="0.85"/>
<polyline points="32.6,123.8 38.1,114.6 39.3,105.9 40.1,95.3 39.3,84.3 43.1,78.9" fill="none" stroke="#a4a4a4" stroke-width="0.6" opacity="0.85"/>
<polyline points="217.9,229.6 207.6,238.6 206.4,248.4 211.4,259.4 208.8,268.7 212.4,278.2" fill="none" stroke="#a4a4a4" stroke-width="0.6" opacity="0.85"/>
<polyline points="180.2,211.6 168.3,207.9 160.0,205.1 156.6,199.1 154.7,190.8 155.9,184.8" fill="none" stroke="#a4a4a4" stroke-width="0.6" opacity="0.85"/>
<polyline points="327.8,104.9 336.4,104.8 342.6,98.6 349.5,89.7 352.6,83.0 352.4,71.3" fill="none" stroke="#a4a4a4" stroke-width="0.6" opacity="0.85"/>
<polyline points="313.0,155.5 310.6,163.7 311.7,169.7 308.4,181.6 304.1,189.8 300.3,195.6" fill="none" stroke="#a4a4a4" stroke-width="0.6" opacity="0.85"/>
<polyline points="321.0,104.2 318.6,92.1 316.8,84.6 315.8,78.6 318.7,70.9 324.7,66.5" fill="none" stroke="#a4a4a4" stroke-width="0.6" opacity="0.85"/>
<polyline points="125.3,74.8 122.4,78.9 116.3,83.3 112.2,89.9 107.8,97.6 100.5,105.7" fill="none" stroke="#a4a4a4" stroke-width="0.6" opacity="0.85"/>
<polyline points="120.7,274.0 120.0,261.5 126.8,251.6 127.0,239.1 128.2,234.1 121.1,222.5" fill="none" stroke="#a4a4a4" stroke-width="0.6" opacity="0.85"/>
<polyline points="218.4,73.8 225.5,74.2 232.6,78.2 245.7,77.5 251.7,80.2 256.9,89.3" fill="none" stroke="#a4a4a4" stroke-width="0.6" opacity="0.85"/>
<polyline points="260.2,197.2 272.4,194.6 281.1,187.4 290.4,180.4 300.0,171.7 305.8,167.2" fill="none" stroke="#a4a4a4" stroke-width="0.6" opacity="0.85"/>
<polyline points="78.0,41.1 71.3,47.4 68.9,56.5 66.5,66.1 62.8,69.5 53.7,71.3" fill="none" stroke="#a4a4a4" stroke-width="0.6" opacity="0.85"/>
<polyline points="187.3,196.3 190.5,188.1 195.5,185.5 205.9,182.9 211.6,174.0 221.7,165.3" fill="none" stroke="#a4a4a4" stroke-width="0.6" opacity="0.85"/>
<polyline points="110.0,289.6 97.0,289.1 88.2,296.5 81.2,300.4 72.9,299.8 63.2,299.5" fill="none" stroke="#a4a4a4" stroke-width="0.6" opacity="0.85"/>
<polyline points="256.6,62.2 248.0,67.2 240.4,67.3 232.8,63.1 226.4,59.4 214.5,52.4" fill="none" stroke="#a4a4a4" stroke-width="0.6" opacity="0.85"/>
<polyline points="218.0,233.6 216.3,241.1 212.6,251.2 208.8,254.9 196.8,260.0 191.7,261.8" fill="none" stroke="#a4a4a4" stroke-width="0.6" opacity="0.85"/>
<polyline points="100.0,1.8 97.0,11.9 90.7,22.2 80.8,25.9 70.4,27.8 60.1,26.4" fill="none" stroke="#a4a4a4" stroke-width="0.6" opacity="0.85"/>
<polyline points="226.8,62.7 220.2,52.8 213.9,50.6 202.9,55.3 192.4,52.4 180.0,51.8" fill="none" stroke="#a4a4a4" stroke-width="0.6" opacity="0.85"/>
<polyline points="261.9,165.8 264.2,174.3 268.9,181.8 273.3,194.5 282.0,199.6 288.0,198.3" fill="none" stroke="#a4a4a4" stroke-width="0.6" opacity="0.85"/>
<polyline points="269.8,169.7 274.1,166.8 281.4,159.6 295.2,158.5 303.8,157.4 311.7,150.0" fill="none" stroke="#a4a4a4" stroke-width="0.6" opacity="0.85"/>
<polyline points="70.7,44.8 79.3,37.6 82.9,24.4 78.1,12.6 73.8,9.7 69.5,3.9" fill="none" stroke="#a4a4a4" stroke-width="0.6" opacity="0.85"/>
<polyline points="244.3,55.3 252.6,63.1 255.5,74.3 263.9,80.8 268.9,88.5 268.1,95.7" fill="none" stroke="#a4a4a4" stroke-width="0.6" opacity="0.85"/>
<polyline points="321.1,211.6 329.4,204.5 335.0,203.4 345.1,197.9 351.7,186.9 354.4,182.1" fill="none" stroke="#a4a4a4" stroke-width="0.6" opacity="0.85"/>
<polyline points="122.4,169.6 116.1,170.3 108.4,167.3 99.6,161.2 92.1,157.3 84.0,146.5" fill="none" stroke="#a4a4a4" stroke-width="0.6" opacity="0.85"/>
<polyline points="261.3,167.2 267.1,179.7 268.5,192.0 272.4,201.8 267.7,213.3 263.7,220.0" fill="none" stroke="#a4a4a4" stroke-width="0.6" opacity="0.85"/>
<polyline points="142.7,262.0 133.5,266.8 121.4,264.9 116.4,265.9 109.0,270.7 97.8,275.9" fill="none" stroke="#a4a4a4" stroke-width="0.6" opacity="0.85"/>
<polyline points="295.5,12.5 306.4,5.8 313.2,2.6 325.4,4.1 337.4,9.5 343.1,10.5" fill="none" stroke="#a4a4a4" stroke-width="0.6" opacity="0.85"/>
<polyline points="184.4,235.2 183.2,248.6 186.7,258.4 187.1,267.6 190.8,273.9 192.2,286.0" fill="none" stroke="#a4a4a4" stroke-width="0.6" opacity="0.85"/>
<polyline points="153.1,25.9 158.1,20.9 168.5,12.9 178.2,12.5 188.4,11.7 194.1,8.1" fill="none" stroke="#a4a4a4" stroke-width="0.6" opacity="0.85"/>
<polyline points="60.2,206.8 53.9,212.8 49.2,217.0 47.7,230.9 48.2,236.8 46.8,248.8" fill="none" stroke="#a4a4a4" stroke-width="0.6" opacity="0.85"/>
<polyline points="52.0,176.2 49.0,180.4 50.6,194.2 46.4,202.6 42.4,208.7 34.9,213.4" fill="none" stroke="#a4a4a4" stroke-width="0.6" opacity="0.85"/>
<polyline points="315.2,226.3 321.9,223.5 324.7,217.3 324.3,211.6 317.1,204.6 315.3,195.7" fill="none" stroke="#a4a4a4" stroke-width="0.6" opacity="0.85"/>
<polyline points="315.4,268.4 322.7,273.0 336.3,272.3 345.4,268.1 358.7,265.2 367.3,265.7" fill="none" stroke="#a4a4a4" stroke-width="0.6" opacity="0.85"/>
<polyline points="149.3,47.1 155.2,50.9 162.4,49.7 174.4,44.5 186.6,47.5 197.3,41.8" fill="none" stroke="#a4a4a4" stroke-width="0.6" opacity="0.85"/>
<polyline points="236.3,190.8 240.7,186.2 253.1,181.0 260.7,180.1 272.5,180.5 279.1,176.0" fill="none" stroke="#a4a4a4" stroke-width="0.6" opacity="0.85"/>
<polyline points="85.6,36.6 79.9,40.9 76.1,51.4 80.8,61.8 85.1,65.0 86.7,71.8" fill="none" stroke="#a4a4a4" stroke-width="0.6" opacity="0.85"/>
<polyline points="311.0,255.7 313.6,247.0 309.0,234.5 311.1,224.1 312.0,216.1 317.5,208.6" fill="none" stroke="#a4a4a4" stroke-width="0.6" opacity="0.85"/>
<polyline points="209.2,42.1 218.0,49.3 222.6,53.7 224.1,60.9 226.3,67.0 234.6,76.4" fill="none" stroke="#a4a4a4" stroke-width="0.6" opacity="0.85"/>
<polyline points="111.4,49.5 99.1,54.0 91.2,65.4 92.6,78.3 91.4,85.1 90.5,92.7" fill="none" stroke="#a4a4a4" stroke-width="0.6" opacity="0.85"/>
<polyline points="85.8,59.5 71.9,60.4 67.1,57.1 54.5,53.5 44.0,58.4 34.1,67.9" fill="none" stroke="#a4a4a4" stroke-width="0.6" opacity="0.85"/>
<polyline points="5.3,238.1 5.4,243.1 0.5,251.5 0.3,260.4 -4.1,265.8 -8.6,270.2" fill="none" stroke="#a4a4a4" stroke-width="0.6" opacity="0.85"/>
<polyline points="60.0,227.3 56.2,223.0 45.9,221.1 38.5,219.8 28.5,222.9 16.2,222.4" fill="none" stroke="#a4a4a4" stroke-width="0.6" opacity="0.85"/>
<polyline points="194.1,59.7 200.3,65.8 202.6,70.8 202.0,78.8 194.7,89.3 191.8,93.5" fill="none" stroke="#a4a4a4" stroke-width="0.6" opacity="0.85"/>
<polyline points="303.1,140.6 305.6,134.4 312.2,129.4 315.4,121.7 317.9,117.3 322.8,109.7" fill="none" stroke="#a4a4a4" stroke-width="0.6" opacity="0.85"/>
<polyline points="171.7,35.6 175.3,23.3 175.2,11.9 172.9,0.4 162.9,-7.6 161.3,-16.9" fill="none" stroke="#a4a4a4" stroke-width="0.6" opacity="0.85"/>
<polyline points="170.9,156.5 159.1,163.5 155.4,169.0 155.7,176.2 153.3,180.9 155.4,192.0" fill="none" stroke="#a4a4a4" stroke-width="0.6" opacity="0.85"/>
<polyline points="65.0,5.2 57.8,-1.4 55.0,-6.6 56.0,-18.0 52.4,-22.9 46.6,-30.5" fill="none" stroke="#a4a4a4" stroke-width="0.6" opacity="0.85"/>
<polyline points="93.1,36.0 89.1,45.5 83.9,49.1 73.5,54.5 67.0,65.1 58.9,67.7" fill="none" stroke="#a4a4a4" stroke-width="0.6" opacity="0.85"/>
<polyline points="140.0,247.7 126.5,247.8 119.3,244.4 111.2,244.3 97.5,245.4 85.3,240.2" fill="none" stroke="#a4a4a4" stroke-width="0.6" opacity="0.85"/>
<polyline points="271.4,250.1 284.1,254.9 287.7,261.2 294.0,269.8 301.4,276.2 310.3,276.5" fill="none" stroke="#a4a4a4" stroke-width="0.6" opacity="0.85"/>
<polyline points="168.1,6.1 167.4,18.1 160.1,25.9 147.8,30.0 142.7,28.4 136.3,24.8" fill="none" stroke="#a4a4a4" stroke-width="0.6" opacity="0.85"/>
<polyline points="225.9,80.7 219.7,72.1 211.4,67.1 199.1,61.3 191.4,60.6 185.7,58.6" fill="none" stroke="#a4a4a4" stroke-width="0.6" opacity="0.85"/>
<polyline points="197.9,282.0 189.1,284.6 182.9,286.1 178.7,290.7 175.3,298.6 174.8,305.8" fill="none" stroke="#a4a4a4" stroke-width="0.6" opacity="0.85"/>
<polyline points="29.3,161.2 36.1,153.7 41.7,149.9 50.6,147.5 60.9,145.7 68.5,143.9" fill="none" stroke="#a4a4a4" stroke-width="0.6" opacity="0.85"/>
<polyline points="80.7,65.4 70.5,66.5 65.3,72.9 58.5,75.1 49.3,77.1 37.6,84.6" fill="none" stroke="#a4a4a4" stroke-width="0.6" opacity="0.85"/>
<polyline points="98.4,227.8 110.7,231.6 116.1,232.7 125.1,233.0 130.6,235.3 144.2,234.9" fill="none" stroke="#a4a4a4" stroke-width="0.6" opacity="0.85"/>
<polyline points="246.0,45.6 242.6,56.1 236.6,67.3 228.4,72.4 216.9,74.5 207.9,72.3" fill="none" stroke="#a4a4a4" stroke-width="0.6" opacity="0.85"/>
<polyline points="261.4,209.0 266.8,197.4 262.6,186.2 260.6,177.0 265.6,168.2 270.2,157.0" fill="none" stroke="#a4a4a4" stroke-width="0.6" opacity="0.85"/>
<polyline points="290.6,179.2 284.5,185.9 277.7,189.4 269.8,195.5 264.5,201.4 252.7,206.0" fill="none" stroke="#a4a4a4" stroke-width="0.6" opacity="0.85"/>
<polyline points="166.4,131.0 170.5,135.7 176.4,144.1 189.0,148.1 201.6,148.4 213.2,155.7" fill="none" stroke="#a4a4a4" stroke-width="0.6" opacity="0.85"/>
<polyline points="68.0,125.8 69.2,120.5 72.3,111.5 82.3,105.1 94.5,98.2 103.1,93.8" fill="none" stroke="#a4a4a4" stroke-width="0.6" opacity="0.85"/>
<polyline points="228.2,114.9 222.2,120.4 211.1,120.7 205.2,120.7 196.7,122.3 186.6,123.2" fill="none" stroke="#a4a4a4" stroke-width="0.6" opacity="0.85"/>
<polyline points="293.0,284.5 282.5,286.4 275.9,281.8 266.2,274.2 258.4,273.1 250.7,263.4" fill="none" stroke="#a4a4a4" stroke-width="0.6" opacity="0.85"/>
<polyline points="170.7,32.6 182.3,28.2 194.1,33.5 200.3,35.4 209.9,35.0 216.5,34.8" fill="none" stroke="#a4a4a4" stroke-width="0.6" opacity="0.85"/>
<polyline points="60.7,185.9 48.0,180.3 43.6,177.1 32.9,171.5 21.9,169.5 15.6,173.9" fill="none" stroke="#a4a4a4" stroke-width="0.6" opacity="0.85"/>
<polyline points="280.4,172.9 272.5,167.8 266.6,163.3 260.4,155.7 261.6,145.6 261.4,139.5" fill="none" stroke="#a4a4a4" stroke-width="0.6" opacity="0.85"/>
<polyline points="52.2,224.1 58.7,224.2 71.1,225.1 83.0,228.1 87.6,225.8 95.5,225.6" fill="none" stroke="#a4a4a4" stroke-width="0.6" opacity="0.85"/>
<polyline points="238.2,104.4 242.8,108.1 245.2,118.1 249.3,126.1 252.7,130.5 253.0,140.7" fill="none" stroke="#a4a4a4" stroke-width="0.6" opacity="0.85"/>
<polyline points="319.6,129.7 314.5,127.8 308.1,116.9 298.5,108.0 296.0,100.7 293.9,87.2" fill="none" stroke="#a4a4a4" stroke-width="0.6" opacity="0.85"/>
<polyline points="165.0,280.2 167.5,291.4 172.4,297.5 173.0,306.8 170.2,313.4 171.2,321.6" fill="none" stroke="#a4a4a4" stroke-width="0.6" opacity="0.85"/>
<polyline points="62.1,286.6 60.0,292.3 56.7,300.0 55.3,305.5 59.6,317.1 63.5,323.1" fill="none" stroke="#a4a4a4" stroke-width="0.6" opacity="0.85"/>
<polyline points="63.7,83.7 71.7,91.1 77.4,94.1 81.4,98.4 92.6,103.9 101.5,102.6" fill="none" stroke="#a4a4a4" stroke-width="0.6" opacity="0.85"/>
<polyline points="278.5,237.5 286.8,245.4 298.3,252.7 311.8,254.1 318.8,254.9 325.0,255.1" fill="none" stroke="#a4a4a4" stroke-width="0.6" opacity="0.85"/>
<polyline points="235.3,76.9 242.6,73.0 249.1,64.8 251.8,52.2 248.1,43.3 245.7,36.3" fill="none" stroke="#a4a4a4" stroke-width="0.6" opacity="0.85"/>
<polyline points="257.0,113.5 253.4,106.6 249.9,102.0 238.3,97.0 227.4,95.8 218.6,100.7" fill="none" stroke="#a4a4a4" stroke-width="0.6" opacity="0.85"/>
<polyline points="120.4,147.6 123.4,154.8 128.0,158.9 131.5,165.5 139.5,176.1 142.1,188.7" fill="none" stroke="#a4a4a4" stroke-width="0.6" opacity="0.85"/>
<polyline points="286.8,39.0 293.0,48.2 295.6,56.0 300.5,65.8 301.5,72.9 298.3,80.4" fill="none" stroke="#a4a4a4" stroke-width="0.6" opacity="0.85"/>
<polyline points="209.4,53.6 211.6,65.0 210.7,70.3 214.3,75.7 221.1,79.4 226.1,81.1" fill="none" stroke="#a4a4a4" stroke-width="0.6" opacity="0.85"/>
<polyline points="103.5,188.3 102.5,198.4 99.4,205.0 95.6,215.5 95.1,220.4 88.0,230.1" fill="none" stroke="#a4a4a4" stroke-width="0.6" opacity="0.85"/>
<polyline points="95.3,12.7 99.3,9.0 101.7,3.5 107.1,-0.9 118.8,-1.2 127.5,-8.4" fill="none" stroke="#a4a4a4" stroke-width="0.6" opacity="0.85"/>
<polyline points="131.1,220.5 131.9,214.8 138.6,209.0 149.8,208.7 161.5,213.0 169.2,217.9" fill="none" stroke="#a4a4a4" stroke-width="0.6" opacity="0.85"/>
<polyline points="18.1,206.0 6.0,211.6 -0.2,221.7 1.9,232.9 -0.2,239.9 -5.3,252.6" fill="none" stroke="#a4a4a4" stroke-width="0.6" opacity="0.85"/>
<polyline points="212.3,160.5 217.6,166.7 222.8,171.2 228.4,173.7 236.5,181.3 243.3,183.6" fill="none" stroke="#a4a4a4" stroke-width="0.6" opacity="0.85"/>
<polyline points="171.6,131.3 177.8,126.7 184.1,126.5 192.0,127.1 200.4,132.5 203.9,138.0" fill="none" stroke="#a4a4a4" stroke-width="0.6" opacity="0.85"/>
<polyline points="222.0,176.6 209.7,174.4 202.8,177.6 197.4,181.8 195.8,189.2 198.9,200.0" fill="none" stroke="#a4a4a4" stroke-width="0.6" opacity="0.85"/>
<polyline points="149.2,33.3 145.8,40.9 146.5,46.5 157.4,55.2 160.1,60.3 162.2,73.9" fill="none" stroke="#a4a4a4" stroke-width="0.6" opacity="0.85"/>
<polyline points="187.7,32.1 181.1,33.3 176.0,33.8 166.9,28.1 157.3,18.7 153.4,12.6" fill="none" stroke="#a4a4a4" stroke-width="0.6" opacity="0.85"/>
<polyline points="81.9,40.9 92.2,48.1 98.6,50.0 109.6,56.1 112.0,62.2 111.1,74.6" fill="none" stroke="#a4a4a4" stroke-width="0.6" opacity="0.85"/>
<polyline points="247.2,96.4 246.3,104.2 247.4,114.1 251.2,126.0 254.7,130.0 260.9,138.7" fill="none" stroke="#a4a4a4" stroke-width="0.6" opacity="0.85"/>
<polyline points="273.0,208.1 282.4,209.2 288.7,209.9 298.7,207.8 305.9,199.2 307.2,190.3" fill="none" stroke="#a4a4a4" stroke-width="0.6" opacity="0.85"/>
<polyline points="322.9,26.5 329.6,27.5 334.0,29.9 340.2,41.0 340.7,49.8 345.0,59.9" fill="none" stroke="#a4a4a4" stroke-width="0.6" opacity="0.85"/>
<polyline points="171.4,124.3 166.5,134.1 155.6,141.4 152.3,148.4 148.8,157.8 148.1,164.5" fill="none" stroke="#a4a4a4" stroke-width="0.6" opacity="0.85"/>
<polyline points="28.3,95.5 16.8,89.1 10.4,76.9 13.1,66.7 16.9,62.7 25.9,57.3" fill="none" stroke="#a4a4a4" stroke-width="0.6" opacity="0.85"/>
<polyline points="98.9,168.5 109.2,165.0 115.6,160.1 120.8,159.9 130.4,154.2 135.1,150.9" fill="none" stroke="#a4a4a4" stroke-width="0.6" opacity="0.85"/>
<polyline points="219.9,109.7 210.8,106.2 203.2,102.3 196.7,103.2 187.9,98.6 175.2,100.4" fill="none" stroke="#a4a4a4" stroke-width="0.6" opacity="0.85"/>
<polyline points="84.4,28.0 75.2,29.9 68.2,30.8 62.2,30.8 51.9,30.6 45.0,35.9" fill="none" stroke="#a4a4a4" stroke-width="0.6" opacity="0.85"/>
<polyline points="24.5,129.7 32.6,121.6 38.2,119.5 48.7,124.1 60.9,121.4 66.9,118.9" fill="none" stroke="#a4a4a4" stroke-width="0.6" opacity="0.85"/>
<polyline points="319.7,166.1 314.7,155.2 308.3,152.2 303.3,151.0 296.9,148.4 285.5,147.7" fill="none" stroke="#a4a4a4" stroke-width="0.6" opacity="0.85"/>
<polyline points="141.8,262.1 139.7,252.3 145.3,240.8 144.4,229.1 140.5,217.9 139.9,205.5" fill="none" stroke="#a4a4a4" stroke-width="0.6" opacity="0.85"/>
<polyline points="40.9,110.0 47.7,100.8 46.7,90.4 40.0,83.0 38.5,77.2 43.1,67.1" fill="none" stroke="#a4a4a4" stroke-width="0.6" opacity="0.85"/>
<polyline points="84.8,57.0 74.8,54.9 70.0,57.0 63.8,67.5 63.5,77.5 66.8,88.1" fill="none" stroke="#a4a4a4" stroke-width="0.6" opacity="0.85"/>
<polyline points="126.8,42.6 135.2,35.1 148.4,32.0 152.7,25.2 152.7,15.7 159.6,5.6" fill="none" stroke="#a4a4a4" stroke-width="0.6" opacity="0.85"/>
<polyline points="11.8,53.8 17.4,47.3 21.4,42.3 29.4,39.4 39.6,42.1 46.9,38.8" fill="none" stroke="#a4a4a4" stroke-width="0.6" opacity="0.85"/>
<polyline points="72.0,263.7 65.6,264.8 57.1,268.4 48.9,270.6 44.5,273.1 37.1,276.0" fill="none" stroke="#a4a4a4" stroke-width="0.6" opacity="0.85"/>
<polyline points="6.8,135.5 11.2,130.9 17.5,127.1 23.4,119.6 26.3,109.9 30.7,97.0" fill="none" stroke="#a4a4a4" stroke-width="0.6" opacity="0.85"/>
<polyline points="330.4,10.1 321.6,0.7 318.2,-9.4 317.3,-17.6 312.0,-28.6 313.9,-41.9" fill="none" stroke="#a4a4a4" stroke-width="0.6" opacity="0.85"/>
<polyline points="226.9,89.7 231.2,81.1 236.3,74.8 242.3,68.5 242.8,60.5 239.7,46.9" fill="none" stroke="#a4a4a4" stroke-width="0.6" opacity="0.85"/>
<polyline points="160.3,108.3 164.0,115.6 168.4,118.1 172.4,126.3 177.6,135.0 182.5,139.2" fill="none" stroke="#a4a4a4" stroke-width="0.6" opacity="0.85"/>
<polyline points="22.1,88.9 15.4,96.4 7.5,97.5 -1.4,92.3 -7.9,93.2 -21.8,93.4" fill="none" stroke="#a4a4a4" stroke-width="0.6" opacity="0.85"/>
<polyline points="118.9,228.5 113.3,227.7 100.3,226.2 93.2,228.0 89.8,233.5 87.6,244.6" fill="none" stroke="#a4a4a4" stroke-width="0.6" opacity="0.85"/>
<polyline points="72.7,117.9 74.6,130.5 74.0,137.3 67.9,149.5 64.5,154.1 52.9,159.7" fill="none" stroke="#a4a4a4" stroke-width="0.6" opacity="0.85"/>
<polyline points="113.6,40.3 117.8,52.5 119.2,65.7 123.5,72.4 125.3,83.1 128.7,93.7" fill="none" stroke="#a4a4a4" stroke-width="0.6" opacity="0.85"/>
<polyline points="112.5,16.9 109.3,27.1 108.9,36.5 107.5,43.7 106.8,48.8 99.5,55.7" fill="none" stroke="#a4a4a4" stroke-width="0.6" opacity="0.85"/>
<polyline points="328.8,16.5 325.0,9.5 319.2,6.9 307.4,8.7 298.9,17.6 293.0,25.5" fill="none" stroke="#a4a4a4" stroke-width="0.6" opacity="0.85"/>
<polyline points="196.0,163.7 192.7,156.4 192.4,149.1 196.0,137.8 201.2,132.1 214.0,126.8" fill="none" stroke="#a4a4a4" stroke-width="0.6" opacity="0.85"/>
<polyline points="150.9,82.1 146.8,77.4 137.6,76.8 126.2,73.1 112.3,71.8 101.2,75.8" fill="none" stroke="#a4a4a4" stroke-width="0.6" opacity="0.85"/>
<polyline points="29.9,8.2 39.4,9.6 45.8,11.1 50.8,17.7 56.9,20.1 66.7,29.1" fill="none" stroke="#a4a4a4" stroke-width="0.6" opacity="0.85"/>
<polyline points="54.0,8.6 50.7,-4.9 48.2,-15.3 42.4,-26.1 38.3,-32.8 38.8,-38.8" fill="none" stroke="#a4a4a4" stroke-width="0.6" opacity="0.85"/>
<polyline points="244.2,19.3 234.9,10.6 224.8,10.0 211.6,11.3 203.0,5.1 195.8,3.8" fill="none" stroke="#a4a4a4" stroke-width="0.6" opacity="0.85"/>
<polyline points="87.4,128.0 94.0,137.8 96.7,145.0 93.8,151.3 90.5,156.8 79.0,162.4" fill="none" stroke="#a4a4a4" stroke-width="0.6" opacity="0.85"/>
<polyline points="89.0,221.7 89.9,213.8 90.9,200.8 86.0,190.8 83.3,182.1 81.1,169.4" fill="none" stroke="#a4a4a4" stroke-width="0.6" opacity="0.85"/>
<polyline points="69.9,260.7 58.3,266.0 50.7,276.3 43.1,277.4 39.4,282.2 34.4,282.9" fill="none" stroke="#a4a4a4" stroke-width="0.6" opacity="0.85"/>
<polyline points="303.6,44.5 299.2,39.6 296.7,34.4 288.2,24.2 283.7,12.1 285.9,7.2" fill="none" stroke="#a4a4a4" stroke-width="0.6" opacity="0.85"/>
<polyline points="78.1,233.7 69.5,229.5 60.7,229.4 56.4,232.3 48.7,231.0 44.4,226.7" fill="none" stroke="#a4a4a4" stroke-width="0.6" opacity="0.85"/>
<polyline points="162.3,40.1 155.9,49.2 155.4,60.9 155.2,66.9 156.9,76.2 153.2,83.4" fill="none" stroke="#a4a4a4" stroke-width="0.6" opacity="0.85"/>
<polyline points="71.6,285.4 78.6,282.7 83.3,277.0 83.3,271.6 83.4,263.0 84.2,254.8" fill="none" stroke="#a4a4a4" stroke-width="0.6" opacity="0.85"/>
<polyline points="3.5,203.0 -1.6,194.5 -4.8,181.0 -0.8,170.3 0.8,162.6 1.8,148.9" fill="none" stroke="#a4a4a4" stroke-width="0.6" opacity="0.85"/>
<polyline points="120.0,160.0 200.0,150.0 260.0,160.0" fill="none" stroke="#ffffff" stroke-width="1.5"/>
<polyline points="150.0,125.0 160.0,200.0 150.0,240.0" fill="none" stroke="#ffffff" stroke-width="1.5"/>
<polyline points="180.0,130.0 200.0,180.0 230.0,210.0" fill="none" stroke="#ffffff" stroke-width="1.5"/>
<polyline points="125.0,190.0 180.0,185.0 240.0,190.0" fill="none" stroke="#ffffff" stroke-width="1.5"/>
<polyline points="34.0,49.7 52.4,60.2 68.1,65.4 86.4,60.2 104.7,52.4 120.4,34.0 133.5,47.1 146.6,52.4" fill="none" stroke="#7d7d7d" stroke-width="1.1" stroke-linejoin="round"/>
<polyline points="167.9,0.0 169.2,15.7 175.7,49.7 178.4,68.1 182.3,86.4 175.0,110.0 165.0,125.0" fill="none" stroke="#7d7d7d" stroke-width="1.1" stroke-linejoin="round"/>
<polyline points="225.5,0.0 204.5,26.2 194.1,47.1 191.4,65.4" fill="none" stroke="#7d7d7d" stroke-width="1.1" stroke-linejoin="round"/>
<polyline points="112.6,179.1 111.3,197.4 112.6,210.5 107.3,231.5 109.9,249.8 128.3,278.9 120.0,295.0" fill="none" stroke="#7d7d7d" stroke-width="1.1" stroke-linejoin="round"/>
<polyline points="141.4,158.2 145.3,171.3 141.4,197.4 130.9,236.7 123.0,262.9 115.0,295.0" fill="none" stroke="#7d7d7d" stroke-width="1.1" stroke-linejoin="round"/>
<polyline points="167.0,188.3 193.2,200.0 229.8,218.4 256.0,226.2 287.4,236.7 333.0,255.0" fill="none" stroke="#7d7d7d" stroke-width="1.1" stroke-linejoin="round"/>
<polyline points="290.0,132.0 292.7,158.2 290.0,197.4 287.4,226.2 292.7,244.6 300.5,278.9 303.0,295.0" fill="none" stroke="#7d7d7d" stroke-width="1.1" stroke-linejoin="round"/>
<polyline points="0.0,40.0 20.0,45.0 34.0,49.7" fill="none" stroke="#7d7d7d" stroke-width="1.1" stroke-linejoin="round"/>
<polyline points="0.0,190.0 30.0,175.0 60.0,160.0" fill="none" stroke="#7d7d7d" stroke-width="1.1" stroke-linejoin="round"/>
<polyline points="140.0,100.0 150.0,115.0 160.0,125.0" fill="none" stroke="#7d7d7d" stroke-width="1.1" stroke-linejoin="round"/>
<polyline points="300.0,250.0 333.0,270.0" fill="none" stroke="#7d7d7d" stroke-width="1.1" stroke-linejoin="round"/>
<polyline points="69.4,152.9 66.8,176.5 65.4,194.8 70.7,207.9 68.1,226.2 61.5,247.2 55.0,260.3 51.0,278.9 50.0,295.0" fill="none" stroke="#f0b25f" stroke-width="1.5" stroke-linejoin="round"/>
<polyline points="99.5,236.7 96.9,247.2 83.8,257.7 70.7,268.1 62.8,278.9 58.0,295.0" fill="none" stroke="#f0b25f" stroke-width="1.5" stroke-linejoin="round"/>
<polyline points="99.5,247.2 107.3,262.9 112.6,278.9 114.0,295.0" fill="none" stroke="#f0b25f" stroke-width="1.5" stroke-linejoin="round"/>
<polyline points="225.5,2.6 212.4,15.7 201.9,28.8 196.7,41.9 191.4,47.1" fill="none" stroke="#f0b25f" stroke-width="1.5" stroke-linejoin="round"/>
<polyline points="201.9,107.3 217.6,96.9 241.2,89.0 264.7,83.8 292.0,77.2 333.0,70.0" fill="none" stroke="#f0b25f" stroke-width="1.5" stroke-linejoin="round"/>
<polyline points="167.0,142.5 198.4,147.7 235.1,145.1 266.5,143.8 313.6,143.8 333.0,150.0" fill="none" stroke="#f0b25f" stroke-width="1.5" stroke-linejoin="round"/>
<polyline points="167.0,184.4 190.6,192.2 219.4,202.7 253.4,218.4 282.2,231.5 303.1,239.3 333.0,250.0" fill="none" stroke="#f0b25f" stroke-width="1.5" stroke-linejoin="round"/>
<polyline points="287.4,166.0 287.4,197.4 279.6,210.5" fill="none" stroke="#f0b25f" stroke-width="1.5" stroke-linejoin="round"/>
<polyline points="0.0,75.9 13.1,78.5 23.6,86.4 15.7,99.5 5.2,117.8 0.0,128.3" fill="none" stroke="#f0b25f" stroke-width="1.5" stroke-linejoin="round"/>
<polyline points="73.3,65.4 81.2,73.3 89.0,78.5" fill="none" stroke="#f0b25f" stroke-width="1.5" stroke-linejoin="round"/>
<polyline points="134.8,150.0 170.0,155.0 200.0,150.0" fill="none" stroke="#f0b25f" stroke-width="1.5" stroke-linejoin="round"/>
<polyline points="150.0,140.0 155.0,180.0 152.0,200.0" fill="none" stroke="#f0b25f" stroke-width="1.5" stroke-linejoin="round"/>
<polyline points="170.0,130.0 175.0,170.0 190.0,190.0" fill="none" stroke="#f0b25f" stroke-width="1.5" stroke-linejoin="round"/>
<polyline points="120.0,150.0 125.0,120.0 135.0,100.0 140.0,60.0 150.0,20.0 155.0,0.0" fill="none" stroke="#f0b25f" stroke-width="1.5" stroke-linejoin="round"/>
<polyline points="30.0,0.0 40.0,15.0 35.0,30.0" fill="none" stroke="#f0b25f" stroke-width="1.5" stroke-linejoin="round"/>
<polyline points="240.0,40.0 260.0,30.0 280.0,10.0" fill="none" stroke="#f0b25f" stroke-width="1.5" stroke-linejoin="round"/>
<polyline points="200.0,230.0 210.0,260.0 215.0,295.0" fill="none" stroke="#f0b25f" stroke-width="1.5" stroke-linejoin="round"/>
<polyline points="150.0,210.0 160.0,240.0 170.0,295.0" fill="none" stroke="#f0b25f" stroke-width="1.5" stroke-linejoin="round"/>
<polyline points="220.0,160.0 250.0,155.0 300.0,120.0" fill="none" stroke="#f0b25f" stroke-width="1.5" stroke-linejoin="round"/>
<polyline points="320.0,170.0 333.0,200.0" fill="none" stroke="#f0b25f" stroke-width="1.5" stroke-linejoin="round"/>
<polyline points="0.0,30.0 15.0,25.0 28.0,10.0" fill="none" stroke="#f0b25f" stroke-width="1.5" stroke-linejoin="round"/>
<polyline points="129.2,129.1 163.9,122.1 180.1,126.7" fill="none" stroke="#f0b25f" stroke-width="1.5" stroke-linejoin="round"/>
<polyline points="106.0,145.3 133.8,138.3 163.9,140.6 198.6,145.3 233.4,149.9" fill="none" stroke="#f0b25f" stroke-width="1.5" stroke-linejoin="round"/>
<polyline points="163.9,161.5 187.1,168.4 205.6,173.1 228.7,184.6 276.0,203.2" fill="none" stroke="#f0b25f" stroke-width="1.5" stroke-linejoin="round"/>
<polyline points="140.7,189.3 175.5,184.6 198.6,180.0" fill="none" stroke="#f0b25f" stroke-width="1.5" stroke-linejoin="round"/>
<polyline points="156.9,221.7 159.3,196.2 152.3,173.1 163.9,149.9 161.6,126.7" fill="none" stroke="#f0b25f" stroke-width="1.5" stroke-linejoin="round"/>
<polyline points="205.6,133.7 205.6,154.5 203.3,184.6" fill="none" stroke="#f0b25f" stroke-width="1.5" stroke-linejoin="round"/>
<polyline points="245.0,126.7 235.7,152.2" fill="none" stroke="#f0b25f" stroke-width="1.5" stroke-linejoin="round"/>
<polyline points="226.4,189.3 221.8,221.7" fill="none" stroke="#f0b25f" stroke-width="1.5" stroke-linejoin="round"/>
<polyline points="175.5,124.4 182.4,131.4 191.7,145.3 194.0,161.5 182.4,180.0" fill="none" stroke="#f0b25f" stroke-width="1.5" stroke-linejoin="round"/>
<polyline points="133.8,161.5 143.1,168.4 152.3,184.6 154.6,203.2" fill="none" stroke="#f0b25f" stroke-width="1.5" stroke-linejoin="round"/>
<polyline points="106.0,161.5 119.9,163.8 136.1,159.2" fill="none" stroke="#f0b25f" stroke-width="1.5" stroke-linejoin="round"/>
<polyline points="254.2,138.3 268.1,147.6 276.0,145.3" fill="none" stroke="#f0b25f" stroke-width="1.5" stroke-linejoin="round"/>
<polyline points="83.8,0.0 89.0,10.5 92.9,26.2 94.2,52.4 95.5,73.3 102.1,83.8 109.9,104.7 116.5,123.0 125.0,140.0" fill="none" stroke="#e0668a" stroke-width="2.3" stroke-linejoin="round"/>
<polyline points="89.0,10.5 98.2,10.5 110.0,15.7 123.0,20.9 136.1,31.4 150.0,35.0 175.7,34.0" fill="none" stroke="#e0668a" stroke-width="2.3" stroke-linejoin="round"/>
<polyline points="80.0,0.0 98.2,10.5 92.0,26.0" fill="none" stroke="#e0668a" stroke-width="2.3" stroke-linejoin="round"/>
<polyline points="0.0,61.5 10.5,62.8 26.2,65.4 36.6,69.4 45.8,70.7 52.4,73.3 56.3,78.5 61.5,86.4 62.8,96.9 68.1,99.5 83.8,98.2 96.9,86.4" fill="none" stroke="#e0668a" stroke-width="2.3" stroke-linejoin="round"/>
<polyline points="36.0,70.0 45.0,76.0 52.0,78.0" fill="none" stroke="#e0668a" stroke-width="2.3" stroke-linejoin="round"/>
<polyline points="175.7,34.0 186.2,49.7 191.4,60.2 192.8,73.3 196.7,91.6 200.6,110.0 201.9,115.2 200.0,125.0 188.0,140.0" fill="none" stroke="#e0668a" stroke-width="2.3" stroke-linejoin="round"/>
<polyline points="191.4,65.4 212.4,65.4 235.9,69.4 251.7,75.9 259.5,86.4 262.0,89.0 277.8,78.5 298.5,73.9 333.0,62.0" fill="none" stroke="#e0668a" stroke-width="2.3" stroke-linejoin="round"/>
<polyline points="201.9,115.2 220.2,107.3 243.8,102.1 264.7,96.9 292.0,86.4 333.0,75.0" fill="none" stroke="#e0668a" stroke-width="2.3" stroke-linejoin="round"/>
<polyline points="259.5,86.4 272.6,99.5 283.1,112.6 292.0,125.7 295.3,132.0 297.9,147.7 303.1,166.0 301.8,192.2 282.2,207.9 274.3,218.4 271.7,224.9" fill="none" stroke="#e0668a" stroke-width="2.3" stroke-linejoin="round"/>
<polyline points="188.0,176.5 208.9,179.1 224.6,192.2 245.5,207.9 271.7,224.9 290.0,235.4 303.1,244.6 333.0,248.5" fill="none" stroke="#e0668a" stroke-width="2.3" stroke-linejoin="round"/>
<polyline points="237.7,155.6 228.5,179.1 225.9,197.4 222.0,210.5 207.6,223.6 198.4,231.5 182.7,249.8 181.4,278.9 167.0,273.4 140.0,285.0 110.0,292.0 95.0,295.0" fill="none" stroke="#e0668a" stroke-width="2.3" stroke-linejoin="round"/>
<polyline points="123.0,278.9 130.9,262.9 141.4,244.6 150.5,228.9 154.5,215.8 157.1,205.3 162.3,184.4 166.0,176.5 170.0,150.0" fill="none" stroke="#e0668a" stroke-width="2.3" stroke-linejoin="round"/>
<polyline points="144.0,207.9 130.9,210.5 117.8,218.4" fill="none" stroke="#e0668a" stroke-width="2.3" stroke-linejoin="round"/>
<polyline points="150.0,230.0 170.0,215.0 188.0,176.5" fill="none" stroke="#e0668a" stroke-width="2.3" stroke-linejoin="round"/>
<polygon points="31.4,100.8 35.3,95.5 45.8,94.2 52.4,92.9 55.0,83.8 57.6,81.2 61.5,86.4 62.8,95.5 66.8,98.2 83.8,98.2 90.3,90.3 98.2,86.4 104.7,82.5 112.6,75.9 116.5,68.1 121.7,64.1 128.3,58.9 136.1,51.0 145.3,48.4 150.5,49.7 151.8,58.9 155.8,57.6 157.1,51.0 165.3,45.8 157.4,45.8 147.0,47.1 139.0,45.8 132.5,39.3 132.5,36.6 136.5,31.4 145.6,27.5 152.2,23.6 158.7,22.3 169.2,28.8 175.7,34.0 178.4,43.2 186.2,49.7 192.8,55.0 188.8,65.4 187.5,78.5 191.4,86.4 178.4,87.7 173.1,90.3 165.3,96.9 170.5,107.3 174.4,120.4 162.6,127.0 154.8,133.5 143.0,129.6 140.4,123.0 152.2,115.2 149.0,112.0 141.4,115.2 131.2,123.0 125.7,128.3 125.7,137.2 120.4,143.8 116.5,151.6 112.6,156.9 123.0,158.2 134.8,159.5 134.8,171.3 130.9,179.1 120.4,181.7 111.3,178.6 90.3,177.8 86.4,171.3 74.6,168.6 78.5,158.2 77.2,150.3 64.1,149.0 58.9,139.9 57.6,132.0 56.3,125.7 47.1,121.7 43.2,115.2 32.7,107.3" fill="#3388ff" fill-opacity="0.2" stroke="#3388ff" stroke-width="3" stroke-linejoin="round"/>
<polygon points="85.1,210.5 89.0,207.9 102.1,207.9 112.6,210.5 116.5,215.8 117.8,223.6 109.9,226.2 104.7,230.2 99.5,235.4 95.5,228.9 91.6,221.0 83.8,218.4" fill="#3388ff" fill-opacity="0.2" stroke="#3388ff" stroke-width="3" stroke-linejoin="round"/>
<polygon points="123.0,222.3 130.9,213.2 141.4,206.6 150.5,209.2 147.9,231.5 159.7,234.1 161.0,253.7 157.1,256.3 142.7,256.3 141.4,251.1 133.5,253.7 144.0,240.6 137.4,235.4 130.9,231.5 125.7,228.9" fill="#3388ff" fill-opacity="0.2" stroke="#3388ff" stroke-width="3" stroke-linejoin="round"/>
<polygon points="206.3,163.4 227.2,155.6 236.4,155.6 242.9,160.8 256.0,156.9 273.0,158.2 276.9,173.9 280.9,184.4 266.5,179.1 261.2,188.3 259.9,196.1 250.8,194.8 239.0,190.9 229.8,185.7 231.1,181.7 219.4,181.7 208.9,176.5" fill="#3388ff" fill-opacity="0.2" stroke="#3388ff" stroke-width="3" stroke-linejoin="round"/>
<polygon points="181.4,215.8 195.8,210.5 201.0,214.5 219.4,215.8 229.8,221.0 227.2,232.8 222.0,247.2 208.9,239.3 198.4,235.4 193.2,247.2 182.7,248.5 178.8,223.6" fill="#3388ff" fill-opacity="0.2" stroke="#3388ff" stroke-width="3" stroke-linejoin="round"/>
<polyline points="132.5,39.3 139.0,45.8 150.9,49.7 153.5,60.2 157.4,56.3 165.3,45.8 164.0,35.3" fill="none" stroke="#3388ff" stroke-width="3" stroke-linejoin="round"/>
<polyline points="131.2,123.0 135.0,118.0 141.4,115.2" fill="none" stroke="#3388ff" stroke-width="3"/>
<rect x="74.6" y="32.7" width="30.6" height="13.1" rx="2" fill="#f3ccd2" stroke="#d8a3ac" stroke-width="0.8"/>
<text x="89.9" y="42.5" font-size="8.2" text-anchor="middle" fill="#7c3647" font-family="Liberation Sans">A 466</text>
<rect x="152.2" y="22.3" width="24.8" height="11.7" rx="2" fill="#f3ccd2" stroke="#d8a3ac" stroke-width="0.8"/>
<text x="164.6" y="30.7" font-size="8.2" text-anchor="middle" fill="#7c3647" font-family="Liberation Sans">A 46</text>
<rect x="247.7" y="87.7" width="31.4" height="11.3" rx="2" fill="#f3ccd2" stroke="#d8a3ac" stroke-width="0.8"/>
<text x="263.4" y="95.7" font-size="8.2" text-anchor="middle" fill="#7c3647" font-family="Liberation Sans">A 432</text>
<rect x="291.3" y="232.8" width="27.0" height="13.1" rx="2" fill="#f3ccd2" stroke="#d8a3ac" stroke-width="0.8"/>
<text x="304.8" y="242.6" font-size="8.2" text-anchor="middle" fill="#7c3647" font-family="Liberation Sans">A 43</text>
<text x="184.9" y="95.2" font-size="8.6" text-anchor="middle" fill="#404040" stroke="#ffffff" stroke-width="1.6" stroke-opacity="0.75" paint-order="stroke" font-family="Liberation Sans">Rillieux-la-</text>
<text x="186.7" y="105.2" font-size="8.6" text-anchor="middle" fill="#404040" stroke="#ffffff" stroke-width="1.6" stroke-opacity="0.75" paint-order="stroke" font-family="Liberation Sans">Pape</text>
<text x="198.8" y="138" font-size="8.6" text-anchor="middle" fill="#404040" stroke="#ffffff" stroke-width="1.6" stroke-opacity="0.75" paint-order="stroke" font-family="Liberation Sans">Vaulx-en-Velin</text>
<text x="248.5" y="139.2" font-size="8.6" text-anchor="middle" fill="#404040" stroke="#ffffff" stroke-width="1.6" stroke-opacity="0.75" paint-order="stroke" font-family="Liberation Sans">Meyzieu</text>
<text x="113.9" y="140.3" font-size="8.6" text-anchor="middle" fill="#404040" stroke="#ffffff" stroke-width="1.6" stroke-opacity="0.75" paint-order="stroke" font-family="Liberation Sans">Ecully</text>
<text x="147.9" y="157.2" font-size="12" text-anchor="middle" fill="#404040" stroke="#ffffff" stroke-width="1.6" stroke-opacity="0.75" paint-order="stroke" font-family="Liberation Sans">Lyon</text>
<text x="191.9" y="175.7" font-size="8.6" text-anchor="middle" fill="#404040" stroke="#ffffff" stroke-width="1.6" stroke-opacity="0.75" paint-order="stroke" font-family="Liberation Sans">Bron</text>
<text x="242.9" y="176.2" font-size="8.6" text-anchor="middle" fill="#404040" stroke="#ffffff" stroke-width="1.6" stroke-opacity="0.75" paint-order="stroke" font-family="Liberation Sans">Genas</text>
<text x="107.9" y="173.8" font-size="8.6" text-anchor="middle" fill="#404040" stroke="#ffffff" stroke-width="1.6" stroke-opacity="0.75" paint-order="stroke" font-family="Liberation Sans">Francheville</text>
<text x="130.9" y="191.4" font-size="8.6" text-anchor="middle" fill="#404040" stroke="#ffffff" stroke-width="1.6" stroke-opacity="0.75" paint-order="stroke" font-family="Liberation Sans">Oullins</text>
<text x="124.3" y="203.1" font-size="8.6" text-anchor="middle" fill="#404040" stroke="#ffffff" stroke-width="1.6" stroke-opacity="0.75" paint-order="stroke" font-family="Liberation Sans">Saint-Genis-</text>
<text x="124.3" y="212.8" font-size="8.6" text-anchor="middle" fill="#404040" stroke="#ffffff" stroke-width="1.6" stroke-opacity="0.75" paint-order="stroke" font-family="Liberation Sans">Laval</text>
<text x="181.4" y="205.8" font-size="8.6" text-anchor="middle" fill="#404040" stroke="#ffffff" stroke-width="1.6" stroke-opacity="0.75" paint-order="stroke" font-family="Liberation Sans">Vénissieux</text>
<text x="100.8" y="225.4" font-size="8.6" text-anchor="middle" fill="#404040" stroke="#ffffff" stroke-width="1.6" stroke-opacity="0.75" paint-order="stroke" font-family="Liberation Sans">Brignais</text>
<text x="219.4" y="234.1" font-size="8.6" text-anchor="middle" fill="#404040" stroke="#ffffff" stroke-width="1.6" stroke-opacity="0.75" paint-order="stroke" font-family="Liberation Sans">Mions</text>
<path transform="translate(211.5,177.8)" d="M-5,0.8 L-1,-0.2 L-1,-4 Q0,-5.5 1,-4 L1,-0.2 L5,0.8 L5,1.8 L1,1.2 L1,3.5 L2.5,4.5 L2.5,5 L0,4.4 L-2.5,5 L-2.5,4.5 L-1,3.5 L-1,1.2 L-5,1.8 Z" fill="#7d6fd8" transform-origin="0 0"/>
<path transform="translate(295.3,180.4)" d="M-5,0.8 L-1,-0.2 L-1,-4 Q0,-5.5 1,-4 L1,-0.2 L5,0.8 L5,1.8 L1,1.2 L1,3.5 L2.5,4.5 L2.5,5 L0,4.4 L-2.5,5 L-2.5,4.5 L-1,3.5 L-1,1.2 L-5,1.8 Z" fill="#7d6fd8" transform-origin="0 0"/>
<ellipse cx="166" cy="114" rx="10" ry="5" fill="#000" opacity="0.28" transform="rotate(-35 166 114)"/>
<path d="M159.5,86.9 C154,86.9 150.1,91 150.1,96.3 C150.1,102.5 156.5,108 159.5,117.8 C162.5,108 169,102.5 169,96.3 C169,91 165,86.9 159.5,86.9 Z" fill="#2b82cb" stroke="#2474b5" stroke-width="0.6"/>
<circle cx="159.5" cy="96.3" r="3.2" fill="#fff"/>
</svg>
<div class="a" style="left:714px;top:8px;width:333px;height:295px;border:1px solid rgba(0,0,0,0.18);border-radius:3px"></div>
<div class="a" style="left:723.5px;top:17.5px;width:24.5px;height:49px;background:#fff;border:1px solid rgba(0,0,0,0.3);border-radius:4px"></div>
<div class="a" style="left:724.5px;top:41.5px;width:22.5px;height:1px;background:#c8c8c8"></div>
<div class="a" style="left:731px;top:28.8px;width:10.2px;height:2.4px;background:#000"></div>
<div class="a" style="left:734.9px;top:25px;width:2.5px;height:10px;background:#000"></div>
<div class="a" style="left:731px;top:53px;width:10.2px;height:2.4px;background:#000"></div>
<div class="a" style="left:912px;top:290px;width:135px;height:13px;background:rgba(255,255,255,0.82)"></div>
<div class="a" style="left:914.8px;top:294px;width:10px;height:3.5px;background:#0057b7"></div>
<div class="a" style="left:914.8px;top:297.5px;width:10px;height:3.5px;background:#ffd700"></div>
<div class="a" style="left:928px;top:291px;font-size:9.6px;letter-spacing:0px;line-height:11px;color:#333"><span style="color:#0078a8">Leaflet</span> | © OpenStreetMap</div>

<!-- Card 3 -->
<div class="card" style="left:10px;top:309px;width:1037px;height:270px"></div>
<div class="a" style="left:17px;top:316px;width:95px;height:31px;background:#6c757d;border-radius:4px"></div>
<svg class="a" style="left:28px;top:324px" width="14" height="14" viewBox="0 0 14 14"><path d="M7 1.5V9.5M3.8 6.5L7 9.7L10.2 6.5M1.2 9V12.3H12.8V9" fill="none" stroke="#fff" stroke-width="1.2"/></svg><div class="a" style="left:45px;top:325px;font-size:13.5px;letter-spacing:-0.6px;line-height:16px;color:#fff">Exporter</div><div class="a" style="left:95px;top:330px;width:0;height:0;border-left:3.2px solid transparent;border-right:3.2px solid transparent;border-top:3.5px solid #fff"></div>
<div class="inp" style="left:278px;top:316px;width:56px;height:25px"></div>
<div class="a" style="left:286px;top:321px;font-size:11px;line-height:14px">10</div>
<svg class="a" style="left:313px;top:325px" width="10" height="6" viewBox="0 0 10 6"><path d="M1 1L5 5L9 1" fill="none" stroke="#343a40" stroke-width="1.4"/></svg>
<div class="a" style="left:337px;top:320px;font-size:13.5px;letter-spacing:-0.55px;line-height:16px">entrées</div>
<div class="a" style="left:864px;top:320px;font-size:13.5px;letter-spacing:-0.55px;line-height:16px">Filtre</div>
<div class="inp" style="left:898px;top:316px;width:142px;height:25px"></div>

<div class="red" style="left:11px;top:358px;width:251px;height:28px"></div>
<div class="a" style="left:18px;top:362px;font-size:16px;line-height:18px;color:#6c757d">Agglomération de Lyon - Zone 8</div>

<div class="sel" style="left:24px;top:395px;width:74px;height:13px">Appartement</div>
<svg class="a" style="left:83.5px;top:398px" width="11" height="7" viewBox="0 0 11 7"><path d="M1.2 1.2L5.5 5.5L9.8 1.2" fill="none" stroke="#000" stroke-width="2.2"/></svg>
<div class="sel" style="left:180px;top:395px;width:100px;height:13px">Appart 1P</div>
<svg class="a" style="left:265px;top:398px" width="11" height="7" viewBox="0 0 11 7"><path d="M1.2 1.2L5.5 5.5L9.8 1.2" fill="none" stroke="#000" stroke-width="2.2"/></svg>
<div class="sel" style="left:384px;top:395px;width:96px;height:13px;border:2px solid #000;border-radius:3px;line-height:9px">1. Avant 1946</div>
<svg class="a" style="left:466px;top:398px" width="11" height="7" viewBox="0 0 11 7"><path d="M1.2 1.2L5.5 5.5L9.8 1.2" fill="none" stroke="#000" stroke-width="2.2"/></svg>
<div class="sel" style="left:580px;top:395px;width:41px;height:13px"></div>
<svg class="a" style="left:605.5px;top:398px" width="11" height="7" viewBox="0 0 11 7"><path d="M1.2 1.2L5.5 5.5L9.8 1.2" fill="none" stroke="#000" stroke-width="2.2"/></svg>

<div class="hl" style="left:17px;top:414px;width:1023px"></div>
<div class="stripe" style="left:17px;top:455px;width:1023px;height:53px"></div>
<div class="hl" style="left:17px;top:454px;width:1023px"></div>
<div class="hl" style="left:17px;top:507px;width:1023px"></div>
<div class="hl" style="left:17px;top:560px;width:1023px"></div>

<div class="a th" style="left:24px;top:428px">Type</div>
<div class="sort up" style="left:160px;top:429px"></div>
<div class="a th" style="left:181px;top:428px">Pièces</div>
<div class="sort" style="left:363px;top:429px"></div>
<div class="a th" style="left:384px;top:422px">Année<br>construction</div>
<div class="sort" style="left:560px;top:429px"></div>
<div class="a th" style="left:600px;top:428px">Année</div>
<div class="sort" style="left:657px;top:429px"></div>
<div class="a th" style="left:677px;top:422px">Loyer<br>€ / m2</div>
<div class="sort" style="left:755px;top:429px"></div>
<div class="a th" style="left:775px;top:422px">Loyer<br>mensuel €</div>
<div class="sort" style="left:880px;top:429px"></div>
<div class="a th" style="left:929px;top:422px;width:60px;text-align:center">Surface<br>moyenne m2</div>
<div class="sort" style="left:1026px;top:429px"></div>

<div class="a sm" style="left:24px;top:476px;line-height:12px">Appartement</div>
<div class="a sm" style="left:181px;top:476px;line-height:12px">Appart 1P</div>
<div class="a sm" style="left:384px;top:476px;line-height:12px">1. Avant 1946</div>
<div class="a sm" style="left:602px;width:40px;text-align:center;top:476px;line-height:12px">2019</div>
<div class="bar" style="left:678px;top:477px;width:83px"></div>
<div class="a sm" style="left:678px;width:83px;text-align:center;top:464px;line-height:12px">16</div>
<div class="a sm" style="left:687px;top:488px;line-height:12px">12</div>
<div class="a sm" style="left:678px;width:75px;text-align:right;top:488px;line-height:12px">20</div>
<div class="bar" style="left:776px;top:477px;width:110px"></div>
<div class="a sm" style="left:776px;width:110px;text-align:center;top:464px;line-height:12px">436</div>
<div class="a sm" style="left:786px;top:488px;line-height:12px">371</div>
<div class="a sm" style="left:776px;width:99px;text-align:right;top:488px;line-height:12px">580</div>
<div class="a sm" style="left:946px;width:40px;text-align:center;top:476px;line-height:12px">29</div>
<div class="a sm" style="left:24px;top:529px;line-height:12px">Appartement</div>
<div class="a sm" style="left:181px;top:529px;line-height:12px">Appart 1P</div>
<div class="a sm" style="left:384px;top:529px;line-height:12px">1. Avant 1946</div>
<div class="a sm" style="left:602px;width:40px;text-align:center;top:529px;line-height:12px">2018</div>
<div class="bar" style="left:678px;top:530px;width:83px"></div>
<div class="a sm" style="left:678px;width:83px;text-align:center;top:517px;line-height:12px">16</div>
<div class="a sm" style="left:687px;top:541px;line-height:12px">11</div>
<div class="a sm" style="left:678px;width:75px;text-align:right;top:541px;line-height:12px">20</div>
<div class="bar" style="left:776px;top:530px;width:110px"></div>
<div class="a sm" style="left:776px;width:110px;text-align:center;top:517px;line-height:12px">436</div>
<div class="a sm" style="left:786px;top:541px;line-height:12px">363</div>
<div class="a sm" style="left:776px;width:99px;text-align:right;top:541px;line-height:12px">580</div>
<div class="a sm" style="left:946px;width:40px;text-align:center;top:529px;line-height:12px">29</div>
<div class="red" style="left:664px;top:418px;width:233px;height:143px"></div>

</body></html>
